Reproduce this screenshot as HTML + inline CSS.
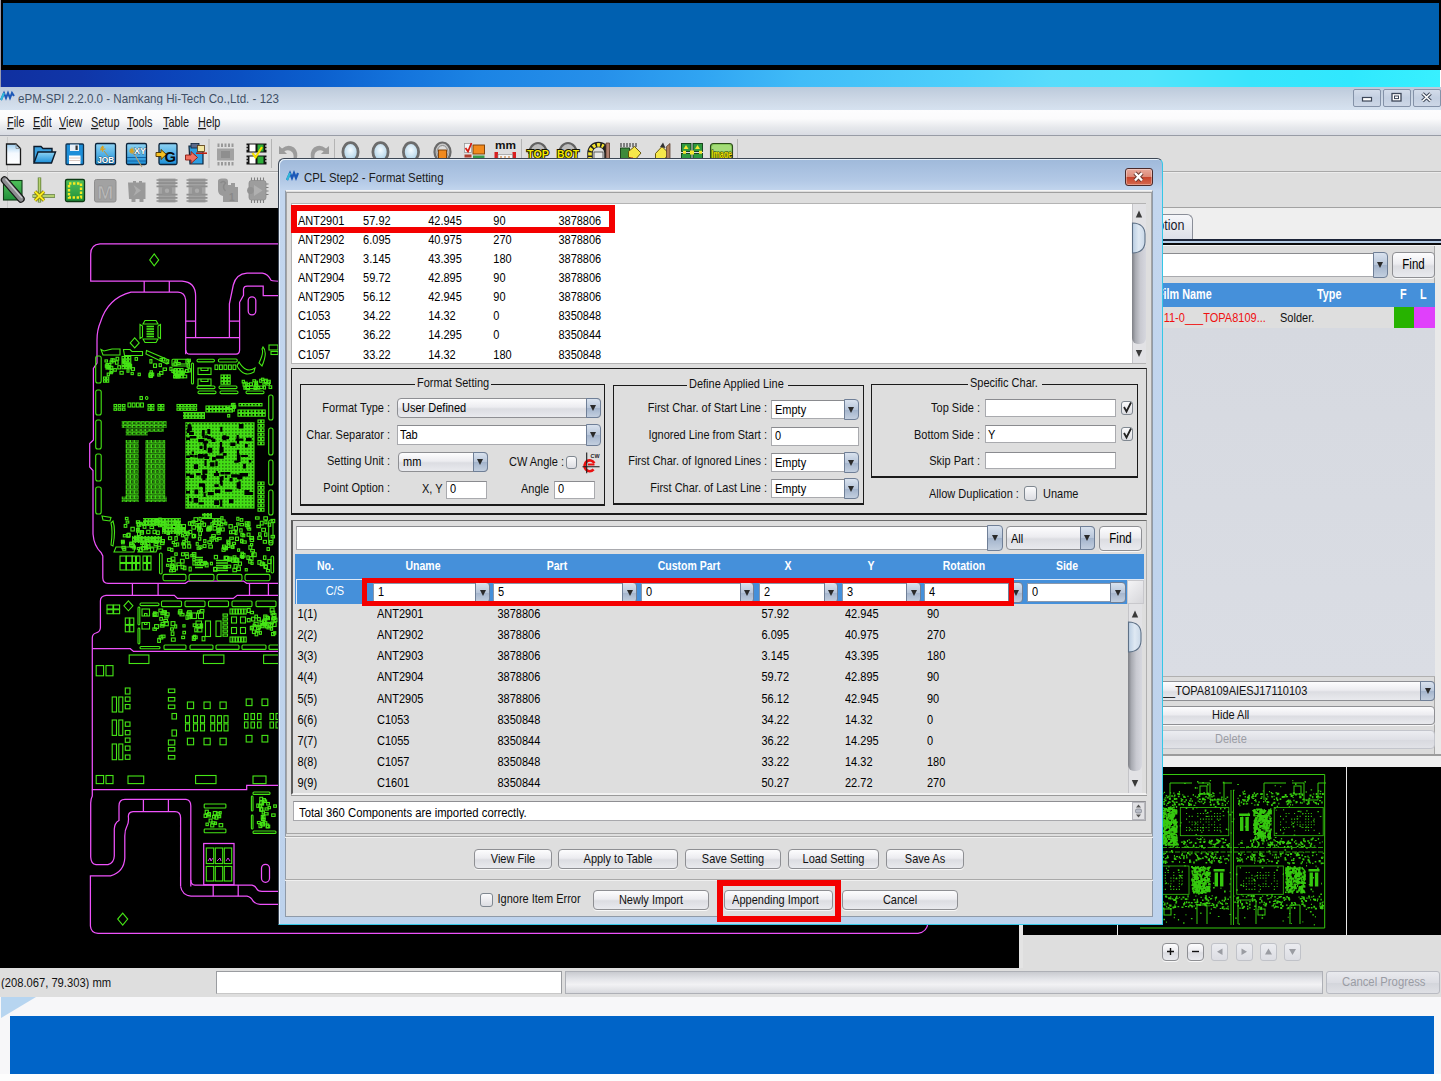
<!DOCTYPE html>
<html><head><meta charset="utf-8"><title>ePM-SPI</title>
<style>
html,body{margin:0;padding:0}
body{width:1441px;height:1081px;overflow:hidden;position:relative;background:#fff;font-family:"Liberation Sans",sans-serif;}
div{position:absolute;box-sizing:border-box}
svg{position:absolute;overflow:visible}
.t{position:absolute;white-space:nowrap;transform-origin:0 0;font-family:"Liberation Sans",sans-serif;}
.btn{border:1px solid #8e8f93;border-radius:4px;background:linear-gradient(#fdfdfe 0%,#ececf0 45%,#dcdde2 55%,#e9eaee 100%);box-shadow:0 1px 0 #f8f8f8}
.fld{background:#fff;border:1px solid #a9aaae;border-top-color:#8a8b8f}
.cbb{border:1px solid #6f7f97;border-radius:0 4px 4px 0;background:linear-gradient(#d9e2ee 0%,#b8c6da 50%,#a3b4cc 51%,#c3cfdf 100%)}
.cbn{border:1px solid #8e8f93;border-radius:4px;background:linear-gradient(#fdfdfe 0%,#ececf0 45%,#dcdde2 55%,#e9eaee 100%)}
.arr{width:0;height:0;border-left:3px solid transparent;border-right:3px solid transparent;border-top:6px solid #2a2a2a}
.chk{border:1px solid #7f8790;border-radius:3px;background:linear-gradient(#fbfbfc,#dcdde2)}

</style></head>
<body>
<div style="left:0px;top:0px;width:1px;height:1081px;background:#9a9cb0"></div>
<div style="left:1px;top:0px;width:1440px;height:70px;background:#000"></div>
<div style="left:3px;top:3px;width:1436px;height:62px;background:#0060b0"></div>
<div style="left:1px;top:70px;width:1439px;height:17px;background:linear-gradient(90deg,#1030a0 0.0%,#1036a8 5.6%,#0c42b8 11.1%,#0a50c2 16.7%,#0c60ce 22.2%,#1474dc 27.8%,#1c84e4 33.4%,#2690ea 41.7%,#30a4f2 48.6%,#40bcf8 55.6%,#48c8fa 62.5%,#4cd0fc 66.7%,#58dcfc 73.0%,#50e4fc 79.9%,#38e4fc 86.9%,#30e8fe 93.8%,#38f0ff 100.0%)"></div>
<div style="left:0px;top:87px;width:1441px;height:23px;background:linear-gradient(#bccadb 0%,#cdd8e6 55%,#d6e2f0 100%)"></div>
<svg style="left:1px;top:92px" width="14" height="10" viewBox="0 0 14 10"><path d="M0 8 L3 1 L5 6 L7 1 L9 6 L11 1 L13 4" fill="none" stroke="#1c58b8" stroke-width="2"/><path d="M0 8 L3 1" stroke="#30b8d8" stroke-width="2"/></svg>
<span class="t" style="left:18px;top:91.90px;font-size:11.6px;line-height:11.6px;transform:scale(1,1.08);color:#3f5066;">ePM-SPI 2.2.0.0 - Namkang Hi-Tech Co.,Ltd. - 123</span>
<div style="left:1353px;top:89px;width:28px;height:18px;border:1px solid #8492a8;border-radius:2px;background:linear-gradient(#d3dcea,#c3cfe1 50%,#cdd7e6)"></div>
<div style="left:1383px;top:89px;width:28px;height:18px;border:1px solid #8492a8;border-radius:2px;background:linear-gradient(#d3dcea,#c3cfe1 50%,#cdd7e6)"></div>
<div style="left:1413px;top:89px;width:28px;height:18px;border:1px solid #8492a8;border-radius:2px;background:linear-gradient(#d3dcea,#c3cfe1 50%,#cdd7e6)"></div>
<svg style="left:1353px;top:89px" width="88" height="18" viewBox="0 0 88 18"><rect x="9.5" y="8.5" width="9" height="3.5" fill="#fff" stroke="#3c4658" stroke-width="1.2"/><rect x="39" y="4.5" width="9" height="7.5" fill="#fff" stroke="#3c4658" stroke-width="1.3"/><rect x="41.5" y="7" width="4" height="2.6" fill="#fff" stroke="#3c4658" stroke-width="1"/><path d="M69.5 4.5 L77.5 12 M77.5 4.5 L69.5 12" stroke="#3c4658" stroke-width="3.6"/><path d="M69.5 4.5 L77.5 12 M77.5 4.5 L69.5 12" stroke="#fff" stroke-width="1.6"/></svg>
<div style="left:0px;top:110px;width:1441px;height:26px;background:linear-gradient(#fdfdfe 0%,#fbfbfc 35%,#e6e8ec 70%,#d9dce3 100%);border-bottom:1px solid #989ca6"></div>
<span class="t" style="left:7px;top:115.01px;font-size:10.9px;line-height:10.9px;transform:scale(1,1.3);color:#1a1a1a;"><u>F</u>ile</span>
<span class="t" style="left:33px;top:115.01px;font-size:10.9px;line-height:10.9px;transform:scale(1,1.3);color:#1a1a1a;"><u>E</u>dit</span>
<span class="t" style="left:59px;top:115.01px;font-size:10.9px;line-height:10.9px;transform:scale(1,1.3);color:#1a1a1a;"><u>V</u>iew</span>
<span class="t" style="left:91px;top:115.01px;font-size:10.9px;line-height:10.9px;transform:scale(1,1.3);color:#1a1a1a;"><u>S</u>etup</span>
<span class="t" style="left:127px;top:115.01px;font-size:10.9px;line-height:10.9px;transform:scale(1,1.3);color:#1a1a1a;"><u>T</u>ools</span>
<span class="t" style="left:163px;top:115.01px;font-size:10.9px;line-height:10.9px;transform:scale(1,1.3);color:#1a1a1a;"><u>T</u>able</span>
<span class="t" style="left:198px;top:115.01px;font-size:10.9px;line-height:10.9px;transform:scale(1,1.3);color:#1a1a1a;"><u>H</u>elp</span>
<div style="left:0px;top:136px;width:1441px;height:73px;background:#dedede"></div>
<div style="left:0px;top:171px;width:1441px;height:1px;background:#a8a8a8"></div>
<div style="left:0px;top:172px;width:1441px;height:1px;background:#ececec"></div>
<div style="left:7px;top:137px;width:1px;height:71px;background:#c9c9c9"></div>
<div style="left:0px;top:208px;width:1020px;height:760px;background:#000"></div>
<div style="left:0px;top:968px;width:1441px;height:29px;background:#dedede"></div>
<span class="t" style="left:1px;top:976.41px;font-size:11.2px;line-height:11.2px;transform:scale(1,1.17);color:#111;">(208.067, 79.303) mm</span>
<div style="left:216px;top:971px;width:346px;height:23px;background:#fff;border:1px solid #9a9ca0;border-bottom-color:#c8c8c8"></div>
<div style="left:565px;top:971px;width:758px;height:23px;border:1px solid #aeb0b6;background:linear-gradient(#c9cbd0 0%,#e4e5e9 35%,#f2f2f4 60%,#d8d9de 100%)"></div>
<div style="left:1326px;top:971px;width:114px;height:23px;border:1px solid #b9bbc2;border-radius:3px;background:linear-gradient(#e9eaee,#dcdde3 50%,#d3d5db 52%,#dfe0e5)"></div>
<span class="t" style="left:1342px;top:976.40px;font-size:11.3px;line-height:11.3px;transform:scale(1,1.16);color:#9a9ca4;">Cancel Progress</span>
<div style="left:0px;top:997px;width:1441px;height:84px;background:#f7f7f9"></div>
<svg style="left:0;top:997px" width="40" height="22"><polygon points="1,0 36,0 1,21" fill="#b7d5f0"/></svg>
<div style="left:10px;top:1016px;width:1424px;height:58px;background:#0064c8"></div>
<div style="left:0px;top:1074px;width:1441px;height:7px;background:#fdfdfd"></div>
<svg style="left:0;top:136px" width="760" height="72" viewBox="0 136 760 72" font-family="Liberation Sans, sans-serif"><defs><linearGradient id="gb" x1="0" y1="0" x2="0" y2="1"><stop offset="0" stop-color="#8fd4f4"/><stop offset="1" stop-color="#1b8fd8"/></linearGradient><linearGradient id="gd" x1="0" y1="0" x2="0" y2="1"><stop offset="0" stop-color="#9fd0f2"/><stop offset=".45" stop-color="#f4f9fe"/><stop offset="1" stop-color="#fff"/></linearGradient><linearGradient id="gg" x1="0" y1="0" x2="0" y2="1"><stop offset="0" stop-color="#4fc05a"/><stop offset="1" stop-color="#1f8f38"/></linearGradient><radialGradient id="gl" cx=".5" cy=".4" r=".6"><stop offset="0" stop-color="#f4fbff"/><stop offset="1" stop-color="#a9cfe6"/></radialGradient></defs><path d="M6.5 144 H16 L20.5 148.5 V164.5 H6.5 Z" fill="url(#gd)" stroke="#1a1a1a" stroke-width="1.3"/><path d="M16 144 V148.5 H20.5" fill="none" stroke="#888" stroke-width=".8"/><path d="M34 162.5 V146.5 H41 L43 148.5 H52 V152" fill="#3aa0de" stroke="#0c1a2a" stroke-width="1.4"/><path d="M34 163 L38 152 H55.5 L51.5 163 Z" fill="url(#gb)" stroke="#0c1a2a" stroke-width="1.4"/><rect x="66" y="144" width="17.5" height="20.5" rx="1" fill="#1d8fd9" stroke="#12324e" stroke-width="1.3"/><rect x="70" y="144.5" width="9" height="6.5" fill="#e8f0f8"/><rect x="75.5" y="145.5" width="2.2" height="4.5" fill="#333"/><rect x="69" y="155.5" width="11.5" height="8.5" fill="#fff"/><path d="M69 158 H80.5 M69 160.5 H80.5" stroke="#d9c8c0" stroke-width="1"/><rect x="95.5" y="143.5" width="20" height="21" rx="1.5" fill="url(#gb)" stroke="#0c2238" stroke-width="1.3"/><path d="M101 147 l3 3 M104 146.5 l-3.5 4 M100 149 h5.5 M102.5 145.8 v6" stroke="#d9a020" stroke-width="1.1"/><path d="M104 151 L108 156" stroke="#c09030" stroke-width=".9"/><text x="97.2" y="162.5" font-size="9.2" font-weight="bold" fill="#fff" stroke="#111" stroke-width=".55" paint-order="stroke" textLength="17" lengthAdjust="spacingAndGlyphs">JOB</text><rect x="126.5" y="143.5" width="20" height="21" rx="1.5" fill="url(#gb)" stroke="#0c2238" stroke-width="1.3"/><path d="M127 157.5 H146 M127 161 H146" stroke="#0e5c9c" stroke-width=".9"/><path d="M130 149 l3.5 3.5 M133.5 148.8 l-3.5 4 M129 151 h6 M132 147.5 v6.5" stroke="#d9a020" stroke-width="1.1"/><path d="M133 152 L142 167" stroke="#b8a070" stroke-width="1.1"/><text x="134" y="154" font-size="9.5" font-weight="bold" fill="#fff" stroke="#111" stroke-width=".55" paint-order="stroke" textLength="12" lengthAdjust="spacingAndGlyphs">XY</text><rect x="159" y="143.5" width="18" height="21" rx="1.5" fill="url(#gb)" stroke="#0c2238" stroke-width="1.3"/><path d="M156 152.5 H161 V149.5 L166.5 154.5 L161 159.5 V156.5 H156 Z" fill="#f5c020" stroke="#4a3000" stroke-width=".9"/><text x="164.5" y="161.5" font-size="14" font-weight="bold" fill="#0a0a0a" textLength="11.5" lengthAdjust="spacingAndGlyphs">G</text><path d="M189 146 H203 V164 H190 Z" fill="#2f9ee0" stroke="#0c2238" stroke-width="1.2"/><rect x="191" y="143.5" width="8" height="4.5" fill="#5a6a8a" stroke="#0c2238" stroke-width=".8"/><rect x="197.5" y="145.5" width="7" height="6" fill="#f2e6a0" stroke="#5a3a10" stroke-width=".8"/><path d="M196 153.2 H207" stroke="#c02010" stroke-width="1.6"/><path d="M185.500 155 H191 V151.5 L197.5 157.5 L191 163.5 V160 H185.5 Z" fill="#f07060" stroke="#8a1a10" stroke-width=".9"/><path d="M209 139 V168 M271.500 139 V168 M334.500 139 V168" stroke="#b4b4b4" stroke-width="1"/><rect x="217" y="148.500" width="17" height="12" fill="#a2a2a2"/><rect x="221" y="151" width="9" height="7" fill="#8e8e8e"/><path d="M218.500 143.500 v3.500 M222 143.500 v3.500 M225.500 143.500 v3.500 M229 143.500 v3.500 M232.500 143.500 v3.500 M218.500 162 v3.500 M222 162 v3.500 M225.500 162 v3.500 M229 162 v3.500 M232.500 162 v3.500" stroke="#999" stroke-width="2"/><rect x="246.500" y="143.500" width="20" height="9" fill="#111"/><rect x="246.500" y="155.500" width="20" height="9" fill="#111"/><rect x="249.500" y="144.500" width="6" height="7" fill="#fff"/><rect x="257.500" y="144.500" width="6" height="7" fill="#2fae3a"/><rect x="249.500" y="156.500" width="6" height="7" fill="#fff"/><rect x="257.500" y="156.500" width="6" height="7" fill="#2fae3a"/><path d="M246 146 h2 M246 149 h2 M246 158 h2 M246 161 h2 M265 146 h2 M265 149 h2 M265 158 h2 M265 161 h2" stroke="#fff" stroke-width="1"/><path d="M252.500 153 L255.500 157.500 L262 147" fill="none" stroke="#f4e000" stroke-width="2.2"/><path d="M279 146 V154 H287 L284.300 151.300 Q289 148.500 292.500 152.500 Q294.500 156 293 160 L296.500 160 Q299 152 294 147.500 Q288 143.500 282 148.500 Z" fill="#9c9c9c"/><path d="M329 146 V154 H321 L323.700 151.300 Q319 148.500 315.500 152.500 Q313.500 156 315 160 L311.500 160 Q309 152 314 147.500 Q320 143.500 326 148.500 Z" fill="#9c9c9c"/><ellipse cx="350.5" cy="152" rx="7.6" ry="9.3" fill="url(#gl)" stroke="#6c6c6c" stroke-width="2.800"/><rect x="347.5" y="158.500" width="6" height="3" fill="#f08020"/><ellipse cx="380.5" cy="152" rx="7.6" ry="9.3" fill="url(#gl)" stroke="#6c6c6c" stroke-width="2.800"/><rect x="377.5" y="158.500" width="6" height="3" fill="#f08020"/><ellipse cx="411" cy="152" rx="7.6" ry="9.3" fill="url(#gl)" stroke="#6c6c6c" stroke-width="2.800"/><rect x="408" y="158.500" width="6" height="3" fill="#f08020"/><ellipse cx="442.500" cy="152" rx="8" ry="9.500" fill="#c9c9c9" stroke="#6a6a6a" stroke-width="2.2"/><ellipse cx="442.500" cy="152.500" rx="5.500" ry="7" fill="#ddd" stroke="#888" stroke-width="1"/><rect x="438.500" y="150" width="8" height="9" fill="#f08a20" stroke="#7a3a00" stroke-width=".9"/><rect x="464.500" y="143.500" width="7" height="9" fill="#f4f4f4" stroke="#999" stroke-width=".8"/><path d="M465.500 148 L468 151.500 L471.500 143" fill="none" stroke="#d81a10" stroke-width="1.7"/><rect x="473" y="145" width="11.500" height="9" fill="#f28a1c" stroke="#7a3a00" stroke-width=".9"/><rect x="464.500" y="154.500" width="7" height="3" fill="#b04030"/><rect x="473" y="155.500" width="11.500" height="2.500" fill="#3a9a4a"/><text x="495" y="148.500" font-size="10.5" font-weight="bold" fill="#111" textLength="21" lengthAdjust="spacingAndGlyphs">mm</text><rect x="494.500" y="152" width="3.500" height="8" fill="#d82020"/><rect x="512.500" y="152" width="3.500" height="8" fill="#d82020"/><rect x="498" y="154.500" width="14.500" height="5.500" fill="#f4f4f4" stroke="#888" stroke-width=".6"/><path d="M501 156 v4 M505 156 v4 M509 156 v4" stroke="#c07020" stroke-width="1"/><path d="M521.500 139 V168 M737.500 139 V168" stroke="#b4b4b4" stroke-width="1"/><path d="M529 154 A9 11 0 0 1 547 154" fill="#bcbcbc" stroke="#626262" stroke-width="2.2"/><text x="527" y="157.800" font-size="11.5" font-weight="bold" fill="#f4e800" stroke="#111100" stroke-width="2" paint-order="stroke" textLength="22" lengthAdjust="spacingAndGlyphs">TOP</text><path d="M559 154 A9 11 0 0 1 577 154" fill="#bcbcbc" stroke="#626262" stroke-width="2.2"/><text x="557" y="157.800" font-size="11.5" font-weight="bold" fill="#f4e800" stroke="#111100" stroke-width="2" paint-order="stroke" textLength="22" lengthAdjust="spacingAndGlyphs">BOT</text><path d="M590 160 V153 A8.500 8.500 0 0 1 607 153 V160" fill="none" stroke="#222" stroke-width="5.500"/><path d="M590 160 V153 A8.500 8.500 0 0 1 603.500 146.500" fill="none" stroke="#f4e430" stroke-width="3.600" stroke-dasharray="3 1.600"/><path d="M606 143 h3.500 v17 h-3.500z" fill="#b08070" stroke="#503020" stroke-width=".7"/><rect x="594" y="152" width="9" height="8" fill="#e8e8e8" stroke="#444" stroke-width=".8"/><rect x="620.500" y="148" width="9" height="12" fill="#3d8a3a" stroke="#143a14" stroke-width=".9"/><path d="M621 143 v4 M624 143 v4 M627 143 v4 M630 143 v4 M633 143 v4 M636 143 v4" stroke="#222" stroke-width="1"/><path d="M628.500 151.500 L634.500 146.500 L641 153 L635 160 L628.500 157 Z" fill="#f6e84a" stroke="#5a4a00" stroke-width=".9"/><rect x="630" y="157.500" width="3" height="3" fill="#c82020"/><path d="M655.500 153.500 L662 146.500 L669 153.500 L663 161 L655.500 158.500 Z" fill="#f6e84a" stroke="#5a4a00" stroke-width=".9"/><path d="M660 147 L663 142.500 L665.500 148" fill="#333"/><path d="M666.500 160 V146.500 L670 143.500 V160 Z" fill="#b08060" stroke="#503020" stroke-width=".7"/><rect x="681.500" y="143.500" width="9.500" height="8" fill="#2f9a40" stroke="#0e3a14" stroke-width=".9"/><rect x="693" y="143.500" width="9.500" height="8" fill="#2f9a40" stroke="#0e3a14" stroke-width=".9"/><rect x="681.500" y="153.500" width="9.500" height="7" fill="#2f9a40" stroke="#0e3a14" stroke-width=".9"/><rect x="693" y="153.500" width="9.500" height="7" fill="#2f9a40" stroke="#0e3a14" stroke-width=".9"/><path d="M686 145 l2.500 4 h-5z M697.500 145 l2.500 4 h-5z" fill="#f4e830"/><rect x="690" y="150.500" width="4" height="4" fill="#f4e830"/><rect x="683" y="150.800" width="3" height="3" fill="#f4e830"/><rect x="699" y="150.800" width="3" height="3" fill="#f4e830"/><rect x="710.500" y="143.500" width="22" height="17" rx="3" fill="#86c85a" stroke="#2a4a18" stroke-width="1.1"/><rect x="712" y="145" width="19" height="6" rx="2" fill="#a4dc78"/><text x="711.500" y="158.200" font-size="10.5" font-weight="bold" fill="#f4e800" stroke="#1a1a00" stroke-width="1.1" paint-order="stroke" textLength="20.500" lengthAdjust="spacingAndGlyphs">Image</text><rect x="3.500" y="180.500" width="18.500" height="19.500" fill="url(#gg)" stroke="#0e3a14" stroke-width="1.1"/><path d="M4.500 180 L21 199" stroke="#1a1a1a" stroke-width="7.500" stroke-linecap="round"/><path d="M4.500 180 L21 199" stroke="#8c8c90" stroke-width="5" stroke-linecap="round"/><path d="M5.500 179 L22 198" stroke="#c8c8cc" stroke-width="1.300"/><path d="M39.500 177.500 V202.500 M32.500 196 H55" stroke="#5a7a30" stroke-width="3.400"/><path d="M39.500 178 V202 M33 196 H54.500" stroke="#b4d070" stroke-width="1.800"/><path d="M35 191.500 L44 200.500 M44 191.500 L35 200.500" stroke="#7a6a00" stroke-width="3.400"/><path d="M35 191.500 L44 200.500 M44 191.500 L35 200.500" stroke="#f8ec20" stroke-width="2"/><rect x="65.500" y="179.500" width="19" height="22" rx="1.500" fill="url(#gg)" stroke="#0e3a14" stroke-width="1.300"/><rect x="69" y="183.500" width="12" height="14" fill="none" stroke="#f6ea20" stroke-width="2.400" stroke-dasharray="2.400 1.600"/><rect x="94.500" y="179.500" width="21.500" height="22.500" rx="2" fill="#a2a2a2" stroke="#8e8e8e" stroke-width="1"/><text x="97.300" y="198.500" font-size="18" font-weight="bold" fill="#b9b9b9" stroke="#909090" stroke-width=".5" textLength="16" lengthAdjust="spacingAndGlyphs">M</text><path d="M128 182.500 h5 v-1.500 h3 v1.500 h3 v-1.500 h3 v1.500 h3.500 v16.500 h-2 v3 h-4 v-3 h-4 v3 h-4 v-3 h-2.500 z" fill="#999"/><path d="M133.500 185 L141 190.500 L133.500 196 L136 190.500 Z" fill="#adadad"/><rect x="158.5" y="178.500" width="17" height="24" fill="#a3a3a3"/><path d="M156.5 180 h21 M156.5 183.200 h21 M156.5 186.400 h21 M156.5 194.600 h21 M156.5 197.800 h21 M156.5 201 h21" stroke="#8f8f8f" stroke-width="1.700"/><rect x="162.0" y="186" width="10" height="9.500" rx="3" fill="#949494"/><circle cx="167.0" cy="190.700" r="2.200" fill="#ababab"/><rect x="188.5" y="178.500" width="17" height="24" fill="#a3a3a3"/><path d="M186.5 180 h21 M186.5 183.200 h21 M186.5 186.400 h21 M186.5 194.600 h21 M186.5 197.800 h21 M186.5 201 h21" stroke="#8f8f8f" stroke-width="1.700"/><rect x="192.0" y="186" width="10" height="9.500" rx="3" fill="#949494"/><circle cx="197.0" cy="190.700" r="2.200" fill="#ababab"/><path d="M218 181 q0 -2.500 4 -2.500 h3 q3 0 3 3 v3.500 h3 v-2 h4 v4 h3 v15 h-15 v-6 q-5 -1 -5 -6 z" fill="#9a9a9a"/><path d="M220.500 183 q3 -3 5 0 q-4 4 0 8" fill="none" stroke="#8a8a8a" stroke-width="1.500"/><text x="229" y="200.500" font-size="10" fill="#888" font-weight="bold">1</text><rect x="249" y="180.500" width="17" height="19.500" rx="2.500" fill="#9d9d9d" stroke="#8c8c8c" stroke-width=".8"/><path d="M251.500 177.500 v3 M254.500 177.500 v3 M257.500 177.500 v3 M260.500 177.500 v3 M263.500 177.500 v3 M251.500 200 v3 M254.500 200 v3 M257.500 200 v3 M260.500 200 v3 M263.500 200 v3 M266 184 h2.500 M266 187.500 h2.500 M266 191 h2.500 M266 194.500 h2.500" stroke="#7e7e7e" stroke-width="1.100"/><path d="M254 185 L262.500 190.500 L254 196 Z" fill="#b0b0b0"/><circle cx="250.500" cy="190.500" r="3.400" fill="#929292"/></svg>
<svg style="left:0;top:208px" width="1020" height="760" viewBox="0 208 1020 760"><defs><pattern id="pb" width="3.3" height="3.3" patternUnits="userSpaceOnUse"><rect x=".5" y=".5" width="2.3" height="2.3" fill="none" stroke="#46e616" stroke-width=".95"/></pattern><pattern id="pm" width="4.2" height="5.1" patternUnits="userSpaceOnUse"><rect x=".5" y=".6" width="3" height="3.6" fill="none" stroke="#46e616" stroke-width=".95"/><rect x="1.4" y="1.6" width="1.2" height="1.6" fill="#46e616" fill-opacity=".6"/></pattern><pattern id="ps" width="4.4" height="3.4" patternUnits="userSpaceOnUse"><rect x=".5" y=".5" width="3.2" height="2.2" fill="none" stroke="#46e616" stroke-width=".9"/></pattern></defs><g fill="none" stroke="#ee52fb" stroke-width="1.25"><path d="M940 243.8 H100 Q90.7 244.5 90.7 254 V281.1 H182 Q195.6 282 195.600 296 V337.700"/><path d="M144.2 281.1 V292.1 M169.3 281.1 V292.1"/><path d="M185.700 354.200 V300 Q185 292.500 178 292.100 H131 Q108 298 100.500 322 Q97 330 97 340 V363 L93.400 368.500 V440 L89.700 443.500 V467 L93 470.500 V534 Q94 546 101 552.500 L102.800 556 V578 Q103 583.300 108 583.300 H185.300 L188.500 581.100 H243.500 L246.700 583.300 H940"/><path d="M185.700 321.200 H195.600 M229.400 321.200 H239.600 M185.700 337.700 H239.600"/><path d="M185.700 350 Q186 354.200 190 354.200 H236 Q239.600 354 239.600 350 V302.300 L243.500 295.300 V289 Q244 286.100 247 286.100 H263.200 V295.700 H300"/><path d="M229.400 337.700 V303.900 L233.300 285 Q236 274 247 273.200 H262.400 Q268 274 271 280.300 Q274 282 300 281"/><rect x="248.200" y="296.800" width="7.600" height="18.100" rx="3.800"/><path d="M132.400 583.300 V595.300 M158.100 583.300 V595.300 M249.500 583.300 V595.300 M268.400 583.300 V595.300"/><path d="M940 595.300 H237.200 L233.300 598.400 H177.500 L174.300 595.300 H106 Q100.400 596 100.400 601 V628 Q100 632 96 633 Q92.300 634 92.300 638 V789.600 H246.700 V785.400 H940"/><path d="M92.300 648.700 H130.300 L133.500 651.400 H940"/><path d="M92.300 789.600 V796 Q90.700 799 90.700 803 V857 Q91 864 96 864.700 H108 Q114 863 114.300 856 V829 Q114.500 823 119 820.500 V806 Q119 799.400 125 799.400 H186 Q190.800 800 190.800 806 V886.500"/><path d="M143.400 799.400 V811.600 M168.400 799.400 V811.600"/><path d="M180.600 886.500 V818 Q180.600 811.600 175 811.600 H133 Q128 812 128.400 817 Q129 822 127 826 Q124.800 830 124.800 836 V858 Q124 872 110.500 875.800 H90.400 V926 Q91 933 98 933.300 H918 Q927 932 928 923"/><path d="M180.600 886.500 Q182 895 191 896.200 H247 Q251 897 253 901 Q256 904.300 260 904.300 H300"/><path d="M190.800 880 Q190.800 885 195 885.100 H252 Q255 885.500 256.500 888.500 Q258 891.400 262 891.400 H300"/><path d="M213.200 885.100 V896.200 M238.200 885.100 V896.200"/><rect x="203.700" y="843.500" width="30.300" height="41.300"/><rect x="261.500" y="864.300" width="8" height="18" rx="4"/></g><g fill="none" stroke="#46e616" stroke-width="1.1"><path d="M154.2 253.89999999999998 L158.7 259.9 L154.2 265.9 L149.7 259.9 Z"/><path d="M134.7 337.9 L139.2 342.9 L134.7 347.9 L130.2 342.9 Z"/><path d="M128.4 600.8 L132.9 605.8 L128.4 610.8 L123.9 605.8 Z"/><path d="M122.7 913.1 L127.7 919.1 L122.7 925.1 L117.7 919.1 Z"/><path d="M146.500 326.5 H154" stroke-width="1.6"/><path d="M146.500 329 H154" stroke-width="1.6"/><path d="M146.500 331.5 H154" stroke-width="1.6"/><path d="M146.500 334 H154" stroke-width="1.6"/><path d="M146.500 336.5 H154" stroke-width="1.6"/><path d="M145 320.500 H156 L158 324 H143 Z M143 339 H158 L156 342.500 H145 Z M140 324.500 L142.500 326 V337 L140 338.500 Z M160.500 324.500 L158 326 V337 L160.500 338.500 Z"/><path d="M101 349.500 L104 351 L112 349 H120 V355 H103 Z M123.500 349.500 H130 L132 351.500 H142.500 V355.500 H124.500 Z M146.500 350.500 L168.800 360 L167 364 L146 354 Z"/><rect x="172.0" y="359.2" width="17.3" height="6.8" rx="1"/><path d="M172 364 H188"/><rect x="197.0" y="359.3" width="17.4" height="2.6" rx="1.2"/><rect x="218.4" y="359.0" width="18.8" height="3.0" rx="1.2"/><path d="M239 362 Q246 374 255 368 L254 372 Q244 378 237 366 Z M263 347 Q268 352 262 366 L259 363 Q264 353 262 349 Z"/><rect x="269.0" y="345.0" width="9.0" height="5.0"/><rect x="271.0" y="351.5" width="7.0" height="3.0"/><rect x="95.7" y="356.0" width="5.5" height="27.0" rx="2"/><rect x="95.7" y="390.0" width="5.5" height="25.0" rx="2"/><rect x="95.7" y="420.0" width="5.5" height="29.0" rx="2"/><rect x="95.7" y="454.0" width="5.5" height="27.0" rx="2"/><rect x="95.7" y="487.0" width="5.5" height="27.0" rx="2"/><path d="M102 516 L111 517.500 L110 521 L103 520 Z M113 521 Q116 530 113 546 L111 545 Q113 530 111 523 Z"/><rect x="268.7" y="395.0" width="4.3" height="25.0" rx="2"/><rect x="268.7" y="428.0" width="4.3" height="27.0" rx="2"/><rect x="268.7" y="460.0" width="4.3" height="25.0" rx="2"/><rect x="268.7" y="490.0" width="4.3" height="25.0" rx="2"/><rect x="268.7" y="520.0" width="4.3" height="25.0" rx="2"/><rect x="160.0" y="358.4" width="2.5" height="2.2"/><rect x="109.9" y="366.3" width="2.9" height="2.6"/><rect x="110.9" y="358.7" width="2.1" height="2.7"/><rect x="115.4" y="360.9" width="2.7" height="3.3"/><rect x="153.5" y="363.9" width="3.0" height="3.5"/><rect x="176.6" y="362.5" width="3.6" height="2.1"/><rect x="131.1" y="372.4" width="2.2" height="2.2"/><rect x="159.1" y="363.7" width="2.3" height="2.9"/><rect x="110.0" y="360.9" width="2.9" height="2.1"/><rect x="131.4" y="367.7" width="3.1" height="2.7"/><rect x="171.9" y="369.9" width="2.7" height="2.5"/><rect x="149.4" y="372.8" width="2.4" height="2.9"/><rect x="187.2" y="359.2" width="3.2" height="2.5"/><rect x="117.8" y="365.7" width="2.7" height="3.2"/><rect x="169.9" y="367.3" width="2.1" height="3.1"/><rect x="163.1" y="368.0" width="3.4" height="2.5"/><rect x="175.6" y="374.3" width="2.9" height="2.7"/><rect x="110.1" y="369.6" width="2.8" height="3.1"/><rect x="174.0" y="362.0" width="3.0" height="3.6"/><rect x="106.9" y="365.3" width="2.6" height="3.1"/><rect x="110.0" y="371.5" width="2.3" height="2.2"/><rect x="138.1" y="373.2" width="2.2" height="2.4"/><rect x="151.6" y="373.1" width="2.1" height="2.7"/><rect x="128.3" y="364.3" width="3.3" height="3.4"/><rect x="185.9" y="359.7" width="2.6" height="3.4"/><rect x="124.8" y="366.0" width="2.3" height="2.4"/><rect x="105.3" y="364.8" width="2.9" height="2.4"/><rect x="185.5" y="369.5" width="2.6" height="2.9"/><rect x="161.9" y="358.0" width="2.8" height="3.0"/><rect x="178.1" y="371.2" width="3.4" height="3.2"/><rect x="113.7" y="368.6" width="2.6" height="2.6"/><rect x="122.7" y="360.1" width="2.1" height="2.1"/><rect x="105.0" y="359.9" width="2.5" height="2.1"/><rect x="107.2" y="373.1" width="2.2" height="2.6"/><rect x="126.2" y="363.5" width="3.0" height="2.2"/><rect x="176.7" y="375.7" width="2.6" height="2.2"/><rect x="112.2" y="358.9" width="2.7" height="2.8"/><rect x="175.0" y="360.0" width="2.5" height="2.4"/><rect x="149.9" y="359.6" width="2.0" height="3.5"/><rect x="149.4" y="375.5" width="2.9" height="2.0"/><rect x="126.8" y="363.6" width="3.4" height="3.1"/><rect x="150.1" y="370.8" width="2.3" height="3.2"/><rect x="173.6" y="375.4" width="2.5" height="2.4"/><rect x="173.4" y="370.1" width="3.4" height="3.3"/><rect x="135.1" y="357.5" width="2.4" height="2.8"/><rect x="127.0" y="369.8" width="2.0" height="2.4"/><rect x="183.2" y="375.1" width="3.5" height="2.7"/><rect x="123.4" y="361.2" width="3.5" height="2.6"/><rect x="157.8" y="373.8" width="2.3" height="2.3"/><rect x="159.6" y="371.6" width="3.3" height="2.8"/><rect x="182.2" y="371.0" width="2.1" height="3.1"/><rect x="120.0" y="371.4" width="3.2" height="2.8"/><rect x="187.1" y="364.0" width="2.5" height="3.3"/><rect x="166.1" y="360.0" width="2.6" height="3.5"/><rect x="181.7" y="372.1" width="2.2" height="2.2"/><rect x="188.1" y="368.6" width="2.2" height="3.3"/><rect x="116.1" y="357.3" width="2.6" height="2.9"/><rect x="148.9" y="373.8" width="3.6" height="3.0"/><rect x="106.0" y="363.5" width="2.2" height="2.2"/><rect x="106.0" y="366.9" width="2.2" height="2.2"/><rect x="108.6" y="363.5" width="2.2" height="2.2"/><rect x="108.6" y="366.9" width="2.2" height="2.2"/><rect x="122.0" y="356.5" width="2.4" height="2.4"/><rect x="122.0" y="359.8" width="2.4" height="2.4"/><rect x="122.0" y="363.1" width="2.4" height="2.4"/><rect x="122.0" y="366.4" width="2.4" height="2.4"/><rect x="125.2" y="356.5" width="2.4" height="2.4"/><rect x="125.2" y="359.8" width="2.4" height="2.4"/><rect x="125.2" y="363.1" width="2.4" height="2.4"/><rect x="125.2" y="366.4" width="2.4" height="2.4"/><rect x="128.4" y="356.5" width="2.4" height="2.4"/><rect x="128.4" y="359.8" width="2.4" height="2.4"/><rect x="128.4" y="363.1" width="2.4" height="2.4"/><rect x="128.4" y="366.4" width="2.4" height="2.4"/><rect x="174.0" y="368.5" width="2.4" height="2.6"/><rect x="174.0" y="371.9" width="2.4" height="2.6"/><rect x="174.0" y="375.3" width="2.4" height="2.6"/><rect x="177.3" y="368.5" width="2.4" height="2.6"/><rect x="177.3" y="371.9" width="2.4" height="2.6"/><rect x="177.3" y="375.3" width="2.4" height="2.6"/><rect x="180.6" y="368.5" width="2.4" height="2.6"/><rect x="180.6" y="371.9" width="2.4" height="2.6"/><rect x="180.6" y="375.3" width="2.4" height="2.6"/><rect x="103.5" y="377.0" width="2.2" height="2.2"/><rect x="106.5" y="377.0" width="2.2" height="2.2"/><rect x="103.5" y="380.0" width="2.2" height="2.2"/><rect x="106.5" y="380.0" width="2.2" height="2.2"/><rect x="198.0" y="368.0" width="13.0" height="6.5"/><rect x="198.0" y="379.0" width="13.0" height="6.5"/><path d="M201 368 v2.500 h7 v-2.500 M201 379 v2.500 h7 v-2.500"/><rect x="191.5" y="363.0" width="2.0" height="21.0" rx="1"/><rect x="215.0" y="365.0" width="2.8" height="4.5"/><rect x="219.5" y="365.0" width="2.8" height="4.5"/><rect x="224.0" y="365.0" width="2.8" height="4.5"/><rect x="228.5" y="365.0" width="2.8" height="4.5"/><rect x="233.0" y="365.0" width="2.8" height="4.5"/><rect x="221.0" y="375.0" width="2.6" height="2.6"/><rect x="221.0" y="378.3" width="2.6" height="2.6"/><rect x="221.0" y="381.6" width="2.6" height="2.6"/><rect x="224.3" y="375.0" width="2.6" height="2.6"/><rect x="224.3" y="378.3" width="2.6" height="2.6"/><rect x="224.3" y="381.6" width="2.6" height="2.6"/><rect x="227.6" y="375.0" width="2.6" height="2.6"/><rect x="227.6" y="378.3" width="2.6" height="2.6"/><rect x="227.6" y="381.6" width="2.6" height="2.6"/><rect x="264.3" y="379.9" width="2.6" height="3.2"/><rect x="247.1" y="383.6" width="2.4" height="2.4"/><rect x="243.9" y="386.6" width="2.4" height="2.6"/><rect x="257.2" y="386.5" width="2.5" height="2.6"/><rect x="254.8" y="382.6" width="2.6" height="3.3"/><rect x="252.9" y="379.8" width="2.7" height="2.0"/><rect x="245.2" y="382.2" width="2.0" height="3.1"/><rect x="249.4" y="382.8" width="3.0" height="2.8"/><rect x="243.1" y="383.0" width="2.8" height="3.1"/><rect x="262.9" y="382.9" width="2.3" height="2.4"/><rect x="266.7" y="382.0" width="2.8" height="3.1"/><rect x="254.9" y="384.4" width="2.9" height="2.7"/><rect x="254.0" y="386.7" width="2.6" height="2.7"/><rect x="267.3" y="380.3" width="3.0" height="3.2"/><rect x="264.5" y="379.2" width="2.8" height="3.3"/><rect x="242.2" y="380.3" width="2.2" height="2.6"/><rect x="263.4" y="386.1" width="2.1" height="2.9"/><rect x="259.7" y="379.3" width="2.2" height="3.0"/><rect x="246.3" y="386.2" width="3.2" height="3.4"/><rect x="269.1" y="385.8" width="2.6" height="2.7"/><rect x="255.4" y="381.2" width="2.2" height="2.6"/><rect x="261.5" y="378.2" width="2.3" height="2.4"/><rect x="197.0" y="386.0" width="18.0" height="2.6" rx="1.2"/><rect x="198.0" y="391.0" width="18.0" height="2.6" rx="1.2"/><rect x="219.0" y="386.0" width="18.0" height="2.6" rx="1.2"/><rect x="220.0" y="391.0" width="18.0" height="2.6" rx="1.2"/><rect x="245.0" y="386.0" width="18.0" height="2.6" rx="1.2"/><rect x="246.0" y="391.0" width="18.0" height="2.6" rx="1.2"/><rect x="114.0" y="404.5" width="2.6" height="2.2"/><rect x="114.0" y="408.1" width="2.6" height="2.2"/><rect x="118.2" y="404.5" width="2.6" height="2.2"/><rect x="118.2" y="408.1" width="2.6" height="2.2"/><rect x="122.4" y="404.5" width="2.6" height="2.2"/><rect x="122.4" y="408.1" width="2.6" height="2.2"/><rect x="128.0" y="403.0" width="2.8" height="4.0"/><rect x="132.2" y="403.0" width="2.8" height="4.0"/><rect x="136.4" y="403.0" width="2.8" height="4.0"/><rect x="140.6" y="403.0" width="2.8" height="4.0"/><rect x="148.0" y="404.5" width="2.6" height="2.2"/><rect x="148.0" y="408.1" width="2.6" height="2.2"/><rect x="151.3" y="404.5" width="2.6" height="2.2"/><rect x="151.3" y="408.1" width="2.6" height="2.2"/><rect x="158.0" y="404.5" width="2.6" height="2.2"/><rect x="158.0" y="408.1" width="2.6" height="2.2"/><rect x="161.3" y="404.5" width="2.6" height="2.2"/><rect x="161.3" y="408.1" width="2.6" height="2.2"/><rect x="140.0" y="396.5" width="2.4" height="3.0"/><rect x="145.5" y="396.5" width="2.4" height="3.0" rx="1.2"/><rect x="177.0" y="404.5" width="2.6" height="2.2"/><rect x="177.0" y="408.1" width="2.6" height="2.2"/><rect x="180.4" y="404.5" width="2.6" height="2.2"/><rect x="180.4" y="408.1" width="2.6" height="2.2"/><rect x="183.8" y="404.5" width="2.6" height="2.2"/><rect x="183.8" y="408.1" width="2.6" height="2.2"/><rect x="187.2" y="404.5" width="2.6" height="2.2"/><rect x="187.2" y="408.1" width="2.6" height="2.2"/><rect x="190.6" y="404.5" width="2.6" height="2.2"/><rect x="190.6" y="408.1" width="2.6" height="2.2"/><rect x="194.0" y="404.5" width="2.6" height="2.2"/><rect x="194.0" y="408.1" width="2.6" height="2.2"/><rect x="183" y="412" width="22" height="7" fill="url(#pb)" stroke="none"/><rect x="121.700" y="421" width="45" height="7" fill="url(#ps)" stroke="none"/><rect x="125.700" y="428.500" width="38" height="3.400" fill="url(#ps)" stroke="none"/><rect x="125.700" y="432" width="22" height="3.400" fill="url(#ps)" stroke="none"/><rect x="125.600" y="440" width="13" height="57" fill="url(#pm)" stroke="none"/><rect x="145.300" y="440" width="20" height="57" fill="url(#pm)" stroke="none"/><rect x="121.700" y="496.500" width="17" height="5.500" fill="url(#pm)" stroke="none"/><rect x="145.300" y="496.500" width="21.500" height="5.500" fill="url(#pm)" stroke="none"/><rect x="185.300" y="422.200" width="69.300" height="86.500" fill="url(#pb)" stroke="none"/><rect x="190" y="424" width="62" height="83" fill="#46e616" fill-opacity=".4" stroke="none"/><path d="M186 437.5h4v2.4h-4zM190.0 436.1h6.3v2.5h-6.3zM198.2 439.0h6.1v3.3h-6.1zM207.2 436.1h3.6v3.2h-3.6zM211.6 438.7h3.8v3.3h-3.8zM221.8 436.2h7.2v3.1h-7.2zM235.6 438.6h7.8v2.1h-7.8zM246.0 437.7h5.7v3.5h-5.7zM186 455.5h4v2.4h-4zM190.0 454.7h3.8v2.2h-3.8zM194.3 454.9h3.3v2.5h-3.3zM199.8 454.5h4.7v2.6h-4.7zM204.6 456.2h4.5v2.9h-4.5zM215.9 455.5h7.9v3.3h-7.9zM241.1 455.0h6.8v2.1h-6.8zM186 473.5h4v2.4h-4zM190.0 474.5h4.0v3.4h-4.0zM196.0 472.9h4.7v2.7h-4.7zM201.2 474.9h5.7v3.6h-5.7zM213.9 473.1h5.1v2.8h-5.1zM220.5 472.0h4.2v2.4h-4.2zM225.0 472.1h5.4v2.5h-5.4zM231.1 474.3h6.5v3.1h-6.5zM239.7 473.0h8.3v3.6h-8.3zM186 491h4v2.4h-4zM207.7 492.0h6.1v3.3h-6.1zM224.9 489.6h7.2v2.2h-7.2zM247.2 491.9h5.9v3.2h-5.9zM219.7 476.7h2.2v4.2h-2.2zM201.9 430.0h2.9v4.2h-2.9zM198.9 483.2h5.4v3.5h-5.4zM210.1 462.3h4.4v4.3h-4.4zM224.9 475.4h2.3v2.4h-2.3zM202.0 483.5h3.1v3.7h-3.1zM186.8 428.9h2.9v4.0h-2.9zM229.6 478.1h3.0v3.5h-3.0zM215.3 461.3h2.4v4.7h-2.4zM198.6 502.3h5.3v2.1h-5.3zM214.9 489.6h5.4v3.3h-5.4zM202.9 440.8h5.3v2.6h-5.3zM222.6 435.3h3.8v4.9h-3.8zM194.4 489.6h3.8v4.7h-3.8zM230.3 442.5h5.1v3.5h-5.1zM187.6 424.3h3.7v3.4h-3.7zM205.0 435.3h3.2v2.9h-3.2zM238.9 424.1h4.6v4.5h-4.6zM193.6 498.1h4.5v4.7h-4.5zM204.3 453.8h3.4v5.0h-3.4zM223.1 452.9h3.5v2.8h-3.5zM189.0 432.1h4.9v2.9h-4.9zM244.9 443.9h2.9v3.5h-2.9zM198.0 453.9h5.3v4.7h-5.3zM237.2 474.5h5.2v4.8h-5.2zM220.6 481.6h2.2v4.2h-2.2zM214.4 484.2h4.3v2.9h-4.3zM189.1 498.1h2.4v3.4h-2.4zM207.7 447.8h4.6v4.9h-4.6zM202.4 476.5h3.1v3.7h-3.1zM210.8 437.4h2.6v2.6h-2.6zM243.1 463.8h2.8v4.7h-2.8zM248.8 460.0h2.5v2.6h-2.5zM191.7 451.4h2.3v2.7h-2.3zM202.3 469.6h5.1v4.2h-5.1zM212.0 457.1h3.8v3.1h-3.8zM207.3 429.0h3.0v4.9h-3.0zM193.9 464.3h4.2v4.6h-4.2zM199.6 445.7h2.9v3.2h-2.9zM214.1 500.3h5.0v4.6h-5.0zM187.4 426.6h4.5v4.7h-4.5zM215.8 471.0h2.0v3.2h-2.0zM244.4 490.0h5.0v4.9h-5.0zM201.7 432.7h2.5v3.6h-2.5zM229.0 499.3h4.5v3.9h-4.5zM234.2 460.6h3.9v2.1h-3.9zM203.0 485.0h2.2v7.6h-2.2zM203.1 474.3h2.2v3.6h-2.2zM203.8 443.6h2.2v6.5h-2.2zM202.6 432.7h2.2v5.6h-2.2zM203.3 469.5h2.2v4.1h-2.2zM202.5 470.9h2.2v4.5h-2.2zM204.4 459.9h2.2v6.2h-2.2zM203.5 492.9h2.2v4.2h-2.2zM204.4 443.3h2.2v6.5h-2.2zM219.5 448.0h2.2v5.5h-2.2zM220.3 476.6h2.2v4.3h-2.2zM221.4 476.1h2.2v4.1h-2.2zM220.2 426.7h2.2v5.1h-2.2zM219.9 477.2h2.2v7.0h-2.2zM220.5 481.7h2.2v4.0h-2.2zM220.1 499.6h2.2v7.1h-2.2zM219.9 442.0h2.2v6.8h-2.2zM221.4 447.0h2.2v5.5h-2.2zM236.9 438.6h2.2v5.1h-2.2zM238.4 475.9h2.2v3.7h-2.2zM236.9 454.7h2.2v7.9h-2.2zM236.6 435.1h2.2v3.3h-2.2zM238.3 454.7h2.2v7.4h-2.2zM238.5 481.2h2.2v7.7h-2.2zM236.9 449.7h2.2v7.7h-2.2zM236.6 482.2h2.2v6.3h-2.2zM237.2 453.5h2.2v4.7h-2.2z" fill="#000" stroke="none"/><rect x="258.0" y="420.0" width="2.6" height="2.8"/><rect x="258.0" y="424.4" width="2.6" height="2.8"/><rect x="258.0" y="428.8" width="2.6" height="2.8"/><rect x="258.0" y="433.2" width="2.6" height="2.8"/><rect x="258.0" y="437.6" width="2.6" height="2.8"/><rect x="258.0" y="442.0" width="2.6" height="2.8"/><rect x="261.4" y="420.0" width="2.6" height="2.8"/><rect x="261.4" y="424.4" width="2.6" height="2.8"/><rect x="261.4" y="428.8" width="2.6" height="2.8"/><rect x="261.4" y="433.2" width="2.6" height="2.8"/><rect x="261.4" y="437.6" width="2.6" height="2.8"/><rect x="261.4" y="442.0" width="2.6" height="2.8"/><rect x="258.0" y="482.0" width="2.6" height="2.8"/><rect x="258.0" y="486.4" width="2.6" height="2.8"/><rect x="258.0" y="490.8" width="2.6" height="2.8"/><rect x="258.0" y="495.2" width="2.6" height="2.8"/><rect x="258.0" y="499.6" width="2.6" height="2.8"/><rect x="258.0" y="504.0" width="2.6" height="2.8"/><rect x="258.0" y="508.4" width="2.6" height="2.8"/><rect x="261.4" y="482.0" width="2.6" height="2.8"/><rect x="261.4" y="486.4" width="2.6" height="2.8"/><rect x="261.4" y="490.8" width="2.6" height="2.8"/><rect x="261.4" y="495.2" width="2.6" height="2.8"/><rect x="261.4" y="499.6" width="2.6" height="2.8"/><rect x="261.4" y="504.0" width="2.6" height="2.8"/><rect x="261.4" y="508.4" width="2.6" height="2.8"/><rect x="206.0" y="406.0" width="2.7" height="2.6"/><rect x="206.0" y="409.4" width="2.7" height="2.6"/><rect x="209.4" y="406.0" width="2.7" height="2.6"/><rect x="209.4" y="409.4" width="2.7" height="2.6"/><rect x="212.8" y="406.0" width="2.7" height="2.6"/><rect x="212.8" y="409.4" width="2.7" height="2.6"/><rect x="216.2" y="406.0" width="2.7" height="2.6"/><rect x="216.2" y="409.4" width="2.7" height="2.6"/><rect x="219.6" y="406.0" width="2.7" height="2.6"/><rect x="219.6" y="409.4" width="2.7" height="2.6"/><rect x="223.0" y="406.0" width="2.7" height="2.6"/><rect x="223.0" y="409.4" width="2.7" height="2.6"/><rect x="226.4" y="406.0" width="2.7" height="2.6"/><rect x="226.4" y="409.4" width="2.7" height="2.6"/><rect x="229.8" y="406.0" width="2.7" height="2.6"/><rect x="229.8" y="409.4" width="2.7" height="2.6"/><rect x="239.0" y="403.5" width="2.6" height="2.4"/><rect x="242.4" y="403.5" width="2.6" height="2.4"/><rect x="245.8" y="403.5" width="2.6" height="2.4"/><rect x="249.2" y="403.5" width="2.6" height="2.4"/><rect x="252.6" y="403.5" width="2.6" height="2.4"/><rect x="256.0" y="403.5" width="2.6" height="2.4"/><rect x="259.4" y="403.5" width="2.6" height="2.4"/><rect x="238.0" y="410.0" width="2.7" height="2.8"/><rect x="238.0" y="413.4" width="2.7" height="2.8"/><rect x="241.5" y="410.0" width="2.7" height="2.8"/><rect x="241.5" y="413.4" width="2.7" height="2.8"/><rect x="245.0" y="410.0" width="2.7" height="2.8"/><rect x="245.0" y="413.4" width="2.7" height="2.8"/><rect x="248.5" y="410.0" width="2.7" height="2.8"/><rect x="248.5" y="413.4" width="2.7" height="2.8"/><rect x="252.0" y="410.0" width="2.7" height="2.8"/><rect x="252.0" y="413.4" width="2.7" height="2.8"/><rect x="255.5" y="410.0" width="2.7" height="2.8"/><rect x="255.5" y="413.4" width="2.7" height="2.8"/><rect x="259.0" y="410.0" width="2.7" height="2.8"/><rect x="259.0" y="413.4" width="2.7" height="2.8"/><rect x="262.5" y="410.0" width="2.7" height="2.8"/><rect x="262.5" y="413.4" width="2.7" height="2.8"/><rect x="226.8" y="407.6" width="2.2" height="2.0"/><rect x="232.7" y="405.7" width="3.0" height="2.1"/><rect x="231.9" y="408.3" width="2.4" height="2.8"/><rect x="227.7" y="414.5" width="2.0" height="2.5"/><rect x="232.8" y="403.4" width="2.2" height="2.4"/><rect x="231.4" y="403.5" width="2.4" height="2.8"/><rect x="233.2" y="406.3" width="2.0" height="2.1"/><rect x="172.4" y="524.8" width="3.3" height="3.6"/><rect x="160.7" y="539.6" width="3.7" height="3.1"/><rect x="121.6" y="541.3" width="2.6" height="2.5"/><rect x="263.8" y="516.8" width="3.6" height="3.1"/><rect x="267.0" y="547.6" width="2.4" height="2.9"/><rect x="186.5" y="532.6" width="2.7" height="2.5"/><rect x="242.5" y="540.9" width="3.7" height="2.3"/><rect x="213.0" y="526.7" width="3.5" height="3.4"/><rect x="240.2" y="518.6" width="2.6" height="2.7"/><rect x="158.8" y="518.1" width="2.4" height="3.4"/><rect x="170.8" y="548.4" width="2.1" height="3.0"/><rect x="161.1" y="518.7" width="3.6" height="3.8"/><rect x="229.5" y="530.8" width="2.2" height="2.9"/><rect x="215.6" y="538.4" width="2.4" height="2.8"/><rect x="221.8" y="519.9" width="3.3" height="3.5"/><rect x="206.9" y="528.5" width="3.5" height="2.5"/><rect x="158.5" y="524.3" width="3.3" height="2.4"/><rect x="209.3" y="526.6" width="2.3" height="3.6"/><rect x="198.3" y="523.5" width="2.7" height="3.8"/><rect x="271.2" y="519.4" width="3.5" height="3.2"/><rect x="248.9" y="545.7" width="2.9" height="3.5"/><rect x="139.2" y="522.3" width="2.1" height="2.5"/><rect x="261.7" y="528.3" width="3.8" height="3.0"/><rect x="160.4" y="541.8" width="3.6" height="2.8"/><rect x="211.2" y="537.0" width="3.7" height="2.2"/><rect x="142.6" y="522.8" width="2.4" height="2.7"/><rect x="220.4" y="522.7" width="2.5" height="3.1"/><rect x="224.8" y="522.2" width="2.0" height="2.6"/><rect x="242.2" y="534.4" width="2.6" height="2.4"/><rect x="181.4" y="534.6" width="2.1" height="2.2"/><rect x="145.9" y="539.5" width="3.2" height="2.2"/><rect x="167.8" y="547.9" width="2.7" height="2.5"/><rect x="175.4" y="529.7" width="2.6" height="3.0"/><rect x="176.1" y="522.4" width="3.6" height="3.8"/><rect x="121.9" y="546.3" width="3.3" height="2.4"/><rect x="182.8" y="544.7" width="2.8" height="3.5"/><rect x="123.3" y="534.6" width="2.8" height="2.3"/><rect x="134.5" y="536.1" width="3.2" height="3.6"/><rect x="143.2" y="525.4" width="2.7" height="2.9"/><rect x="137.5" y="531.9" width="2.9" height="3.7"/><rect x="150.9" y="520.1" width="3.4" height="3.7"/><rect x="194.0" y="517.7" width="3.7" height="3.8"/><rect x="257.8" y="536.7" width="3.7" height="2.7"/><rect x="240.1" y="523.5" width="3.5" height="2.3"/><rect x="247.3" y="521.9" width="2.7" height="3.5"/><rect x="200.0" y="528.8" width="2.4" height="2.7"/><rect x="231.7" y="546.1" width="2.2" height="2.4"/><rect x="236.8" y="517.3" width="2.1" height="3.0"/><rect x="211.8" y="534.6" width="3.5" height="2.2"/><rect x="184.8" y="535.5" width="3.1" height="2.6"/><rect x="189.0" y="530.4" width="2.8" height="3.2"/><rect x="195.9" y="523.7" width="2.0" height="3.1"/><rect x="190.5" y="521.9" width="3.4" height="3.4"/><rect x="140.5" y="530.6" width="2.9" height="2.2"/><rect x="199.0" y="517.4" width="2.2" height="2.8"/><rect x="232.4" y="542.3" width="3.1" height="2.1"/><rect x="197.6" y="528.8" width="2.9" height="2.1"/><rect x="250.7" y="549.6" width="3.7" height="2.2"/><rect x="150.4" y="547.9" width="3.3" height="3.5"/><rect x="260.3" y="521.3" width="2.9" height="3.7"/><rect x="130.9" y="527.3" width="3.4" height="3.7"/><rect x="256.9" y="525.3" width="3.4" height="2.3"/><rect x="197.1" y="547.0" width="3.5" height="2.3"/><rect x="198.2" y="526.7" width="2.4" height="2.5"/><rect x="145.7" y="547.5" width="2.1" height="2.3"/><rect x="146.6" y="541.4" width="3.2" height="3.6"/><rect x="218.2" y="527.9" width="2.2" height="3.0"/><rect x="208.8" y="545.1" width="3.6" height="3.0"/><rect x="217.2" y="528.7" width="2.2" height="3.8"/><rect x="271.1" y="535.4" width="3.4" height="2.5"/><rect x="188.4" y="521.8" width="2.6" height="3.4"/><rect x="245.3" y="524.6" width="3.3" height="2.1"/><rect x="210.0" y="537.4" width="3.2" height="3.8"/><rect x="126.2" y="521.1" width="2.6" height="2.0"/><rect x="198.9" y="545.8" width="3.1" height="2.8"/><rect x="220.8" y="516.7" width="2.2" height="2.4"/><rect x="137.3" y="527.9" width="2.0" height="2.6"/><rect x="210.9" y="522.7" width="2.4" height="3.1"/><rect x="141.5" y="547.0" width="3.1" height="2.9"/><rect x="135.6" y="537.5" width="2.4" height="2.3"/><rect x="181.9" y="524.6" width="3.6" height="3.4"/><rect x="207.0" y="527.5" width="2.0" height="3.2"/><rect x="263.3" y="540.4" width="3.2" height="2.8"/><rect x="127.7" y="533.2" width="2.4" height="3.6"/><rect x="129.9" y="542.1" width="2.7" height="2.4"/><rect x="264.9" y="520.7" width="2.0" height="3.0"/><rect x="198.4" y="537.1" width="2.4" height="3.1"/><rect x="167.9" y="526.1" width="3.5" height="2.3"/><rect x="240.7" y="539.2" width="2.1" height="3.6"/><rect x="235.0" y="531.1" width="2.0" height="3.5"/><rect x="155.3" y="519.5" width="3.3" height="2.8"/><rect x="172.2" y="541.4" width="2.4" height="2.1"/><rect x="229.0" y="524.6" width="3.3" height="3.5"/><rect x="240.8" y="533.4" width="3.0" height="2.8"/><rect x="268.2" y="523.1" width="2.5" height="3.2"/><rect x="160.4" y="524.0" width="3.6" height="2.0"/><rect x="234.2" y="526.6" width="3.3" height="3.7"/><rect x="157.2" y="546.3" width="3.6" height="2.6"/><rect x="222.0" y="548.1" width="3.1" height="3.2"/><rect x="227.1" y="543.9" width="2.8" height="3.5"/><rect x="207.8" y="526.1" width="2.8" height="3.3"/><rect x="132.9" y="545.9" width="2.4" height="3.1"/><rect x="137.3" y="547.5" width="2.3" height="2.0"/><rect x="125.4" y="517.4" width="2.6" height="2.3"/><rect x="226.8" y="540.2" width="3.2" height="3.1"/><rect x="176.6" y="542.9" width="2.1" height="3.1"/><rect x="131.0" y="544.1" width="3.5" height="3.6"/><rect x="137.2" y="522.6" width="3.6" height="3.7"/><rect x="250.5" y="543.6" width="2.2" height="2.1"/><rect x="216.9" y="525.3" width="3.1" height="3.5"/><rect x="236.7" y="522.9" width="2.2" height="2.2"/><rect x="124.2" y="524.5" width="2.6" height="2.8"/><rect x="177.1" y="526.5" width="2.5" height="3.3"/><rect x="249.8" y="536.5" width="3.7" height="2.9"/><rect x="187.8" y="541.7" width="2.1" height="2.7"/><rect x="203.0" y="523.1" width="2.6" height="3.3"/><rect x="245.2" y="521.8" width="3.6" height="2.2"/><rect x="237.6" y="548.9" width="2.0" height="2.4"/><rect x="196.2" y="542.4" width="2.0" height="2.9"/><rect x="174.0" y="543.5" width="2.3" height="2.9"/><rect x="164.3" y="522.9" width="2.5" height="3.7"/><rect x="137.7" y="537.1" width="3.3" height="2.9"/><rect x="227.6" y="541.6" width="2.1" height="3.4"/><rect x="181.9" y="529.2" width="3.1" height="2.6"/><rect x="255.5" y="516.9" width="3.6" height="2.2"/><rect x="258.6" y="532.8" width="2.4" height="2.5"/><rect x="156.6" y="530.9" width="2.7" height="3.6"/><rect x="235.5" y="537.1" width="3.0" height="3.4"/><rect x="144.7" y="544.2" width="2.6" height="2.6"/><rect x="146.7" y="530.3" width="3.2" height="3.3"/><rect x="140.1" y="531.2" width="3.4" height="3.0"/><rect x="150.0" y="526.1" width="3.6" height="2.4"/><rect x="144.5" y="521.1" width="3.3" height="3.5"/><rect x="200.7" y="521.4" width="2.4" height="2.6"/><rect x="269.6" y="540.5" width="2.6" height="2.3"/><rect x="136.5" y="528.4" width="2.2" height="3.7"/><rect x="231.9" y="530.2" width="3.8" height="3.4"/><rect x="137.3" y="522.8" width="2.4" height="3.1"/><rect x="181.8" y="542.8" width="2.7" height="2.1"/><rect x="217.0" y="531.3" width="3.2" height="2.9"/><rect x="182.8" y="540.4" width="2.3" height="3.1"/><rect x="207.9" y="540.9" width="3.6" height="2.8"/><rect x="231.0" y="545.6" width="2.8" height="2.4"/><rect x="250.2" y="538.2" width="3.4" height="3.3"/><rect x="168.5" y="536.8" width="3.2" height="2.8"/><rect x="240.6" y="539.7" width="2.2" height="2.8"/><rect x="185.3" y="531.3" width="3.1" height="2.5"/><rect x="223.6" y="546.9" width="3.1" height="2.7"/><rect x="239.8" y="528.8" width="2.3" height="3.2"/><rect x="126.8" y="533.5" width="2.9" height="3.8"/><rect x="264.6" y="532.9" width="2.3" height="3.4"/><rect x="203.7" y="539.6" width="2.2" height="3.0"/><rect x="247.1" y="533.1" width="2.9" height="3.2"/><rect x="153.0" y="538.1" width="2.7" height="3.7"/><rect x="139.6" y="548.1" width="2.7" height="3.4"/><rect x="162.8" y="529.5" width="2.6" height="2.1"/><rect x="185.3" y="539.2" width="2.0" height="2.8"/><rect x="155.2" y="540.9" width="2.6" height="2.5"/><rect x="154.1" y="542.5" width="3.7" height="2.9"/><rect x="140.7" y="542.1" width="2.7" height="2.4"/><rect x="192.1" y="534.5" width="3.5" height="3.1"/><rect x="174.9" y="536.6" width="2.4" height="3.7"/><rect x="191.9" y="525.6" width="3.5" height="3.5"/><rect x="247.7" y="528.0" width="3.0" height="2.2"/><rect x="178.0" y="524.5" width="3.5" height="2.5"/><rect x="121.4" y="540.3" width="2.8" height="2.3"/><rect x="167.0" y="532.1" width="2.5" height="2.4"/><rect x="221.4" y="527.9" width="2.8" height="3.1"/><rect x="129.6" y="542.9" width="3.7" height="3.5"/><rect x="142.3" y="543.1" width="3.6" height="3.4"/><rect x="122.7" y="548.3" width="3.1" height="2.0"/><rect x="136.4" y="520.8" width="3.2" height="2.5"/><rect x="173.9" y="521.0" width="2.4" height="3.4"/><rect x="146.4" y="545.0" width="3.6" height="3.4"/><rect x="222.5" y="545.1" width="3.1" height="3.4"/><rect x="150.9" y="538.5" width="3.4" height="3.5"/><rect x="187.7" y="544.8" width="3.0" height="3.3"/><rect x="156.6" y="520.7" width="3.0" height="2.5"/><rect x="192.1" y="520.9" width="2.9" height="2.1"/><rect x="203.1" y="544.6" width="2.9" height="2.9"/><rect x="192.6" y="534.3" width="2.0" height="3.5"/><rect x="177.9" y="529.6" width="3.2" height="3.5"/><rect x="217.4" y="537.5" width="3.7" height="2.1"/><rect x="225.4" y="546.6" width="2.1" height="3.1"/><rect x="198.8" y="531.6" width="2.6" height="3.8"/><rect x="229.7" y="537.2" width="3.6" height="2.1"/><rect x="176.8" y="531.4" width="2.6" height="3.6"/><rect x="153.0" y="530.2" width="2.9" height="3.4"/><rect x="246.9" y="525.7" width="2.8" height="3.0"/><rect x="197.3" y="525.0" width="3.5" height="2.7"/><rect x="143" y="518" width="38" height="8" fill="url(#pb)" stroke="none"/><rect x="132" y="536" width="30" height="7" fill="url(#pb)" stroke="none"/><rect x="162" y="527" width="24" height="7" fill="url(#pb)" stroke="none"/><rect x="202" y="513" width="10" height="6" fill="url(#pb)" stroke="none"/><rect x="212" y="518" width="9" height="7" fill="url(#pb)" stroke="none"/><path d="M116 547 H135 L134 552 H114 Z M140 547 H158 L156 552 H138 Z"/><rect x="120.0" y="556.0" width="6.0" height="6.5"/><rect x="120.0" y="563.5" width="6.0" height="6.5"/><rect x="126.3" y="556.0" width="6.0" height="6.5"/><rect x="126.3" y="563.5" width="6.0" height="6.5"/><rect x="132.0" y="556.0" width="3.5" height="6.5"/><rect x="132.0" y="563.5" width="3.5" height="6.5"/><rect x="136.5" y="556.0" width="3.5" height="6.5"/><rect x="136.5" y="563.5" width="3.5" height="6.5"/><rect x="143.0" y="556.0" width="3.5" height="6.5"/><rect x="143.0" y="563.5" width="3.5" height="6.5"/><rect x="147.5" y="556.0" width="3.5" height="6.5"/><rect x="147.5" y="563.5" width="3.5" height="6.5"/><rect x="234.1" y="564.7" width="3.0" height="3.9"/><rect x="197.2" y="562.2" width="2.7" height="2.6"/><rect x="170.2" y="563.9" width="3.3" height="3.6"/><rect x="171.1" y="557.1" width="3.8" height="3.1"/><rect x="262.7" y="562.7" width="2.0" height="2.4"/><rect x="260.3" y="562.0" width="3.3" height="3.6"/><rect x="238.3" y="562.0" width="3.2" height="3.3"/><rect x="235.1" y="560.0" width="3.4" height="2.4"/><rect x="184.8" y="552.7" width="3.5" height="2.2"/><rect x="233.8" y="558.0" width="3.5" height="3.8"/><rect x="224.1" y="556.2" width="3.6" height="3.6"/><rect x="199.2" y="559.4" width="2.6" height="2.8"/><rect x="171.7" y="561.2" width="3.3" height="3.9"/><rect x="251.0" y="562.2" width="2.1" height="2.2"/><rect x="167.5" y="558.6" width="3.8" height="2.9"/><rect x="267.8" y="559.7" width="3.2" height="3.9"/><rect x="233.1" y="555.8" width="2.8" height="2.2"/><rect x="166.5" y="564.3" width="2.3" height="2.0"/><rect x="175.2" y="566.0" width="2.2" height="3.9"/><rect x="241.3" y="556.4" width="2.3" height="2.0"/><rect x="171.2" y="565.6" width="3.5" height="2.4"/><rect x="241.6" y="553.4" width="3.4" height="3.7"/><rect x="213.8" y="567.5" width="3.3" height="3.4"/><rect x="240.9" y="552.2" width="2.5" height="3.9"/><rect x="251.8" y="553.3" width="2.0" height="3.3"/><rect x="183.3" y="566.2" width="2.6" height="3.5"/><rect x="204.2" y="562.3" width="3.0" height="2.1"/><rect x="181.1" y="565.3" width="2.9" height="3.4"/><rect x="231.7" y="559.0" width="2.7" height="3.3"/><rect x="264.5" y="564.9" width="2.8" height="3.6"/><rect x="172.3" y="569.0" width="3.1" height="2.6"/><rect x="200.4" y="561.9" width="3.4" height="3.7"/><rect x="227.9" y="557.0" width="4.0" height="3.7"/><rect x="205.2" y="563.1" width="2.9" height="3.8"/><rect x="249.8" y="556.6" width="3.2" height="3.8"/><rect x="210.4" y="562.3" width="2.0" height="2.5"/><rect x="170.4" y="565.5" width="3.6" height="3.8"/><rect x="225.1" y="556.5" width="3.6" height="3.7"/><rect x="236.7" y="567.0" width="3.7" height="3.6"/><rect x="223.8" y="566.2" width="2.7" height="2.2"/><rect x="263.5" y="555.9" width="2.4" height="3.5"/><rect x="214.3" y="555.4" width="3.2" height="3.4"/><rect x="248.7" y="559.6" width="2.5" height="3.5"/><rect x="246.9" y="555.8" width="2.2" height="3.6"/><rect x="257.9" y="560.5" width="3.2" height="3.8"/><rect x="185.7" y="555.2" width="3.0" height="3.2"/><rect x="204.0" y="561.4" width="2.4" height="3.4"/><rect x="181.5" y="552.8" width="2.8" height="3.0"/><rect x="176.9" y="562.9" width="4.0" height="2.7"/><rect x="227.8" y="558.1" width="3.6" height="2.3"/><rect x="169.5" y="569.8" width="3.0" height="2.0"/><rect x="224.6" y="556.5" width="3.7" height="3.0"/><rect x="263.9" y="565.2" width="3.6" height="2.9"/><rect x="192.3" y="552.6" width="3.6" height="3.9"/><rect x="174.8" y="552.9" width="2.4" height="2.4"/><rect x="213.6" y="567.4" width="3.1" height="3.7"/><rect x="227.7" y="559.1" width="3.8" height="2.1"/><rect x="192.9" y="561.1" width="2.2" height="3.9"/><rect x="235.5" y="558.3" width="3.3" height="3.9"/><rect x="266.5" y="569.5" width="2.9" height="2.3"/><rect x="192.8" y="558.3" width="2.4" height="2.1"/><rect x="252.4" y="552.8" width="3.8" height="3.8"/><rect x="232.9" y="568.3" width="3.6" height="3.4"/><rect x="245.2" y="568.6" width="2.1" height="2.3"/><rect x="227.3" y="565.2" width="3.4" height="2.6"/><rect x="192.9" y="554.2" width="2.2" height="2.6"/><rect x="190.8" y="554.5" width="3.0" height="2.3"/><rect x="240.3" y="555.5" width="3.4" height="2.0"/><rect x="189.1" y="567.1" width="2.1" height="3.9"/><rect x="180.4" y="559.3" width="3.7" height="3.8"/><path d="M195 557.5 H203 M216 560.5 H228" stroke-width="1.300"/><path d="M195 560 H203 M216 563 H228" stroke-width="1.300"/><path d="M195 562.5 H203 M216 565.5 H228" stroke-width="1.300"/><path d="M195 565 H203 M216 568 H228" stroke-width="1.300"/><path d="M195 567.5 H203 M216 570.5 H228" stroke-width="1.300"/><rect x="163.0" y="574.4" width="23.0" height="6.3" rx="1.6"/><rect x="189.0" y="574.4" width="25.0" height="6.3" rx="1.6"/><rect x="217.0" y="574.4" width="25.0" height="6.3" rx="1.6"/><rect x="245.0" y="574.4" width="25.0" height="6.3" rx="1.6"/><rect x="159.5" y="553.0" width="2.6" height="21.0" rx="1.2"/><rect x="271.0" y="556.0" width="2.6" height="17.0" rx="1.2"/><rect x="107.0" y="605.0" width="6.0" height="4.0"/><rect x="107.0" y="609.7" width="6.0" height="4.0"/><rect x="113.6" y="605.0" width="6.0" height="4.0"/><rect x="113.6" y="609.7" width="6.0" height="4.0"/><rect x="125.3" y="618.0" width="4.0" height="6.5"/><rect x="125.3" y="625.3" width="4.0" height="6.5"/><rect x="129.8" y="618.0" width="4.0" height="6.5"/><rect x="129.8" y="625.3" width="4.0" height="6.5"/><rect x="161.5" y="601.0" width="20.0" height="5.6" rx="1"/><rect x="185.0" y="601.0" width="20.0" height="5.6" rx="1"/><rect x="208.5" y="601.0" width="20.0" height="5.6" rx="1"/><rect x="232.0" y="601.0" width="20.0" height="5.6" rx="1"/><rect x="256.0" y="601.0" width="20.0" height="5.6" rx="1"/><rect x="140.0" y="603.0" width="19.0" height="2.6" rx="1.2"/><rect x="164.0" y="645.0" width="22.0" height="4.4" rx="1"/><rect x="190.0" y="645.0" width="23.0" height="4.4" rx="1"/><rect x="216.0" y="645.0" width="23.0" height="4.4" rx="1"/><rect x="242.0" y="645.0" width="24.0" height="4.4" rx="1"/><rect x="269.0" y="645.0" width="21.0" height="4.4" rx="1"/><rect x="140.0" y="646.5" width="20.0" height="2.2" rx="1"/><rect x="138.0" y="607.0" width="1.8" height="18.0" rx="0.9"/><rect x="138.0" y="628.0" width="1.8" height="16.0" rx="0.9"/><rect x="142.0" y="609.0" width="7.5" height="7.0"/><rect x="142.0" y="622.5" width="7.5" height="6.5"/><path d="M144.500 616 v-2.500 h2.500 v2.500 M144.500 622.500 v2 h2.500 v-2"/><rect x="194.8" y="627.8" width="2.2" height="4.0"/><rect x="193.2" y="623.9" width="3.0" height="2.7"/><rect x="163.0" y="610.8" width="3.4" height="2.3"/><rect x="159.2" y="635.8" width="3.6" height="3.2"/><rect x="159.8" y="617.4" width="2.6" height="2.9"/><rect x="160.2" y="624.4" width="3.8" height="2.7"/><rect x="157.7" y="638.4" width="2.7" height="4.0"/><rect x="186.0" y="615.3" width="2.1" height="4.0"/><rect x="164.9" y="615.3" width="3.1" height="2.6"/><rect x="202.1" y="636.6" width="2.8" height="4.2"/><rect x="197.5" y="610.8" width="2.2" height="2.6"/><rect x="200.3" y="609.5" width="3.6" height="2.6"/><rect x="158.9" y="609.1" width="3.8" height="2.7"/><rect x="161.1" y="622.4" width="3.8" height="3.2"/><rect x="180.0" y="613.4" width="4.0" height="2.5"/><rect x="188.0" y="615.0" width="2.4" height="3.7"/><rect x="182.9" y="624.8" width="2.2" height="2.2"/><rect x="182.9" y="631.3" width="2.6" height="2.5"/><rect x="162.0" y="611.0" width="3.8" height="3.3"/><rect x="187.6" y="610.7" width="3.6" height="2.9"/><rect x="193.4" y="636.0" width="3.8" height="2.7"/><rect x="197.4" y="624.2" width="3.1" height="2.0"/><rect x="161.1" y="635.1" width="3.9" height="2.6"/><rect x="170.6" y="627.8" width="2.8" height="2.4"/><rect x="174.7" y="624.9" width="2.0" height="3.1"/><rect x="193.4" y="635.3" width="2.3" height="3.6"/><rect x="171.2" y="631.9" width="2.7" height="3.6"/><rect x="200.5" y="623.9" width="2.1" height="3.9"/><rect x="178.8" y="609.6" width="3.1" height="3.2"/><rect x="160.9" y="612.2" width="4.1" height="2.5"/><rect x="153.5" y="611.9" width="2.6" height="3.8"/><rect x="152.9" y="627.9" width="3.5" height="2.4"/><rect x="186.9" y="612.2" width="3.3" height="3.2"/><rect x="154.2" y="612.7" width="3.9" height="3.6"/><rect x="166.0" y="612.8" width="3.1" height="3.1"/><rect x="181.7" y="636.3" width="2.9" height="2.3"/><rect x="189.8" y="614.1" width="2.3" height="3.3"/><rect x="171.1" y="621.6" width="3.8" height="4.1"/><rect x="171.4" y="638.0" width="3.8" height="3.2"/><rect x="163.8" y="619.5" width="3.7" height="2.7"/><rect x="192.3" y="636.2" width="3.0" height="4.2"/><rect x="154.6" y="624.6" width="3.8" height="3.9"/><rect x="164.2" y="621.6" width="4.1" height="4.1"/><rect x="178.3" y="611.2" width="3.4" height="2.8"/><rect x="153.0" y="613.3" width="3.0" height="3.1"/><rect x="197.8" y="628.2" width="4.1" height="3.7"/><rect x="205.5" y="621.0" width="5.0" height="15.5"/><rect x="216.0" y="621.0" width="5.0" height="15.5"/><rect x="196.0" y="621.0" width="5.5" height="6.5"/><rect x="191.5" y="613.0" width="5.0" height="5.5"/><rect x="198.5" y="613.0" width="5.0" height="5.5"/><rect x="230.0" y="609.0" width="2.2" height="5.0"/><rect x="232.8" y="609.0" width="2.2" height="5.0"/><rect x="235.6" y="609.0" width="2.2" height="5.0"/><rect x="238.4" y="609.0" width="2.2" height="5.0"/><rect x="241.2" y="609.0" width="2.2" height="5.0"/><rect x="244.0" y="609.0" width="2.2" height="5.0"/><rect x="230.0" y="637.0" width="2.2" height="5.0"/><rect x="232.8" y="637.0" width="2.2" height="5.0"/><rect x="235.6" y="637.0" width="2.2" height="5.0"/><rect x="238.4" y="637.0" width="2.2" height="5.0"/><rect x="241.2" y="637.0" width="2.2" height="5.0"/><rect x="244.0" y="637.0" width="2.2" height="5.0"/><rect x="231.5" y="617.0" width="5.0" height="6.0"/><rect x="231.5" y="627.5" width="5.0" height="6.0"/><rect x="240.5" y="617.0" width="5.0" height="6.0"/><rect x="240.5" y="627.5" width="5.0" height="6.0"/><rect x="270.2" y="608.1" width="3.8" height="3.9"/><rect x="265.0" y="616.1" width="3.4" height="2.6"/><rect x="263.7" y="615.0" width="3.2" height="4.0"/><rect x="272.5" y="616.5" width="3.1" height="3.0"/><rect x="250.3" y="626.4" width="2.7" height="3.4"/><rect x="254.0" y="622.3" width="4.1" height="3.1"/><rect x="250.3" y="611.4" width="3.2" height="2.3"/><rect x="254.9" y="615.1" width="2.6" height="2.9"/><rect x="270.4" y="627.0" width="2.2" height="3.2"/><rect x="252.4" y="630.1" width="3.3" height="3.4"/><rect x="263.5" y="622.4" width="3.0" height="3.2"/><rect x="253.1" y="624.2" width="2.7" height="2.5"/><rect x="247.3" y="618.5" width="2.8" height="3.3"/><rect x="261.5" y="623.4" width="3.9" height="2.5"/><rect x="255.1" y="631.6" width="2.6" height="4.2"/><rect x="271.1" y="621.9" width="2.3" height="2.1"/><rect x="259.3" y="631.4" width="2.1" height="2.9"/><rect x="273.6" y="631.7" width="2.2" height="2.5"/><rect x="256.7" y="629.5" width="2.3" height="2.7"/><rect x="268.9" y="623.6" width="3.4" height="3.9"/><rect x="267.0" y="622.4" width="3.6" height="3.6"/><rect x="271.0" y="611.1" width="3.7" height="3.6"/><rect x="267.0" y="626.9" width="3.9" height="2.0"/><rect x="262.4" y="620.3" width="3.1" height="4.1"/><rect x="263.0" y="619.2" width="3.7" height="3.9"/><rect x="266.5" y="616.7" width="3.0" height="3.0"/><rect x="257.4" y="617.6" width="2.9" height="3.2"/><rect x="260.1" y="621.3" width="3.7" height="3.9"/><rect x="251.0" y="626.2" width="2.4" height="2.7"/><rect x="271.6" y="617.9" width="3.3" height="2.2"/><rect x="272.1" y="613.6" width="3.9" height="3.8"/><rect x="247.3" y="608.5" width="2.9" height="4.0"/><rect x="271.6" y="632.5" width="3.2" height="3.1"/><rect x="260.9" y="623.5" width="3.2" height="4.2"/><rect x="256.5" y="626.7" width="3.5" height="2.9"/><rect x="265.4" y="623.8" width="2.8" height="4.1"/><rect x="258.1" y="625.6" width="2.2" height="2.8"/><rect x="272.8" y="622.6" width="3.3" height="3.9"/><rect x="273.9" y="618.2" width="3.0" height="3.4"/><rect x="251.6" y="617.2" width="3.2" height="3.8"/><rect x="223.0" y="614.0" width="4.5" height="2.2"/><rect x="223.0" y="618.0" width="4.5" height="2.2"/><rect x="223.0" y="622.0" width="4.5" height="2.2"/><rect x="223.0" y="626.0" width="4.5" height="2.2"/><rect x="223.0" y="630.0" width="4.5" height="2.2"/><rect x="223.0" y="634.0" width="4.5" height="2.2"/><rect x="129.2" y="655.0" width="19.7" height="8.5"/><rect x="203.4" y="655.0" width="20.5" height="8.5"/><rect x="263.6" y="655.0" width="20.0" height="8.5"/><rect x="96.2" y="665.6" width="7.4" height="10.2"/><rect x="106.0" y="665.6" width="7.0" height="10.2"/><rect x="96.2" y="775.5" width="7.4" height="8.1"/><rect x="106.0" y="775.5" width="7.0" height="8.1"/><rect x="128.0" y="776.0" width="15.7" height="7.6"/><rect x="195.6" y="775.5" width="20.4" height="8.1"/><rect x="253.0" y="776.0" width="13.0" height="7.6"/><rect x="112.2" y="697.0" width="4.3" height="15.0"/><rect x="118.8" y="697.0" width="4.0" height="15.0"/><rect x="112.2" y="720.0" width="4.3" height="15.4"/><rect x="118.8" y="720.0" width="4.0" height="15.4"/><rect x="112.2" y="744.0" width="4.3" height="15.7"/><rect x="118.8" y="744.0" width="4.0" height="15.7"/><rect x="125.3" y="688.0" width="4.7" height="6.0"/><rect x="125.3" y="697.0" width="4.7" height="4.3"/><rect x="125.3" y="704.5" width="4.7" height="4.3"/><rect x="125.3" y="722.0" width="4.7" height="4.3"/><rect x="125.3" y="730.5" width="4.7" height="4.3"/><rect x="125.3" y="738.0" width="4.7" height="4.3"/><rect x="125.3" y="746.0" width="4.7" height="4.3"/><rect x="125.3" y="755.0" width="4.7" height="4.3"/><rect x="168.4" y="689.0" width="6.4" height="3.6"/><rect x="168.4" y="697.5" width="6.4" height="3.6"/><rect x="168.4" y="705.0" width="6.4" height="3.6"/><rect x="168.4" y="740.0" width="6.4" height="5.0"/><rect x="168.4" y="747.5" width="6.4" height="3.6"/><rect x="168.4" y="755.5" width="6.4" height="3.6"/><rect x="172.0" y="713.5" width="4.5" height="5.5"/><rect x="172.0" y="730.0" width="4.5" height="6.0"/><rect x="187.4" y="702.0" width="6.2" height="6.6"/><rect x="204.0" y="702.0" width="6.2" height="6.6"/><rect x="220.0" y="702.0" width="6.2" height="6.6"/><rect x="187.4" y="738.2" width="6.2" height="6.6"/><rect x="204.0" y="738.2" width="6.2" height="6.6"/><rect x="220.0" y="738.2" width="6.2" height="6.6"/><rect x="185.5" y="715.7" width="4.0" height="7.0"/><rect x="193.5" y="715.7" width="4.0" height="7.0"/><rect x="200.5" y="715.7" width="4.0" height="7.0"/><rect x="210.7" y="715.7" width="4.0" height="7.0"/><rect x="217.5" y="715.7" width="4.0" height="7.0"/><rect x="224.0" y="715.7" width="4.0" height="7.0"/><rect x="185.5" y="723.9" width="4.0" height="7.0"/><rect x="193.5" y="723.9" width="4.0" height="7.0"/><rect x="200.5" y="723.9" width="4.0" height="7.0"/><rect x="210.7" y="723.9" width="4.0" height="7.0"/><rect x="217.5" y="723.9" width="4.0" height="7.0"/><rect x="224.0" y="723.9" width="4.0" height="7.0"/><rect x="246.2" y="699.0" width="5.8" height="6.6"/><rect x="262.0" y="699.0" width="5.8" height="6.6"/><rect x="246.2" y="735.4" width="5.8" height="6.6"/><rect x="262.0" y="735.4" width="5.8" height="6.6"/><rect x="244.5" y="713.5" width="3.5" height="6.0"/><rect x="251.0" y="713.5" width="3.5" height="6.0"/><rect x="257.5" y="713.5" width="3.5" height="6.0"/><rect x="270.0" y="713.5" width="3.5" height="6.0"/><rect x="276.0" y="713.5" width="3.5" height="6.0"/><rect x="244.5" y="722.0" width="3.5" height="6.0"/><rect x="251.0" y="722.0" width="3.5" height="6.0"/><rect x="257.5" y="722.0" width="3.5" height="6.0"/><rect x="270.0" y="722.0" width="3.5" height="6.0"/><rect x="276.0" y="722.0" width="3.5" height="6.0"/><rect x="204.2" y="804.0" width="21.7" height="4.0" rx="0.8"/><rect x="204.2" y="829.0" width="21.7" height="3.8" rx="0.8"/><rect x="213.3" y="811.5" width="3.8" height="3.5"/><rect x="219.1" y="823.6" width="3.6" height="3.2"/><rect x="206.9" y="814.1" width="3.6" height="2.8"/><rect x="207.6" y="812.6" width="2.9" height="2.9"/><rect x="210.7" y="823.8" width="3.1" height="3.1"/><rect x="211.8" y="821.8" width="3.1" height="2.1"/><rect x="204.1" y="814.2" width="2.6" height="3.2"/><rect x="216.3" y="812.7" width="3.5" height="3.1"/><rect x="209.1" y="819.1" width="2.9" height="3.0"/><rect x="214.9" y="815.4" width="3.0" height="3.8"/><rect x="219.0" y="811.6" width="2.2" height="2.3"/><rect x="214.4" y="822.1" width="2.2" height="2.3"/><rect x="205.2" y="810.2" width="3.1" height="3.5"/><rect x="217.3" y="815.1" width="3.4" height="2.6"/><rect x="206.0" y="823.1" width="2.3" height="2.5"/><rect x="212.5" y="815.5" width="3.0" height="2.6"/><rect x="253.0" y="792.0" width="17.0" height="2.4" rx="1"/><rect x="253.0" y="831.0" width="23.0" height="2.4" rx="1"/><rect x="251.4" y="796.0" width="1.6" height="15.0" rx="0.8"/><rect x="251.4" y="815.0" width="1.6" height="14.0" rx="0.8"/><rect x="266.6" y="824.0" width="2.1" height="3.8"/><rect x="259.8" y="797.3" width="2.9" height="3.2"/><rect x="260.7" y="822.3" width="3.9" height="3.7"/><rect x="266.1" y="825.2" width="3.6" height="2.6"/><rect x="259.6" y="807.3" width="3.0" height="3.9"/><rect x="260.7" y="822.7" width="3.4" height="2.4"/><rect x="259.6" y="801.1" width="3.0" height="3.6"/><rect x="273.7" y="804.9" width="2.7" height="2.4"/><rect x="265.1" y="807.9" width="3.1" height="2.2"/><rect x="257.4" y="821.5" width="2.8" height="2.1"/><rect x="258.7" y="804.7" width="2.7" height="2.5"/><rect x="268.0" y="806.6" width="2.5" height="2.1"/><rect x="256.8" y="804.0" width="2.3" height="3.4"/><rect x="263.1" y="821.7" width="3.7" height="2.3"/><rect x="261.5" y="818.2" width="3.6" height="2.3"/><rect x="259.0" y="823.7" width="2.8" height="3.9"/><rect x="263.6" y="800.0" width="3.0" height="2.5"/><rect x="271.7" y="813.9" width="3.4" height="2.5"/><rect x="266.7" y="802.5" width="2.7" height="2.5"/><rect x="264.4" y="812.7" width="3.7" height="2.2"/><rect x="262.5" y="815.4" width="2.5" height="3.5"/><rect x="262.4" y="798.6" width="3.1" height="2.6"/><rect x="261.3" y="815.4" width="2.4" height="3.7"/><rect x="262.2" y="810.9" width="2.2" height="3.1"/><rect x="261.0" y="803.0" width="2.6" height="2.1"/><rect x="260.6" y="807.9" width="2.3" height="3.4"/><rect x="206.3" y="848.0" width="7.4" height="15.6"/><rect x="206.3" y="866.4" width="7.4" height="14.6"/><rect x="215.3" y="848.0" width="7.4" height="15.6"/><rect x="215.3" y="866.4" width="7.4" height="14.6"/><rect x="224.3" y="848.0" width="7.4" height="15.6"/><rect x="224.3" y="866.4" width="7.4" height="14.6"/></g><path d="M208 861 l2 -3 l1 3 l2 -3 M217 861 l3 -3 l1 3 M226 861 l2 -3 l2 3" fill="none" stroke="#e64cf4" stroke-width=".9"/></svg>
<div style="left:1020px;top:208px;width:421px;height:760px;background:#dedede"></div>
<div style="left:1020px;top:207px;width:421px;height:1px;background:#a2a2a2"></div>
<div style="left:1020px;top:208px;width:421px;height:31px;background:#efefef"></div>
<div style="left:1100px;top:214px;width:93px;height:26px;border:1px solid #8a8e98;border-bottom:0;border-radius:6px 6px 0 0;background:linear-gradient(#f6f7fa,#e6e8ee 60%,#dcdfe8)"></div>
<span class="t" style="left:1147.5px;top:218.30px;font-size:12.5px;line-height:12.5px;transform:scale(1,1.2);color:#1a1a2a;">Option</span>
<div style="left:1020px;top:239px;width:421px;height:2px;background:#1c2438"></div>
<div style="left:1020px;top:241px;width:421px;height:2px;background:#b7cde6"></div>
<div style="left:1020px;top:243px;width:421px;height:2px;background:#0a0a0a"></div>
<div style="left:1020px;top:245px;width:421px;height:1px;background:#f4f4f4"></div>
<div style="left:1020px;top:246px;width:415px;height:509px;background:#dcdcdc;border-right:1px solid #a8a8a8"></div>
<div style="left:1435px;top:246px;width:6px;height:509px;background:#e9e9e9"></div>
<div class="fld" style="left:1100px;top:253px;width:274px;height:24px;"></div>
<div class="cbb" style="left:1373px;top:252px;width:15px;height:26px;"></div>
<div class="arr" style="left:1377px;top:262px"></div>
<div class="btn" style="left:1392px;top:252px;width:43px;height:26px;"></div>
<span class="t" style="left:1392px;top:258.32px;font-size:11.5px;line-height:11.5px;transform:scale(1,1.2);color:#000;width:43px;text-align:center;">Find</span>
<div style="left:1100px;top:283px;width:335px;height:24px;background:#4590da"></div>
<span class="t" style="left:1157px;top:288.32px;font-size:11.5px;line-height:11.5px;transform:scale(0.94,1.2);color:#fff;font-weight:bold;">Film Name</span>
<span class="t" style="left:1316.5px;top:288.32px;font-size:11.5px;line-height:11.5px;transform:scale(0.94,1.2);color:#fff;font-weight:bold;">Type</span>
<span class="t" style="left:1400px;top:288.32px;font-size:11.5px;line-height:11.5px;transform:scale(0.94,1.2);color:#fff;font-weight:bold;">F</span>
<span class="t" style="left:1419.5px;top:288.32px;font-size:11.5px;line-height:11.5px;transform:scale(0.94,1.2);color:#fff;font-weight:bold;">L</span>
<div style="left:1100px;top:307px;width:335px;height:21px;background:#dedede"></div>
<span class="t" style="left:1163.7px;top:310.83px;font-size:11px;line-height:11px;transform:scale(1,1.2);color:#f01010;">11-0___TOPA8109...</span>
<span class="t" style="left:1280px;top:310.83px;font-size:11px;line-height:11px;transform:scale(1,1.2);color:#111;">Solder.</span>
<div style="left:1394px;top:307px;width:20px;height:21px;background:#27b300"></div>
<div style="left:1414px;top:307px;width:21px;height:21px;background:#e040fb"></div>
<div style="left:1100px;top:328px;width:335px;height:348px;background:linear-gradient(#d6d9e0,#dadde4)"></div>
<div style="left:1100px;top:676px;width:335px;height:1px;background:#b0b0b0"></div>
<div style="left:1100px;top:681px;width:335px;height:20px;border:1px solid #8e8f93;border-radius:4px;background:linear-gradient(#fdfdfe 0%,#ececf0 45%,#dcdde2 55%,#e9eaee 100%)"></div>
<div style="left:1420px;top:681px;width:15px;height:20px;border:1px solid #6f7f97;border-radius:0 4px 4px 0;background:linear-gradient(#d9e2ee 0%,#b8c6da 50%,#a3b4cc 51%,#c3cfdf 100%)"></div>
<div class="arr" style="left:1424.5px;top:688px"></div>
<span class="t" style="left:1163px;top:683.83px;font-size:11px;line-height:11px;transform:scale(1,1.2);color:#111;">__TOPA8109AIESJ17110103</span>
<div class="btn" style="left:1027px;top:706px;width:408px;height:19px;"></div>
<span class="t" style="left:1212px;top:707.83px;font-size:11px;line-height:11px;transform:scale(1,1.2);color:#111;">Hide All</span>
<div style="left:1027px;top:730px;width:408px;height:19px;border:1px solid #c3c5cc;border-radius:4px;background:linear-gradient(#ecedf1,#dfe0e6 50%,#d8d9df 52%,#e1e2e7)"></div>
<span class="t" style="left:1215px;top:731.83px;font-size:11px;line-height:11px;transform:scale(1,1.2);color:#9b9da5;">Delete</span>
<div style="left:1020px;top:754px;width:421px;height:2px;background:#9c9c9c"></div>
<div style="left:1020px;top:756px;width:421px;height:11px;background:#f0f0f0"></div>
<div style="left:1023px;top:767px;width:418px;height:168px;background:#000"></div>
<div style="left:1346px;top:767px;width:1px;height:168px;background:#e8e8e8"></div>
<div style="left:1117px;top:767px;width:1px;height:168px;background:#e8e8e8"></div>
<div style="left:1019px;top:208px;width:4px;height:760px;background:#e4e4e4"></div>
<div style="left:1023px;top:935px;width:418px;height:33px;background:#dedede"></div>
<div class="btn" style="left:1162px;top:943px;width:17px;height:18px;"></div>
<div class="btn" style="left:1187px;top:943px;width:17px;height:18px;"></div>
<div style="left:1211px;top:943px;width:17px;height:18px;border:1px solid #c0c2c8;border-radius:3px;background:linear-gradient(#ebecf0,#dcdde3)"></div>
<div style="left:1236px;top:943px;width:17px;height:18px;border:1px solid #c0c2c8;border-radius:3px;background:linear-gradient(#ebecf0,#dcdde3)"></div>
<div style="left:1260px;top:943px;width:17px;height:18px;border:1px solid #c0c2c8;border-radius:3px;background:linear-gradient(#ebecf0,#dcdde3)"></div>
<div style="left:1284px;top:943px;width:17px;height:18px;border:1px solid #c0c2c8;border-radius:3px;background:linear-gradient(#ebecf0,#dcdde3)"></div>
<svg style="left:1162px;top:943px" width="140" height="18" viewBox="0 0 140 18"><path d="M5 8.5 H12 M8.5 5 V12" stroke="#111" stroke-width="1.4"/><path d="M30 8.5 H37" stroke="#111" stroke-width="1.4"/><path d="M60.5 5.5 V12 L55 8.7 Z" fill="#9a9ca2"/><path d="M79.5 5.5 V12 L85 8.7 Z" fill="#9a9ca2"/><path d="M103 11.5 H110 L106.5 5.5 Z" fill="#9a9ca2"/><path d="M127 6 H134 L130.5 12 Z" fill="#9a9ca2"/></svg>
<svg style="left:1023px;top:767px" width="418" height="168" viewBox="1023 767 418 168"><g fill="none" stroke="#35c80e" stroke-width="1"><path d="M1140 774.500 H1324.700 V928 H1140"/><path d="M1231 790 V925 M1233.500 790 V925" stroke-width=".9"/><path d="M1162 847.500 H1324 M1162 852 H1324" stroke-width=".8" stroke-dasharray="5 1.500"/><path d="M1170 800 V783 H1192 M1198 783 H1210 V800 H1224 V783 H1232" /><rect x="1200" y="786" width="7" height="8"/><path d="M1264 800 V783 H1286 M1292 783 H1304 V800 H1318 V783 H1326" /><rect x="1294" y="786" width="7" height="8"/><path d="M1197 924 V905 H1207 V924"/><path d="M1290 924 V905 H1300 V924"/><path d="M1238 924 V900 H1256 V924"/><rect x="1180.3" y="807.5" width="48.5" height="28.2" stroke-width=".8"/><rect x="1274.2" y="807.5" width="49" height="28.2" stroke-width=".8"/><rect x="1236.8" y="866" width="46.5" height="28.3" stroke-width=".8"/><rect x="1150" y="866" width="39" height="28.3" stroke-width=".8"/></g><g fill="#35c80e"><path d="M1174.9 823.7h1.8v2.0h-1.8zM1163.0 825.4h1.9v2.0h-1.9zM1161.5 817.4h2.1v2.3h-2.1zM1171.6 807.6h1.3v2.3h-1.3zM1170.1 829.1h2.6v2.6h-2.6zM1168.8 808.3h1.4v1.2h-1.4zM1160.5 823.8h1.5v1.5h-1.5zM1168.4 830.1h1.8v2.4h-1.8zM1167.4 816.5h1.9v2.1h-1.9zM1172.9 832.5h2.6v2.6h-2.6zM1164.7 808.7h1.6v1.5h-1.6zM1173.3 820.8h2.3v1.8h-2.3zM1160.0 813.9h2.5v2.4h-2.5zM1175.2 821.2h2.5v1.9h-2.5zM1173.0 816.2h1.3v2.1h-1.3zM1176.1 835.1h1.3v1.7h-1.3zM1161.7 808.3h1.4v1.5h-1.4zM1168.8 823.2h2.3v1.4h-2.3zM1162.2 830.3h1.5v2.2h-1.5zM1163.5 816.3h1.4v1.8h-1.4zM1164.7 839.3h2.6v2.3h-2.6zM1174.1 830.5h1.5v1.8h-1.5zM1163.6 815.7h1.3v2.6h-1.3zM1164.7 808.8h2.3v1.7h-2.3zM1164.1 828.8h1.3v2.0h-1.3zM1175.6 824.5h1.7v1.8h-1.7zM1162.9 811.8h2.0v2.4h-2.0zM1163.9 813.1h2.5v2.3h-2.5zM1163.1 841.6h2.2v2.5h-2.2zM1166.6 809.9h2.4v2.0h-2.4zM1164.0 832.4h1.3v2.5h-1.3zM1169.8 817.0h1.6v2.4h-1.6zM1161.1 814.6h1.4v2.2h-1.4zM1169.8 816.5h2.0v2.4h-2.0zM1160.3 816.4h2.5v1.5h-2.5zM1162.9 820.3h1.8v1.3h-1.8zM1165.8 840.4h2.0v1.4h-2.0zM1170.7 828.1h2.6v2.1h-2.6zM1160.3 841.3h1.4v1.2h-1.4zM1160.3 829.8h2.2v2.5h-2.2zM1165.1 843.8h1.9v2.2h-1.9zM1172.3 840.2h1.3v2.0h-1.3zM1172.5 840.6h2.2v2.2h-2.2zM1174.7 839.0h1.7v2.2h-1.7zM1174.0 827.6h1.8v2.3h-1.8zM1169.3 829.3h2.1v1.7h-2.1zM1176.6 839.3h1.3v2.1h-1.3zM1171.6 828.2h2.2v1.7h-2.2zM1161.4 834.2h1.8v2.4h-1.8zM1168.1 814.7h1.2v2.0h-1.2zM1169.7 841.1h2.2v1.9h-2.2zM1164.9 832.3h1.6v1.2h-1.6zM1175.0 831.5h1.5v1.4h-1.5zM1165.3 831.0h1.8v2.4h-1.8zM1173.3 840.9h1.5v1.8h-1.5zM1169.1 818.1h2.4v1.7h-2.4zM1173.9 838.3h1.4v1.9h-1.4zM1164.4 812.3h2.2v2.5h-2.2zM1163.5 821.9h1.8v1.6h-1.8zM1165.0 838.0h2.1v1.9h-2.1zM1161.2 807.2h2.6v1.8h-2.6zM1171.0 828.1h2.4v1.3h-2.4zM1160.3 811.1h1.6v2.3h-1.6zM1173.4 815.2h1.8v1.2h-1.8zM1170.4 823.3h1.4v1.3h-1.4zM1172.9 842.3h2.1v2.1h-2.1zM1167.5 812.9h2.2v1.5h-2.2zM1172.0 812.8h1.2v1.9h-1.2zM1171.4 825.9h1.6v1.7h-1.6zM1166.3 835.9h2.1v2.3h-2.1zM1174.5 833.9h2.5v1.3h-2.5zM1170.4 840.7h1.4v1.8h-1.4zM1174.3 836.3h1.7v2.0h-1.7zM1170.1 813.8h2.5v1.8h-2.5zM1170.1 833.0h2.2v2.3h-2.2zM1176.2 842.7h1.5v2.5h-1.5zM1165.1 840.3h2.0v2.3h-2.0zM1161.3 822.9h2.4v1.7h-2.4zM1167.8 807.1h2.0v2.3h-2.0zM1172.5 812.7h2.3v1.3h-2.3zM1162.3 811.6h1.7v2.3h-1.7zM1173.5 832.0h1.9v2.2h-1.9zM1174.7 809.3h2.5v1.9h-2.5zM1164.8 833.7h1.5v1.9h-1.5zM1173.4 827.3h2.1v1.9h-2.1zM1173.8 840.5h1.6v1.7h-1.6zM1176.0 825.7h1.5v2.4h-1.5zM1168.6 825.4h2.0v1.5h-2.0zM1175.5 826.0h2.0v1.2h-2.0zM1169.1 824.5h1.8v2.3h-1.8zM1168.5 822.0h2.2v1.3h-2.2zM1164.2 823.7h2.5v2.5h-2.5zM1173.6 840.4h1.4v1.8h-1.4zM1163.1 829.7h1.9v1.6h-1.9zM1172.1 806.9h2.5v1.4h-2.5zM1171.4 818.4h1.5v1.5h-1.5zM1161.7 833.7h1.7v2.1h-1.7zM1164.2 813.5h1.4v1.9h-1.4zM1166.0 821.8h1.9v1.8h-1.9zM1163.3 830.4h1.9v1.4h-1.9zM1173.5 829.3h2.1v1.9h-2.1zM1171.6 837.2h2.4v1.5h-2.4zM1164.9 841.4h2.5v1.6h-2.5zM1174.6 811.0h1.5v2.6h-1.5zM1164.3 809.7h1.5v2.2h-1.5zM1172.4 810.8h2.4v1.8h-2.4zM1160.3 813.6h1.8v2.2h-1.8zM1175.3 810.3h2.2v2.5h-2.2zM1168.1 831.9h1.9v2.3h-1.9zM1161.8 807.4h1.5v1.3h-1.5zM1169.1 811.6h2.0v1.9h-2.0zM1173.9 844.1h1.5v1.5h-1.5zM1161.0 842.8h2.5v1.3h-2.5zM1165.3 823.6h1.8v2.3h-1.8zM1169.7 806.5h1.9v1.8h-1.9zM1162.9 823.1h2.2v2.4h-2.2zM1163.1 812.3h2.2v1.8h-2.2zM1174.4 837.1h1.9v1.2h-1.9zM1170.0 821.2h2.2v2.4h-2.2zM1175.7 836.7h2.0v1.9h-2.0zM1172.2 835.2h1.6v2.5h-1.6zM1174.0 839.6h2.3v1.8h-2.3zM1172.1 821.3h2.2v2.3h-2.2zM1165.4 824.1h2.2v1.3h-2.2zM1170.7 829.9h1.2v1.7h-1.2zM1171.0 818.7h1.5v2.5h-1.5zM1168.5 820.8h2.1v2.0h-2.1zM1170.8 834.9h2.6v2.1h-2.6zM1169.5 834.6h2.6v1.2h-2.6zM1160.8 813.5h1.6v1.8h-1.6zM1164.1 841.0h1.7v1.3h-1.7zM1175.5 827.6h2.0v1.9h-2.0zM1172.5 808.9h2.6v2.1h-2.6zM1160.7 841.1h2.0v2.3h-2.0zM1162.8 824.9h1.4v1.9h-1.4zM1175.1 822.3h2.1v1.3h-2.1zM1165.9 816.8h1.9v2.0h-1.9zM1164.5 833.2h2.1v2.0h-2.1zM1164.0 807.7h1.6v1.2h-1.6zM1166.5 839.9h1.4v2.3h-1.4zM1175.6 842.6h2.2v1.3h-2.2zM1167.2 823.9h1.3v2.5h-1.3zM1168.1 842.0h2.6v1.5h-2.6zM1175.5 837.2h2.2v1.9h-2.2zM1170.0 823.6h2.0v1.4h-2.0zM1168.7 810.8h1.5v1.3h-1.5zM1167.4 815.9h1.8v2.1h-1.8zM1172.4 826.3h2.0v1.8h-2.0zM1171.3 814.9h2.6v2.5h-2.6zM1173.1 829.5h1.4v2.4h-1.4zM1171.2 827.7h1.7v1.6h-1.7zM1172.0 813.2h2.0v2.1h-2.0zM1175.1 838.9h1.5v2.6h-1.5zM1164.5 822.5h1.3v1.3h-1.3zM1168.6 808.8h2.1v1.3h-2.1zM1169.2 829.9h1.3v2.1h-1.3zM1163.4 819.1h1.7v1.9h-1.7zM1161.2 810.5h2.2v2.4h-2.2zM1172.0 814.1h2.3v2.1h-2.3zM1173.1 820.2h1.8v1.6h-1.8zM1165.2 826.5h2.1v2.6h-2.1zM1166.7 819.9h2.2v2.5h-2.2zM1161.3 809.1h1.3v2.4h-1.3zM1171.0 817.4h2.0v1.9h-2.0zM1163.4 831.6h2.3v1.3h-2.3zM1172.1 832.6h1.3v1.6h-1.3zM1165.9 834.0h1.6v1.4h-1.6zM1171.6 828.0h1.7v1.4h-1.7zM1174.2 822.4h2.5v2.5h-2.5zM1165.0 821.3h2.3v1.6h-2.3zM1163.8 819.6h2.5v2.5h-2.5zM1166.4 820.8h1.7v1.7h-1.7zM1173.2 826.5h1.5v2.0h-1.5zM1162.8 834.8h2.4v2.0h-2.4zM1160.3 825.8h2.4v1.6h-2.4zM1175.5 830.7h2.0v2.0h-2.0zM1168.6 836.5h2.3v1.3h-2.3zM1172.3 840.8h1.3v1.3h-1.3zM1162.4 834.3h1.3v2.1h-1.3zM1163.5 835.4h2.1v1.5h-2.1zM1166.3 818.7h1.9v2.3h-1.9zM1167.6 826.3h2.6v2.1h-2.6zM1174.4 821.5h2.2v2.2h-2.2zM1173.4 836.5h2.4v2.1h-2.4zM1175.0 830.0h2.4v2.4h-2.4zM1172.9 821.9h1.9v2.2h-1.9zM1172.0 844.2h1.8v1.4h-1.8zM1163.3 822.4h1.7v1.4h-1.7zM1161.0 817.5h1.6v2.6h-1.6zM1172.9 812.8h1.4v2.1h-1.4zM1169.8 840.7h1.3v1.8h-1.3zM1163.1 814.4h1.3v1.4h-1.3zM1169.8 814.5h1.5v2.2h-1.5zM1162.9 835.1h1.5v1.6h-1.5zM1173.4 824.2h1.6v2.0h-1.6zM1175.0 818.8h1.6v2.4h-1.6zM1167.7 814.3h2.0v2.5h-2.0zM1173.4 820.4h1.3v2.5h-1.3zM1164.4 843.7h1.9v1.9h-1.9zM1160.2 824.2h2.1v1.5h-2.1zM1171.6 828.8h1.7v2.3h-1.7zM1165.3 816.0h1.4v1.4h-1.4zM1169.9 843.8h2.4v1.9h-2.4zM1162.5 835.3h1.6v1.9h-1.6zM1174.2 837.0h1.2v2.3h-1.2zM1172.0 809.7h1.3v1.6h-1.3zM1175.4 828.4h1.9v1.9h-1.9zM1172.3 822.0h2.4v1.6h-2.4zM1172.8 814.1h2.5v1.3h-2.5zM1162.5 837.7h2.0v1.9h-2.0zM1161.2 817.7h1.6v1.6h-1.6zM1165.8 832.0h1.9v2.2h-1.9zM1167.7 843.0h1.3v1.8h-1.3zM1160.2 820.3h2.4v2.1h-2.4zM1168.9 823.6h2.2v1.5h-2.2zM1173.4 813.7h1.2v2.6h-1.2zM1166.0 826.7h2.1v1.6h-2.1zM1166.4 831.6h1.6v1.7h-1.6zM1172.0 818.7h1.6v1.5h-1.6zM1171.2 818.6h2.5v2.0h-2.5zM1162.2 809.7h2.4v1.3h-2.4zM1162.9 821.2h2.1v2.2h-2.1zM1161.4 814.6h2.4v2.0h-2.4zM1166.7 808.8h1.4v1.4h-1.4zM1167.9 830.7h2.5v1.8h-2.5zM1166.1 818.5h2.3v2.3h-2.3zM1166.5 833.1h1.8v1.2h-1.8zM1170.2 828.9h2.6v2.3h-2.6zM1165.7 830.9h1.2v1.7h-1.2zM1168.5 836.2h1.3v1.7h-1.3zM1162.5 835.1h2.4v2.1h-2.4zM1165.5 825.0h2.5v2.0h-2.5zM1176.4 825.5h1.4v2.2h-1.4zM1163.1 841.6h2.2v2.4h-2.2zM1161.3 815.4h2.1v1.5h-2.1zM1165.3 841.1h2.0v2.2h-2.0zM1162.0 843.1h1.7v1.8h-1.7zM1169.0 827.0h1.4v2.5h-1.4zM1174.6 844.1h2.0v1.6h-2.0zM1161.9 837.3h2.3v2.0h-2.3zM1163.9 827.5h1.6v2.5h-1.6zM1168.6 808.9h2.4v1.5h-2.4zM1176.5 842.2h1.2v1.5h-1.2zM1170.7 834.3h2.1v1.6h-2.1zM1173.1 806.6h1.7v2.0h-1.7zM1162.4 820.7h1.5v1.9h-1.5zM1168.3 816.2h2.0v1.4h-2.0zM1170.3 807.5h2.0v1.7h-2.0zM1175.2 829.2h2.1v1.4h-2.1zM1170.1 832.3h1.9v1.8h-1.9zM1167.6 843.5h2.3v2.3h-2.3zM1166.4 822.3h2.4v2.4h-2.4zM1168.4 825.7h2.0v2.5h-2.0zM1165.2 808.1h1.8v2.5h-1.8zM1171.6 828.4h2.2v2.5h-2.2zM1169.3 808.7h2.3v1.6h-2.3zM1168.4 821.1h1.4v1.8h-1.4zM1168.8 815.0h1.3v2.2h-1.3zM1163.9 808.6h1.6v1.8h-1.6zM1170.3 838.4h2.5v2.6h-2.5zM1163.6 834.1h1.8v2.3h-1.8zM1161.6 835.7h2.0v2.5h-2.0zM1175.8 806.0h1.4v2.0h-1.4zM1165.3 808.4h1.5v1.6h-1.5zM1166.2 819.4h2.5v2.3h-2.5zM1160.5 840.8h2.0v1.3h-2.0zM1175.3 843.2h1.6v1.9h-1.6zM1164.8 841.5h1.9v1.5h-1.9zM1173.0 819.6h2.5v1.5h-2.5zM1174.2 844.4h1.9v1.4h-1.9zM1163.2 839.4h1.5v2.1h-1.5zM1172.1 818.1h1.3v1.3h-1.3zM1171.1 811.1h2.5v2.4h-2.5zM1167.0 809.0h2.2v2.5h-2.2zM1171.7 813.5h1.5v1.6h-1.5zM1171.0 836.4h1.5v1.5h-1.5zM1174.4 828.3h1.7v2.1h-1.7zM1175.3 831.6h1.5v1.6h-1.5zM1161.5 843.3h1.6v2.1h-1.6zM1168.6 807.7h1.8v1.9h-1.8zM1164.0 836.8h2.0v1.6h-2.0zM1172.6 815.4h1.3v1.6h-1.3zM1163.1 840.1h1.6v2.0h-1.6zM1167.1 835.1h2.6v1.2h-2.6zM1168.1 812.7h1.7v2.5h-1.7zM1165.8 830.9h2.0v2.1h-2.0zM1167.9 838.2h2.3v1.9h-2.3zM1175.1 812.6h2.2v1.9h-2.2zM1169.6 815.1h2.3v1.4h-2.3zM1172.7 835.8h1.8v2.3h-1.8zM1163.6 828.1h1.5v1.9h-1.5zM1169.6 833.7h1.9v1.2h-1.9zM1162.9 811.7h2.0v2.4h-2.0zM1167.3 822.8h1.2v1.9h-1.2zM1161.2 840.2h1.6v2.3h-1.6zM1172.7 815.1h2.0v2.0h-2.0zM1160.7 818.1h1.4v1.6h-1.4zM1164.2 828.4h2.1v1.9h-2.1zM1162.9 815.6h1.3v2.3h-1.3zM1173.8 835.8h1.4v2.2h-1.4zM1166.1 814.3h1.3v1.8h-1.3zM1167.6 835.5h2.6v1.3h-2.6zM1260.5 830.8h2.6v1.4h-2.6zM1268.8 812.3h1.3v1.5h-1.3zM1260.3 810.3h1.8v1.6h-1.8zM1266.5 829.6h1.2v2.6h-1.2zM1262.6 815.4h1.5v1.6h-1.5zM1259.2 817.9h1.8v2.5h-1.8zM1253.7 820.1h2.6v2.1h-2.6zM1258.8 829.3h2.1v1.3h-2.1zM1267.7 821.9h2.4v2.0h-2.4zM1259.6 831.1h1.8v2.4h-1.8zM1256.2 824.7h1.5v1.7h-1.5zM1256.8 822.3h1.4v1.5h-1.4zM1270.3 828.5h1.6v1.8h-1.6zM1259.4 810.2h2.4v1.5h-2.4zM1257.6 808.6h2.2v1.7h-2.2zM1259.9 836.1h1.5v1.6h-1.5zM1259.1 812.7h2.2v1.6h-2.2zM1265.6 829.9h2.5v1.7h-2.5zM1258.3 819.8h2.5v1.2h-2.5zM1258.8 830.8h1.3v2.4h-1.3zM1259.7 815.3h1.9v1.3h-1.9zM1263.6 809.0h1.3v1.4h-1.3zM1262.4 812.1h1.6v1.8h-1.6zM1265.2 828.3h2.2v1.6h-2.2zM1257.9 829.7h1.4v1.5h-1.4zM1267.9 814.8h1.8v1.7h-1.8zM1256.8 809.2h1.6v1.7h-1.6zM1263.1 832.2h1.2v2.1h-1.2zM1264.0 835.9h2.6v1.6h-2.6zM1264.7 836.5h1.5v2.2h-1.5zM1263.5 810.7h2.4v1.5h-2.4zM1254.0 819.6h1.8v1.7h-1.8zM1257.9 812.8h1.7v1.9h-1.7zM1255.9 828.0h1.8v1.9h-1.8zM1259.0 821.0h1.5v1.3h-1.5zM1265.3 824.6h1.4v2.0h-1.4zM1259.6 819.2h2.2v1.2h-2.2zM1254.0 823.0h1.3v1.8h-1.3zM1258.5 815.6h2.0v1.9h-2.0zM1268.8 825.1h1.2v1.7h-1.2zM1256.2 822.0h1.6v2.1h-1.6zM1259.1 825.0h2.1v2.5h-2.1zM1263.3 826.5h2.5v2.3h-2.5zM1257.8 833.1h1.8v1.8h-1.8zM1268.1 809.2h2.4v1.7h-2.4zM1258.4 818.8h1.4v1.9h-1.4zM1256.2 815.0h2.6v1.4h-2.6zM1253.0 824.6h2.2v1.5h-2.2zM1261.5 827.8h1.8v1.5h-1.8zM1262.6 832.9h2.0v2.1h-2.0zM1258.7 834.9h2.6v1.7h-2.6zM1265.1 828.5h1.6v2.2h-1.6zM1255.6 826.4h2.5v2.4h-2.5zM1259.3 816.6h1.9v2.0h-1.9zM1257.0 815.5h2.2v1.9h-2.2zM1261.9 811.8h1.7v1.4h-1.7zM1254.8 829.6h1.3v1.3h-1.3zM1266.6 822.5h1.4v1.8h-1.4zM1268.3 809.6h1.4v2.4h-1.4zM1266.9 819.8h1.6v1.9h-1.6zM1265.0 818.0h2.2v1.6h-2.2zM1267.6 832.6h1.7v2.3h-1.7zM1265.0 826.8h2.0v1.8h-2.0zM1255.1 819.2h2.4v2.3h-2.4zM1256.1 808.4h2.1v1.5h-2.1zM1269.5 811.9h2.0v2.5h-2.0zM1263.6 820.0h2.2v1.8h-2.2zM1253.8 829.0h2.5v2.6h-2.5zM1258.0 830.5h1.4v1.3h-1.4zM1258.4 808.8h2.6v1.4h-2.6zM1259.4 817.3h2.0v1.9h-2.0zM1257.7 819.6h2.3v2.4h-2.3zM1269.6 819.6h2.1v2.3h-2.1zM1266.5 812.4h2.2v2.0h-2.2zM1269.4 815.7h1.4v1.3h-1.4zM1258.5 808.6h1.9v1.4h-1.9zM1263.6 816.4h2.0v1.4h-2.0zM1259.4 815.8h1.5v1.9h-1.5zM1268.8 817.5h1.3v1.3h-1.3zM1261.6 838.5h1.3v1.5h-1.3zM1261.5 820.3h1.5v2.4h-1.5zM1254.0 824.7h2.3v1.8h-2.3zM1257.7 836.1h2.1v2.1h-2.1zM1260.4 832.5h2.4v2.6h-2.4zM1253.4 813.2h2.2v1.4h-2.2zM1259.3 831.1h1.4v1.3h-1.4zM1253.2 814.3h1.6v1.9h-1.6zM1261.7 832.9h2.5v1.2h-2.5zM1259.7 831.9h2.3v2.2h-2.3zM1269.4 811.0h2.4v2.3h-2.4zM1264.6 815.6h2.5v1.8h-2.5zM1262.5 815.0h2.5v1.2h-2.5zM1264.3 832.6h1.7v1.7h-1.7zM1259.1 816.4h1.7v2.1h-1.7zM1254.6 818.2h2.5v1.7h-2.5zM1265.5 824.7h2.2v1.5h-2.2zM1254.8 812.4h2.2v1.4h-2.2zM1253.2 823.2h1.7v1.8h-1.7zM1262.3 836.9h1.8v1.7h-1.8zM1258.6 830.3h1.5v2.4h-1.5zM1260.6 836.3h1.4v2.6h-1.4zM1265.4 813.4h1.5v1.8h-1.5zM1269.5 817.6h1.6v2.1h-1.6zM1270.4 812.5h1.5v1.7h-1.5zM1263.9 814.4h2.1v1.7h-2.1zM1267.5 826.6h2.1v2.4h-2.1zM1255.0 833.1h1.9v2.0h-1.9zM1264.2 820.7h2.2v1.8h-2.2zM1263.4 825.5h1.7v1.5h-1.7zM1263.7 821.7h1.9v1.2h-1.9zM1268.8 812.6h2.0v2.0h-2.0zM1265.7 817.2h1.9v2.6h-1.9zM1259.7 833.5h2.2v2.6h-2.2zM1261.7 814.9h1.4v2.6h-1.4zM1268.6 832.8h2.4v2.1h-2.4zM1269.6 810.0h2.3v1.9h-2.3zM1257.2 832.1h2.4v2.2h-2.4zM1267.9 813.9h1.8v2.0h-1.8zM1254.3 824.6h1.6v2.1h-1.6zM1257.0 832.1h2.3v1.9h-2.3zM1262.1 834.9h2.4v2.3h-2.4zM1259.1 811.1h2.3v1.4h-2.3zM1268.3 833.3h1.3v1.7h-1.3zM1259.9 833.9h1.4v1.5h-1.4zM1254.2 837.2h2.1v2.5h-2.1zM1268.3 829.8h1.5v2.1h-1.5zM1260.5 808.5h1.5v2.1h-1.5zM1263.9 816.5h1.7v1.6h-1.7zM1256.1 811.8h2.0v2.2h-2.0zM1255.2 811.5h2.2v1.9h-2.2zM1258.9 813.9h2.5v2.1h-2.5zM1265.1 818.7h2.6v2.2h-2.6zM1255.5 827.1h1.6v1.8h-1.6zM1260.0 821.5h1.8v2.3h-1.8zM1258.9 828.7h1.9v2.5h-1.9zM1258.0 834.2h1.5v2.0h-1.5zM1264.8 821.5h1.6v2.4h-1.6zM1265.3 826.2h2.5v1.7h-2.5zM1260.2 816.6h1.8v1.3h-1.8zM1258.0 828.5h1.8v2.5h-1.8zM1259.9 812.0h2.1v1.5h-2.1zM1260.0 818.4h2.5v1.6h-2.5zM1262.8 824.2h2.3v2.4h-2.3zM1254.6 818.7h1.3v2.5h-1.3zM1264.6 818.2h1.7v2.2h-1.7zM1253.4 826.7h2.5v2.5h-2.5zM1261.0 817.6h1.9v1.7h-1.9zM1269.4 837.2h2.1v2.0h-2.1zM1266.6 827.7h2.6v1.8h-2.6zM1254.1 821.6h2.2v2.6h-2.2zM1256.8 837.6h1.8v2.1h-1.8zM1255.5 820.0h1.5v1.7h-1.5zM1255.8 827.9h2.2v1.3h-2.2zM1257.3 832.1h2.1v2.2h-2.1zM1255.0 821.9h2.2v2.3h-2.2zM1269.8 834.5h1.2v2.4h-1.2zM1262.5 824.2h1.2v1.7h-1.2zM1258.3 823.1h1.4v2.3h-1.4zM1255.3 810.7h1.4v2.0h-1.4zM1266.3 815.5h1.9v1.6h-1.9zM1256.7 821.9h1.8v1.3h-1.8zM1267.5 811.1h2.0v1.8h-2.0zM1269.1 824.1h2.4v1.4h-2.4zM1267.9 836.9h1.8v2.1h-1.8zM1255.6 833.2h1.8v1.2h-1.8zM1255.6 823.8h2.2v2.2h-2.2zM1258.3 837.6h1.2v1.4h-1.2zM1253.8 820.3h2.1v2.4h-2.1zM1255.0 836.0h1.3v1.6h-1.3zM1264.3 834.7h1.7v1.9h-1.7zM1261.3 835.1h2.5v2.0h-2.5zM1265.8 815.8h1.8v1.6h-1.8zM1261.2 818.8h1.7v1.8h-1.7zM1253.9 833.2h1.8v1.8h-1.8zM1262.7 820.0h1.3v1.9h-1.3zM1259.5 817.6h1.5v1.3h-1.5zM1265.8 822.9h1.9v1.5h-1.9zM1270.2 808.2h1.2v1.8h-1.2zM1259.2 825.6h2.0v2.5h-2.0zM1263.5 825.9h1.7v1.6h-1.7zM1262.0 830.7h1.6v1.9h-1.6zM1257.5 816.3h1.3v1.3h-1.3zM1267.4 820.2h2.3v1.8h-2.3zM1254.5 837.4h1.6v2.2h-1.6zM1258.3 832.9h2.4v1.7h-2.4zM1253.9 830.8h2.3v2.1h-2.3zM1262.8 835.8h1.3v2.1h-1.3zM1268.8 831.2h2.1v1.2h-2.1zM1265.5 820.9h2.0v1.2h-2.0zM1268.4 810.2h2.2v2.6h-2.2zM1265.6 819.4h2.3v1.8h-2.3zM1255.0 817.7h1.8v1.8h-1.8zM1254.9 833.6h2.2v1.3h-2.2zM1254.9 811.6h2.1v2.0h-2.1zM1262.7 835.2h1.6v2.5h-1.6zM1262.4 833.4h1.5v1.8h-1.5zM1261.3 808.9h1.4v2.4h-1.4zM1264.6 836.1h1.8v1.7h-1.8zM1259.6 831.2h1.9v2.2h-1.9zM1255.9 825.4h1.3v2.2h-1.3zM1255.9 818.6h1.5v1.7h-1.5zM1259.6 825.3h2.0v1.9h-2.0zM1262.7 822.6h2.4v1.7h-2.4zM1264.5 815.1h2.6v1.7h-2.6zM1263.0 815.7h1.6v2.2h-1.6zM1259.7 829.2h1.3v2.4h-1.3zM1262.6 837.2h1.8v2.1h-1.8zM1261.0 815.0h2.5v1.8h-2.5zM1258.1 834.0h2.3v1.3h-2.3zM1263.1 824.4h1.2v2.2h-1.2zM1269.5 831.4h1.7v1.4h-1.7zM1266.1 814.7h2.3v1.3h-2.3zM1263.7 811.6h1.5v1.9h-1.5zM1268.0 835.7h2.3v2.0h-2.3zM1269.0 829.8h2.2v1.7h-2.2zM1265.6 815.8h1.6v2.4h-1.6zM1262.4 815.8h1.5v1.2h-1.5zM1255.3 822.8h1.6v1.6h-1.6zM1257.8 823.5h1.6v1.6h-1.6zM1267.2 834.1h2.4v1.4h-2.4zM1265.4 824.1h2.1v2.0h-2.1zM1266.1 815.7h2.1v2.5h-2.1zM1259.4 831.2h1.3v2.5h-1.3zM1259.5 830.0h1.5v1.8h-1.5zM1262.3 818.5h2.5v1.9h-2.5zM1254.9 835.7h1.5v2.5h-1.5zM1268.2 811.1h2.1v1.3h-2.1zM1269.8 817.5h2.0v1.4h-2.0zM1264.0 810.1h2.4v1.3h-2.4zM1270.5 828.6h1.2v2.0h-1.2zM1261.7 810.3h2.4v2.3h-2.4zM1262.0 818.8h1.9v1.5h-1.9zM1265.1 820.7h1.9v1.5h-1.9zM1261.3 825.1h1.9v1.3h-1.9zM1255.2 817.0h2.6v2.0h-2.6zM1269.3 837.1h1.7v2.2h-1.7zM1267.1 835.6h2.5v2.5h-2.5zM1263.5 828.7h1.2v1.9h-1.2zM1268.8 810.6h2.1v2.1h-2.1zM1253.5 811.3h1.9v2.5h-1.9zM1253.4 808.9h2.4v2.5h-2.4zM1261.6 825.3h2.4v2.2h-2.4zM1253.0 810.0h2.3v2.3h-2.3zM1266.9 820.0h2.3v2.6h-2.3zM1253.3 831.3h1.7v1.7h-1.7zM1262.2 818.1h1.6v2.0h-1.6zM1257.0 834.6h2.1v1.8h-2.1zM1257.4 822.7h1.4v1.4h-1.4zM1257.0 827.8h2.3v1.7h-2.3zM1257.4 834.4h1.6v1.9h-1.6zM1258.3 818.0h1.5v1.5h-1.5zM1266.3 824.1h2.2v2.1h-2.2zM1257.3 814.5h1.3v2.3h-1.3zM1259.4 818.5h1.8v2.6h-1.8zM1259.4 812.0h2.5v2.6h-2.5zM1197.0 886.3h2.3v2.3h-2.3zM1201.8 885.6h1.7v1.6h-1.7zM1191.3 878.8h1.9v2.3h-1.9zM1207.7 869.8h1.7v1.3h-1.7zM1208.8 889.8h1.5v2.4h-1.5zM1193.6 884.2h1.7v2.5h-1.7zM1193.4 884.0h2.5v1.5h-2.5zM1207.7 877.7h2.4v2.2h-2.4zM1196.0 891.0h1.7v1.4h-1.7zM1197.5 867.3h1.3v1.5h-1.3zM1193.3 880.0h1.6v1.5h-1.6zM1204.8 879.7h2.0v2.0h-2.0zM1194.9 868.0h2.5v1.3h-2.5zM1208.0 879.0h1.6v2.3h-1.6zM1201.6 873.8h1.4v1.7h-1.4zM1199.1 881.3h2.3v2.6h-2.3zM1194.4 890.7h2.4v1.9h-2.4zM1204.3 876.7h2.6v1.2h-2.6zM1194.2 885.6h1.3v1.4h-1.3zM1195.1 887.4h1.5v1.2h-1.5zM1199.4 870.7h1.9v2.1h-1.9zM1191.8 872.9h1.2v1.6h-1.2zM1199.5 882.4h2.1v1.7h-2.1zM1207.2 881.3h1.6v1.7h-1.6zM1199.4 874.7h1.8v2.0h-1.8zM1207.4 888.6h2.5v1.5h-2.5zM1199.9 892.2h2.4v1.4h-2.4zM1204.3 872.2h1.6v1.4h-1.6zM1208.0 873.5h2.0v1.4h-2.0zM1197.5 880.5h1.3v2.2h-1.3zM1200.3 875.7h1.9v2.5h-1.9zM1196.1 881.0h1.2v1.9h-1.2zM1192.6 879.0h2.1v1.8h-2.1zM1208.6 873.3h1.9v2.1h-1.9zM1205.5 872.3h1.8v1.3h-1.8zM1195.5 889.2h2.4v2.3h-2.4zM1201.0 890.8h1.9v1.8h-1.9zM1196.3 888.0h1.9v1.9h-1.9zM1194.6 871.7h1.9v1.7h-1.9zM1208.3 889.5h2.4v2.3h-2.4zM1203.7 886.8h2.2v2.3h-2.2zM1205.4 874.1h2.3v1.4h-2.3zM1191.4 879.1h1.5v2.5h-1.5zM1202.2 889.4h1.7v2.3h-1.7zM1192.1 883.3h2.5v2.1h-2.5zM1207.2 873.9h1.4v2.6h-1.4zM1205.1 891.4h1.5v2.2h-1.5zM1204.0 867.6h2.1v1.4h-2.1zM1204.8 888.5h2.4v2.3h-2.4zM1202.5 878.5h2.0v2.5h-2.0zM1191.4 870.2h1.7v1.7h-1.7zM1202.6 886.5h2.3v1.5h-2.3zM1196.6 873.1h2.2v1.9h-2.2zM1203.7 890.4h1.5v2.1h-1.5zM1207.7 873.4h1.7v2.5h-1.7zM1207.8 886.1h2.5v2.1h-2.5zM1200.6 878.9h1.7v1.6h-1.7zM1201.0 878.1h1.2v2.4h-1.2zM1194.5 881.4h2.2v1.5h-2.2zM1192.3 867.4h1.5v1.7h-1.5zM1208.4 882.7h1.7v1.9h-1.7zM1195.3 878.4h1.8v1.8h-1.8zM1198.6 884.3h2.5v1.4h-2.5zM1202.4 890.4h2.3v2.0h-2.3zM1200.5 892.4h2.5v1.6h-2.5zM1204.8 867.5h1.9v1.5h-1.9zM1196.1 884.7h1.4v2.0h-1.4zM1204.6 883.1h2.2v1.6h-2.2zM1198.7 868.8h2.2v1.8h-2.2zM1207.1 867.4h1.9v2.5h-1.9zM1204.0 877.6h1.3v1.6h-1.3zM1201.7 885.5h1.4v1.8h-1.4zM1203.4 881.9h1.8v2.1h-1.8zM1193.4 867.4h1.3v2.2h-1.3zM1192.3 876.5h1.9v1.2h-1.9zM1208.3 888.7h1.9v1.3h-1.9zM1196.7 891.6h1.9v2.0h-1.9zM1195.1 888.8h1.4v1.6h-1.4zM1198.2 889.3h1.9v1.8h-1.9zM1204.1 877.5h1.6v2.3h-1.6zM1199.3 874.3h1.7v1.8h-1.7zM1196.4 886.3h2.1v1.8h-2.1zM1207.0 877.9h1.8v1.9h-1.8zM1208.8 886.1h1.7v2.5h-1.7zM1204.5 873.7h1.8v2.1h-1.8zM1202.7 883.0h2.2v2.5h-2.2zM1195.1 885.9h1.8v2.1h-1.8zM1197.2 884.1h2.0v2.6h-2.0zM1205.4 872.8h1.2v1.8h-1.2zM1198.1 892.3h2.1v1.5h-2.1zM1192.1 880.9h1.5v2.5h-1.5zM1197.9 881.1h2.3v2.4h-2.3zM1204.3 880.9h2.2v2.3h-2.2zM1201.4 880.1h1.6v2.2h-1.6zM1204.6 874.6h2.6v1.4h-2.6zM1195.9 880.4h2.2v2.5h-2.2zM1194.0 882.3h1.9v1.9h-1.9zM1196.1 886.9h2.5v2.1h-2.5zM1202.0 878.2h1.8v1.4h-1.8zM1201.3 890.2h1.9v2.6h-1.9zM1192.4 873.7h1.7v2.3h-1.7zM1205.8 875.8h2.2v2.2h-2.2zM1200.9 866.6h1.6v1.7h-1.6zM1193.7 874.1h1.7v2.1h-1.7zM1195.4 870.5h2.4v2.5h-2.4zM1205.8 885.7h1.4v1.3h-1.4zM1203.8 866.7h1.6v1.9h-1.6zM1194.7 884.0h2.3v2.4h-2.3zM1206.7 871.7h2.2v1.7h-2.2zM1199.0 887.4h1.9v1.6h-1.9zM1208.8 871.8h2.0v2.1h-2.0zM1193.8 891.0h1.5v2.1h-1.5zM1198.9 887.7h1.7v1.8h-1.7zM1194.0 875.2h2.5v2.1h-2.5zM1206.7 889.1h2.2v1.5h-2.2zM1195.2 884.9h1.5v1.7h-1.5zM1192.2 887.7h1.3v2.2h-1.3zM1192.7 867.1h2.0v2.0h-2.0zM1202.0 887.9h1.7v2.6h-1.7zM1191.4 884.6h1.3v1.3h-1.3zM1203.4 884.4h1.4v1.6h-1.4zM1196.3 880.7h1.7v1.9h-1.7zM1195.6 873.7h1.7v1.7h-1.7zM1196.7 881.9h1.6v1.2h-1.6zM1206.6 878.5h1.6v1.4h-1.6zM1207.0 885.9h1.9v1.6h-1.9zM1203.4 879.0h2.1v2.1h-2.1zM1200.2 878.3h1.8v1.7h-1.8zM1205.2 889.3h1.9v1.9h-1.9zM1196.6 866.9h1.5v1.2h-1.5zM1196.0 871.0h2.3v2.1h-2.3zM1203.0 883.7h2.4v2.4h-2.4zM1198.1 880.5h2.2v1.8h-2.2zM1207.1 887.2h2.4v2.6h-2.4zM1209.2 880.4h1.3v1.5h-1.3zM1206.6 879.6h1.9v1.6h-1.9zM1208.3 866.4h2.6v1.3h-2.6zM1202.9 868.9h1.4v1.7h-1.4zM1198.8 885.4h2.0v2.5h-2.0zM1194.1 878.1h2.0v2.0h-2.0zM1194.8 877.6h2.5v2.1h-2.5zM1201.4 882.6h2.0v1.7h-2.0zM1203.3 871.7h1.2v1.5h-1.2zM1197.2 890.6h1.3v2.3h-1.3zM1202.5 873.0h2.0v1.3h-2.0zM1204.4 867.5h2.3v2.2h-2.3zM1193.6 871.2h1.2v2.3h-1.2zM1199.9 891.5h1.2v1.4h-1.2zM1206.2 870.9h1.6v1.6h-1.6zM1207.8 867.1h2.1v2.1h-2.1zM1205.8 872.6h2.0v1.7h-2.0zM1199.8 891.7h2.2v1.5h-2.2zM1207.9 883.8h1.5v1.6h-1.5zM1195.4 873.7h1.3v1.5h-1.3zM1208.3 883.3h2.4v2.2h-2.4zM1203.9 879.0h2.1v1.7h-2.1zM1198.2 879.9h1.3v1.9h-1.3zM1209.4 875.9h1.3v1.2h-1.3zM1201.9 890.3h1.7v1.4h-1.7zM1200.3 886.0h1.5v1.9h-1.5zM1194.4 885.2h2.0v1.5h-2.0zM1191.6 870.8h1.3v2.4h-1.3zM1202.2 885.1h1.9v2.4h-1.9zM1191.9 887.3h2.3v2.2h-2.3zM1191.7 866.8h1.4v1.4h-1.4zM1192.5 867.2h2.4v1.7h-2.4zM1207.1 867.0h2.4v2.0h-2.4zM1194.6 869.0h1.4v1.6h-1.4zM1194.1 870.4h1.5v2.1h-1.5zM1193.7 880.9h1.9v1.7h-1.9zM1199.6 867.0h1.9v1.7h-1.9zM1197.0 866.2h2.1v1.5h-2.1zM1197.9 880.1h2.4v2.0h-2.4zM1197.7 884.8h2.5v1.4h-2.5zM1207.6 867.1h1.7v2.2h-1.7zM1204.8 886.7h1.6v1.6h-1.6zM1194.3 876.0h2.2v2.5h-2.2zM1193.0 891.2h2.4v2.3h-2.4zM1197.4 881.5h2.2v2.4h-2.2zM1201.1 888.7h2.5v2.5h-2.5zM1202.4 890.6h2.6v2.4h-2.6zM1201.5 869.5h1.4v1.8h-1.4zM1202.1 873.5h2.3v1.3h-2.3zM1194.5 877.6h1.7v2.0h-1.7zM1195.6 875.3h2.4v2.6h-2.4zM1206.1 871.3h2.2v1.5h-2.2zM1191.0 866.0h2.0v1.7h-2.0zM1196.2 892.1h1.2v1.7h-1.2zM1203.8 872.2h2.1v1.3h-2.1zM1206.5 890.1h1.9v2.2h-1.9zM1198.2 874.2h1.8v1.6h-1.8zM1203.2 870.0h2.2v1.8h-2.2zM1194.6 881.7h2.3v2.6h-2.3zM1198.7 870.9h1.4v1.2h-1.4zM1203.0 891.2h2.2v2.0h-2.2zM1191.7 878.2h1.3v1.3h-1.3zM1200.7 888.1h2.4v2.2h-2.4zM1202.7 866.7h1.7v1.4h-1.7zM1194.0 867.7h1.5v1.2h-1.5zM1201.9 887.9h1.9v1.4h-1.9zM1203.3 885.4h1.7v1.4h-1.7zM1201.2 888.5h2.4v2.0h-2.4zM1196.1 885.7h2.1v2.6h-2.1zM1191.2 878.5h2.1v1.9h-2.1zM1200.4 879.2h1.6v2.0h-1.6zM1202.4 884.2h1.3v1.4h-1.3zM1196.1 877.7h2.6v2.3h-2.6zM1198.1 889.6h1.9v2.3h-1.9zM1199.7 875.4h1.9v1.8h-1.9zM1198.0 868.1h2.6v1.3h-2.6zM1193.7 877.3h2.1v1.4h-2.1zM1199.0 873.6h2.0v2.3h-2.0zM1194.9 866.3h1.7v2.4h-1.7zM1193.3 869.6h2.4v1.9h-2.4zM1192.1 883.4h2.4v2.2h-2.4zM1202.2 867.3h1.5v1.8h-1.5zM1193.5 886.5h2.5v1.7h-2.5zM1203.2 878.6h1.4v1.3h-1.4zM1194.6 867.2h2.5v2.3h-2.5zM1196.4 890.0h2.0v1.9h-2.0zM1192.4 889.9h1.5v2.1h-1.5zM1196.6 884.8h2.5v2.1h-2.5zM1191.7 878.9h2.5v2.3h-2.5zM1208.7 888.5h1.4v2.0h-1.4zM1196.9 870.4h1.5v2.0h-1.5zM1197.0 876.8h2.2v2.3h-2.2zM1199.3 869.0h2.2v2.2h-2.2zM1206.4 879.2h1.3v1.4h-1.3zM1197.6 870.6h2.1v1.7h-2.1zM1193.2 884.2h2.6v2.0h-2.6zM1204.8 881.8h2.0v2.1h-2.0zM1198.1 882.5h2.4v2.6h-2.4zM1197.7 883.0h1.7v1.8h-1.7zM1206.5 887.0h1.7v1.7h-1.7zM1197.9 882.5h2.1v2.4h-2.1zM1287.0 887.0h1.6v1.6h-1.6zM1292.0 869.1h2.5v1.6h-2.5zM1302.5 868.2h1.4v2.1h-1.4zM1289.4 888.6h1.6v2.3h-1.6zM1288.9 873.6h1.7v1.9h-1.7zM1299.0 866.8h1.8v1.6h-1.8zM1291.2 870.9h2.1v2.3h-2.1zM1300.6 882.1h1.4v1.3h-1.4zM1296.8 874.4h1.2v1.8h-1.2zM1292.0 891.5h1.2v1.8h-1.2zM1301.8 880.7h1.7v2.5h-1.7zM1286.8 880.3h1.4v2.3h-1.4zM1293.1 870.2h1.3v1.3h-1.3zM1301.5 890.9h2.6v2.0h-2.6zM1293.9 886.1h2.3v2.1h-2.3zM1295.0 877.0h2.1v1.4h-2.1zM1298.1 880.7h1.9v2.2h-1.9zM1286.7 869.7h2.3v2.4h-2.3zM1303.9 874.2h1.3v1.4h-1.3zM1295.8 873.3h1.8v1.9h-1.8zM1300.8 887.2h2.3v1.7h-2.3zM1286.8 889.0h1.2v2.0h-1.2zM1300.1 881.6h1.3v1.6h-1.3zM1294.8 871.3h2.1v1.8h-2.1zM1297.9 868.8h1.8v1.6h-1.8zM1295.4 881.4h1.4v1.5h-1.4zM1301.5 875.7h1.2v2.6h-1.2zM1304.1 870.6h1.4v2.4h-1.4zM1302.6 871.4h2.3v2.3h-2.3zM1289.5 889.9h1.4v1.4h-1.4zM1287.4 875.2h2.5v1.9h-2.5zM1299.0 886.1h1.5v2.1h-1.5zM1294.0 875.7h1.8v1.8h-1.8zM1298.6 874.4h1.8v2.2h-1.8zM1285.9 876.3h2.0v1.4h-2.0zM1286.5 877.4h1.7v1.2h-1.7zM1285.6 874.1h2.5v2.4h-2.5zM1287.6 881.6h1.7v1.6h-1.7zM1288.3 868.8h2.4v1.7h-2.4zM1289.6 884.6h1.2v2.3h-1.2zM1288.5 874.4h2.3v1.3h-2.3zM1290.7 877.6h2.3v2.2h-2.3zM1300.3 872.8h1.7v1.9h-1.7zM1296.2 890.5h2.3v2.5h-2.3zM1303.3 871.3h2.5v1.4h-2.5zM1290.7 877.8h2.3v1.4h-2.3zM1288.8 889.2h2.4v2.2h-2.4zM1285.9 873.5h2.4v1.9h-2.4zM1303.3 881.6h1.6v1.8h-1.6zM1289.6 885.5h2.3v1.3h-2.3zM1286.2 867.3h1.7v1.5h-1.7zM1292.7 880.7h1.8v2.0h-1.8zM1298.1 875.0h1.6v1.2h-1.6zM1290.2 867.4h1.9v1.7h-1.9zM1287.2 866.8h1.6v1.6h-1.6zM1301.8 875.6h1.9v1.2h-1.9zM1285.5 868.6h1.8v1.9h-1.8zM1294.2 874.9h2.3v2.0h-2.3zM1299.9 887.8h2.3v1.9h-2.3zM1297.5 877.9h2.5v2.2h-2.5zM1295.0 887.3h1.9v2.0h-1.9zM1299.0 882.5h2.4v1.3h-2.4zM1285.9 878.1h2.0v2.5h-2.0zM1288.2 880.3h1.7v2.5h-1.7zM1294.6 884.9h1.4v2.3h-1.4zM1285.1 871.7h1.6v2.4h-1.6zM1299.6 873.0h2.2v2.4h-2.2zM1299.4 867.6h1.3v2.2h-1.3zM1285.6 878.5h2.5v1.9h-2.5zM1302.1 890.9h1.7v1.3h-1.7zM1290.4 883.6h1.4v1.8h-1.4zM1293.1 878.4h1.4v1.7h-1.4zM1303.0 890.2h1.8v2.0h-1.8zM1289.2 872.3h2.5v2.4h-2.5zM1296.6 875.1h1.8v2.1h-1.8zM1285.4 868.4h2.6v1.6h-2.6zM1301.4 867.1h1.5v2.2h-1.5zM1300.3 889.8h1.5v1.5h-1.5zM1303.8 891.9h1.6v1.3h-1.6zM1299.0 886.1h2.2v1.9h-2.2zM1295.0 883.5h1.9v1.6h-1.9zM1287.8 891.1h1.7v2.1h-1.7zM1303.7 891.2h1.5v1.5h-1.5zM1300.7 887.0h2.5v2.4h-2.5zM1298.9 888.3h2.0v1.3h-2.0zM1286.1 885.5h2.4v1.3h-2.4zM1303.9 877.4h1.9v2.5h-1.9zM1298.1 875.5h2.1v2.1h-2.1zM1302.0 885.3h2.1v1.3h-2.1zM1288.8 877.8h2.3v1.8h-2.3zM1287.0 866.1h2.2v2.0h-2.2zM1289.4 871.9h1.8v1.5h-1.8zM1302.5 883.5h1.8v2.2h-1.8zM1297.0 884.7h1.2v2.4h-1.2zM1291.4 867.9h2.1v1.7h-2.1zM1297.9 890.3h2.1v1.3h-2.1zM1300.2 890.9h2.1v2.0h-2.1zM1293.6 866.4h2.3v2.6h-2.3zM1301.3 881.9h2.1v2.1h-2.1zM1301.0 882.7h1.7v1.2h-1.7zM1300.7 886.1h2.6v2.0h-2.6zM1301.5 876.4h2.6v1.8h-2.6zM1291.9 892.1h1.2v1.7h-1.2zM1298.3 868.6h1.8v1.6h-1.8zM1287.4 881.7h1.6v1.8h-1.6zM1291.5 891.1h1.8v2.3h-1.8zM1289.4 866.4h1.5v1.9h-1.5zM1290.6 878.5h1.6v2.5h-1.6zM1295.2 867.7h1.9v1.6h-1.9zM1300.7 886.3h1.7v1.6h-1.7zM1301.3 885.2h2.2v2.0h-2.2zM1299.8 888.4h1.3v1.4h-1.3zM1287.9 880.6h2.6v2.3h-2.6zM1287.5 891.1h2.1v2.0h-2.1zM1303.7 876.2h1.9v1.6h-1.9zM1290.1 871.6h1.3v2.1h-1.3zM1291.2 883.2h1.6v2.0h-1.6zM1301.5 889.4h2.5v2.6h-2.5zM1286.7 880.9h1.6v2.4h-1.6zM1303.7 869.4h1.3v1.3h-1.3zM1285.0 886.7h2.2v1.9h-2.2zM1301.1 878.7h1.3v2.4h-1.3zM1298.4 867.0h1.8v1.2h-1.8zM1297.9 869.0h1.9v2.5h-1.9zM1291.2 885.9h2.2v2.2h-2.2zM1295.0 873.2h2.0v1.8h-2.0zM1291.8 885.7h1.6v2.4h-1.6zM1285.0 891.6h1.7v1.5h-1.7zM1296.0 867.6h2.3v2.6h-2.3zM1297.0 882.6h1.4v1.3h-1.4zM1289.3 871.8h2.5v1.6h-2.5zM1294.7 877.2h1.4v1.2h-1.4zM1291.1 887.1h1.7v2.5h-1.7zM1285.6 882.2h1.9v1.3h-1.9zM1298.0 872.2h2.4v1.3h-2.4zM1298.7 872.3h2.2v2.4h-2.2zM1302.9 889.5h1.4v2.6h-1.4zM1292.0 890.3h2.0v1.3h-2.0zM1285.8 889.2h1.3v1.6h-1.3zM1291.9 871.4h1.7v1.3h-1.7zM1297.6 868.5h1.8v2.1h-1.8zM1293.4 887.6h1.9v1.3h-1.9zM1289.7 876.1h1.6v2.4h-1.6zM1295.4 880.4h2.3v1.2h-2.3zM1298.1 871.7h2.2v2.5h-2.2zM1290.5 880.5h1.5v1.9h-1.5zM1293.2 867.3h1.3v2.2h-1.3zM1301.7 888.5h1.4v2.5h-1.4zM1288.3 884.5h1.7v2.6h-1.7zM1285.1 869.4h2.5v1.5h-2.5zM1296.9 878.2h1.3v2.3h-1.3zM1287.7 869.5h1.4v2.1h-1.4zM1300.2 887.4h2.0v2.1h-2.0zM1287.8 879.0h1.4v1.6h-1.4zM1298.5 886.7h1.2v2.4h-1.2zM1301.0 887.2h1.9v2.5h-1.9zM1291.4 867.5h2.3v1.5h-2.3zM1303.5 873.6h2.3v1.9h-2.3zM1303.6 885.4h1.8v2.4h-1.8zM1290.0 881.7h2.4v2.5h-2.4zM1303.8 879.1h1.3v2.1h-1.3zM1286.3 878.0h1.4v2.0h-1.4zM1301.1 885.4h1.3v1.8h-1.3zM1293.2 867.4h2.4v1.8h-2.4zM1292.6 869.8h2.3v2.0h-2.3zM1287.3 868.1h1.8v1.3h-1.8zM1300.9 882.2h1.8v1.4h-1.8zM1288.0 873.2h2.4v2.0h-2.4zM1297.0 882.4h2.4v2.0h-2.4zM1293.5 888.4h1.3v1.5h-1.3zM1289.8 867.2h2.5v2.0h-2.5zM1302.7 871.4h2.0v1.8h-2.0zM1285.6 887.6h1.5v1.2h-1.5zM1285.3 881.3h2.4v1.4h-2.4zM1302.7 885.4h1.5v2.1h-1.5zM1290.6 885.7h1.6v2.0h-1.6zM1298.2 888.8h1.6v2.4h-1.6zM1296.2 872.6h1.7v2.5h-1.7zM1287.1 867.0h2.1v1.6h-2.1zM1286.9 886.6h2.1v1.5h-2.1zM1290.4 875.4h1.4v2.3h-1.4zM1300.4 891.1h2.5v2.4h-2.5zM1296.8 880.8h2.0v2.5h-2.0zM1296.0 872.5h1.7v1.7h-1.7zM1298.6 871.8h2.1v2.4h-2.1zM1293.6 888.3h1.2v1.7h-1.2zM1296.5 880.4h2.0v1.9h-2.0zM1295.4 872.1h2.1v2.0h-2.1zM1302.4 890.8h1.4v1.8h-1.4zM1295.1 877.8h1.6v2.0h-1.6zM1286.7 871.9h1.4v2.3h-1.4zM1288.8 868.1h1.6v1.5h-1.6zM1297.3 881.9h1.9v1.4h-1.9zM1296.6 873.7h2.1v1.9h-2.1zM1289.1 884.9h1.8v2.2h-1.8zM1296.7 880.0h2.0v2.6h-2.0zM1292.0 877.4h2.3v1.6h-2.3zM1288.5 890.6h2.2v2.2h-2.2zM1303.3 882.2h2.6v1.9h-2.6zM1285.3 881.8h1.7v1.3h-1.7zM1299.7 877.3h2.2v2.1h-2.2zM1296.9 880.2h2.2v2.0h-2.2zM1286.7 883.6h2.1v2.0h-2.1zM1303.2 878.6h2.2v1.8h-2.2zM1292.0 870.3h1.4v1.9h-1.4zM1298.2 870.5h2.4v1.4h-2.4zM1286.7 887.8h1.9v2.6h-1.9zM1303.0 877.4h1.2v2.6h-1.2zM1288.1 875.3h2.1v1.8h-2.1zM1287.2 879.8h1.8v2.4h-1.8zM1300.2 881.6h1.9v2.0h-1.9zM1296.6 872.9h1.7v2.5h-1.7zM1285.9 882.6h2.0v2.4h-2.0zM1288.0 872.1h1.9v1.6h-1.9zM1296.5 873.1h1.8v1.8h-1.8zM1300.1 887.0h2.1v1.9h-2.1zM1295.6 874.5h1.5v2.6h-1.5zM1293.5 883.6h1.6v2.2h-1.6zM1290.1 888.3h1.6v2.4h-1.6zM1296.1 879.7h1.8v1.8h-1.8zM1303.1 885.3h2.0v2.0h-2.0zM1285.3 867.3h1.3v2.6h-1.3zM1285.5 870.6h2.3v1.6h-2.3zM1285.4 870.2h1.9v2.4h-1.9zM1291.2 879.1h1.2v1.3h-1.2zM1300.8 881.3h2.6v2.1h-2.6zM1289.4 875.6h2.5v2.1h-2.5zM1302.7 878.9h1.9v1.4h-1.9zM1300.7 873.1h1.5v1.9h-1.5zM1289.6 871.0h2.0v1.3h-2.0zM1289.3 883.8h1.9v2.2h-1.9zM1303.9 874.6h2.0v2.3h-2.0zM1294.4 870.6h2.6v1.8h-2.6zM1287.0 866.9h1.3v2.1h-1.3zM1288.9 872.9h1.3v2.0h-1.3zM1287.8 883.8h2.3v1.8h-2.3zM1293.2 880.0h2.6v2.1h-2.6zM1299.8 872.4h2.2v2.4h-2.2zM1287.4 879.5h2.3v1.3h-2.3zM1290.5 890.5h1.5v2.0h-1.5zM1303.1 877.6h1.8v2.3h-1.8zM1292.5 869.2h2.3v1.9h-2.3zM1298.0 874.1h2.1v2.5h-2.1zM1292.5 886.3h1.9v1.7h-1.9zM1295.1 869.8h1.2v1.9h-1.2zM1292.6 872.6h2.2v1.6h-2.2zM1207.3 797.3h1.7v1.5h-1.7zM1168.9 798.1h1.9v1.7h-1.9zM1225.2 798.1h1.3v1.4h-1.3zM1203.6 793.5h1.9v1.2h-1.9zM1163.7 803.7h1.3v1.2h-1.3zM1162.8 801.2h2.2v1.4h-2.2zM1212.8 792.9h1.8v1.1h-1.8zM1213.2 794.8h1.3v1.9h-1.3zM1202.1 798.3h1.6v2.0h-1.6zM1174.5 798.8h1.2v1.1h-1.2zM1204.2 799.0h1.7v1.6h-1.7zM1217.8 798.6h1.8v1.5h-1.8zM1216.6 801.1h2.1v2.2h-2.1zM1178.4 793.3h1.8v1.7h-1.8zM1202.5 799.0h1.8v1.3h-1.8zM1177.9 795.8h1.7v1.5h-1.7zM1183.1 795.7h1.8v2.1h-1.8zM1204.0 801.4h1.5v1.5h-1.5zM1209.9 803.7h1.9v2.0h-1.9zM1205.3 795.9h1.5v1.5h-1.5zM1198.8 798.5h2.0v1.5h-2.0zM1180.5 798.2h1.4v1.0h-1.4zM1221.5 804.5h2.1v1.2h-2.1zM1163.3 803.2h1.9v1.3h-1.9zM1224.8 800.5h1.1v1.4h-1.1zM1173.8 798.1h2.0v2.0h-2.0zM1195.2 802.3h1.1v1.5h-1.1zM1171.4 795.1h1.3v1.8h-1.3zM1201.2 800.8h1.1v1.7h-1.1zM1210.0 798.7h1.5v2.1h-1.5zM1181.3 799.1h2.0v1.2h-2.0zM1207.0 792.6h1.7v2.1h-1.7zM1175.5 801.5h2.1v1.6h-2.1zM1198.5 795.1h1.8v2.0h-1.8zM1185.4 799.2h1.6v1.6h-1.6zM1169.9 792.3h1.2v1.3h-1.2zM1188.7 802.9h1.6v1.9h-1.6zM1181.0 803.0h1.7v1.8h-1.7zM1178.3 803.4h1.4v2.0h-1.4zM1210.4 794.0h1.8v1.2h-1.8zM1184.3 796.5h1.5v1.5h-1.5zM1168.2 802.0h1.2v1.5h-1.2zM1190.5 803.8h1.4v1.9h-1.4zM1217.5 803.1h2.1v1.8h-2.1zM1201.1 792.9h2.1v1.5h-2.1zM1203.4 792.1h1.4v1.4h-1.4zM1189.9 798.3h1.9v1.1h-1.9zM1171.7 800.2h2.0v1.8h-2.0zM1189.6 803.7h1.3v1.7h-1.3zM1182.6 804.1h1.5v1.3h-1.5zM1197.6 800.5h1.4v1.3h-1.4zM1183.7 801.3h2.1v1.1h-2.1zM1206.8 793.1h1.6v1.8h-1.6zM1182.3 794.3h1.1v1.2h-1.1zM1163.7 798.7h1.3v1.1h-1.3zM1168.2 801.3h1.9v1.2h-1.9zM1194.8 795.8h1.1v1.2h-1.1zM1196.6 796.6h1.9v1.6h-1.9zM1188.1 801.9h1.0v2.0h-1.0zM1198.1 793.9h1.1v1.5h-1.1zM1224.8 803.9h1.1v2.1h-1.1zM1201.9 797.8h1.7v1.9h-1.7zM1191.6 800.3h1.2v1.8h-1.2zM1169.6 801.6h1.1v1.4h-1.1zM1213.9 798.6h1.6v1.3h-1.6zM1162.1 792.8h1.3v1.5h-1.3zM1220.8 798.4h1.0v2.2h-1.0zM1206.9 793.3h2.1v1.6h-2.1zM1189.2 800.0h1.5v1.7h-1.5zM1175.9 798.0h1.4v1.8h-1.4zM1165.7 795.0h1.5v1.6h-1.5zM1193.5 804.7h1.9v1.2h-1.9zM1213.1 803.7h1.7v1.9h-1.7zM1212.2 792.3h1.5v1.5h-1.5zM1199.0 801.3h1.6v1.3h-1.6zM1207.6 793.0h2.0v1.6h-2.0zM1202.7 797.8h1.8v2.1h-1.8zM1173.9 794.5h1.6v1.5h-1.6zM1164.5 799.6h2.0v1.6h-2.0zM1173.9 803.6h2.0v1.8h-2.0zM1192.7 794.1h1.2v1.6h-1.2zM1173.2 792.5h1.3v1.2h-1.3zM1178.7 803.6h1.8v1.8h-1.8zM1223.7 800.1h1.5v1.5h-1.5zM1211.2 795.7h1.6v1.9h-1.6zM1212.1 799.3h1.1v1.9h-1.1zM1173.7 801.7h1.1v1.9h-1.1zM1167.0 796.5h1.7v1.8h-1.7zM1164.6 797.3h1.9v1.1h-1.9zM1177.2 793.0h2.0v1.8h-2.0zM1208.3 794.5h2.0v2.0h-2.0zM1173.4 796.2h1.9v1.0h-1.9zM1172.6 801.5h2.1v1.0h-2.1zM1167.0 802.8h1.9v1.3h-1.9zM1199.3 793.0h2.2v2.1h-2.2zM1307.6 801.3h1.9v1.8h-1.9zM1275.9 797.3h1.6v2.2h-1.6zM1286.7 803.3h1.8v1.9h-1.8zM1312.1 796.1h1.3v2.1h-1.3zM1289.9 803.8h1.0v1.7h-1.0zM1301.6 794.0h1.7v1.9h-1.7zM1254.6 795.4h1.8v1.5h-1.8zM1283.8 795.9h1.4v1.9h-1.4zM1301.5 802.1h1.1v1.9h-1.1zM1260.2 798.0h1.9v1.1h-1.9zM1253.7 792.2h1.4v2.0h-1.4zM1238.5 799.8h1.5v1.1h-1.5zM1242.1 798.9h1.7v1.7h-1.7zM1255.3 794.0h1.6v1.4h-1.6zM1286.6 800.5h1.6v1.4h-1.6zM1258.4 801.2h1.3v1.7h-1.3zM1299.9 801.8h1.2v1.7h-1.2zM1321.2 801.4h1.6v2.1h-1.6zM1290.2 793.6h1.4v1.3h-1.4zM1292.5 797.0h1.2v1.1h-1.2zM1281.7 796.1h2.1v2.0h-2.1zM1245.6 803.3h1.4v1.1h-1.4zM1320.9 796.9h1.4v1.0h-1.4zM1319.4 793.0h1.9v1.5h-1.9zM1238.1 803.2h1.6v1.8h-1.6zM1242.8 793.0h1.4v1.8h-1.4zM1317.9 803.0h1.1v1.9h-1.1zM1303.1 798.5h1.6v1.1h-1.6zM1284.7 794.1h1.9v1.8h-1.9zM1273.5 795.7h1.2v1.1h-1.2zM1301.2 793.6h2.1v1.1h-2.1zM1255.1 799.1h1.1v2.1h-1.1zM1266.2 793.8h1.7v1.5h-1.7zM1287.8 802.3h1.8v1.4h-1.8zM1266.7 803.6h1.1v1.5h-1.1zM1275.5 792.2h1.7v1.2h-1.7zM1247.9 798.6h1.6v1.1h-1.6zM1286.4 796.0h1.6v1.3h-1.6zM1308.5 797.8h1.8v1.1h-1.8zM1290.5 793.2h1.2v1.3h-1.2zM1271.3 792.9h2.1v1.3h-2.1zM1252.2 794.1h1.5v2.2h-1.5zM1248.3 794.7h1.7v1.8h-1.7zM1238.4 800.8h1.7v1.3h-1.7zM1309.5 794.6h2.0v2.0h-2.0zM1289.4 799.7h1.4v1.7h-1.4zM1256.6 793.1h1.7v1.3h-1.7zM1243.5 802.8h1.1v1.7h-1.1zM1318.9 800.0h2.2v1.2h-2.2zM1267.4 795.9h1.0v1.5h-1.0zM1237.5 797.7h1.1v1.3h-1.1zM1315.9 803.3h1.6v1.3h-1.6zM1266.5 801.1h1.6v2.0h-1.6zM1299.7 796.4h1.9v1.4h-1.9zM1245.9 801.0h1.2v1.5h-1.2zM1306.1 799.4h1.3v1.6h-1.3zM1295.5 801.0h2.1v1.9h-2.1zM1287.2 799.9h1.8v2.1h-1.8zM1317.3 795.7h1.7v1.6h-1.7zM1263.0 800.9h1.2v1.6h-1.2zM1254.0 800.0h1.8v1.0h-1.8zM1276.6 793.4h1.5v1.8h-1.5zM1243.9 799.3h1.8v2.2h-1.8zM1279.6 798.2h1.7v1.7h-1.7zM1273.3 801.7h2.2v2.0h-2.2zM1322.0 792.9h1.8v2.0h-1.8zM1307.0 803.8h1.3v1.3h-1.3zM1313.1 801.0h1.3v1.6h-1.3zM1315.7 793.1h1.7v2.1h-1.7zM1288.7 801.5h2.2v1.3h-2.2zM1314.5 802.0h1.4v1.4h-1.4zM1289.8 801.5h2.2v1.1h-2.2zM1260.1 793.2h2.1v1.9h-2.1zM1285.5 796.1h1.2v1.3h-1.2zM1295.5 802.5h1.2v1.1h-1.2zM1321.1 796.5h1.1v1.6h-1.1zM1238.0 802.5h1.6v2.0h-1.6zM1265.5 798.0h1.9v1.9h-1.9zM1243.1 800.3h2.1v1.1h-2.1zM1252.2 797.9h2.1v1.2h-2.1zM1292.8 792.6h1.9v1.7h-1.9zM1298.9 793.1h1.2v1.7h-1.2zM1272.0 796.2h1.1v1.4h-1.1zM1292.0 804.3h1.2v1.1h-1.2zM1246.9 799.3h1.8v2.1h-1.8zM1287.8 799.4h1.4v2.0h-1.4zM1247.8 797.2h2.1v2.1h-2.1zM1255.5 800.6h1.1v1.7h-1.1zM1312.9 793.6h1.4v1.0h-1.4zM1240.9 801.6h1.3v1.6h-1.3zM1289.5 793.7h1.9v1.1h-1.9zM1260.3 797.8h1.6v1.1h-1.6zM1316.0 796.1h1.7v1.8h-1.7zM1299.9 796.7h1.4v1.3h-1.4zM1272.5 802.7h1.3v1.2h-1.3zM1276.8 799.0h1.5v2.0h-1.5zM1298.8 793.1h1.3v1.5h-1.3zM1261.1 796.3h1.5v1.3h-1.5zM1239.5 794.9h1.2v1.7h-1.2zM1308.3 800.8h1.3v1.2h-1.3zM1252.1 796.0h2.1v1.2h-2.1zM1308.1 802.3h1.6v2.0h-1.6zM1265.3 797.6h1.0v1.0h-1.0zM1247.1 803.0h1.0v1.4h-1.0zM1251.2 802.7h1.3v1.4h-1.3zM1255.2 795.1h1.1v1.5h-1.1zM1299.2 796.3h2.2v1.9h-2.2zM1290.6 794.7h2.2v2.2h-2.2zM1278.3 802.7h1.1v1.7h-1.1zM1256.8 803.8h2.2v2.0h-2.2zM1253.9 804.4h1.7v1.0h-1.7zM1293.0 792.3h2.0v1.9h-2.0zM1302.3 798.8h2.1v1.4h-2.1zM1315.4 802.3h1.6v1.6h-1.6zM1251.2 796.2h1.5v2.0h-1.5zM1270.7 792.0h1.4v1.1h-1.4zM1277.1 792.7h2.2v2.0h-2.2zM1261.5 793.1h1.3v1.9h-1.3zM1246.9 796.6h1.5v1.7h-1.5zM1271.1 804.0h1.7v1.9h-1.7zM1242.9 803.1h1.3v1.9h-1.3zM1306.4 803.3h1.7v1.2h-1.7zM1319.3 796.2h1.2v2.1h-1.2zM1199.4 841.2h1.9v1.9h-1.9zM1214.1 845.6h1.4v2.0h-1.4zM1209.2 839.8h1.1v1.7h-1.1zM1214.3 843.7h1.0v2.1h-1.0zM1216.1 838.8h1.4v1.5h-1.4zM1192.6 845.8h1.9v1.8h-1.9zM1174.9 841.2h1.8v2.1h-1.8zM1212.3 846.3h1.4v1.6h-1.4zM1226.3 843.9h2.1v2.0h-2.1zM1188.9 842.3h1.9v1.1h-1.9zM1186.9 839.9h1.1v2.1h-1.1zM1184.5 845.9h1.1v1.6h-1.1zM1172.4 838.4h1.8v1.5h-1.8zM1194.8 842.2h1.8v1.7h-1.8zM1165.7 839.8h1.5v2.1h-1.5zM1183.9 841.7h2.0v1.4h-2.0zM1168.4 842.5h1.4v1.9h-1.4zM1210.2 841.0h1.9v1.4h-1.9zM1183.0 843.0h1.7v1.1h-1.7zM1164.5 842.6h1.7v1.6h-1.7zM1175.7 843.4h2.0v1.3h-2.0zM1167.0 843.5h1.3v1.1h-1.3zM1200.9 845.1h2.1v1.9h-2.1zM1187.1 846.5h2.0v1.3h-2.0zM1203.5 840.8h2.1v1.8h-2.1zM1177.4 843.4h1.1v1.4h-1.1zM1222.3 838.0h1.8v1.8h-1.8zM1186.7 846.1h1.2v1.1h-1.2zM1174.2 840.8h1.6v2.0h-1.6zM1210.2 843.2h2.0v1.4h-2.0zM1185.8 846.8h1.8v1.0h-1.8zM1228.5 843.1h1.5v1.3h-1.5zM1203.2 841.3h1.8v1.6h-1.8zM1177.2 844.0h1.3v1.3h-1.3zM1195.9 846.8h1.1v1.1h-1.1zM1211.0 839.7h1.9v1.8h-1.9zM1196.5 838.3h1.6v1.0h-1.6zM1185.1 842.2h1.1v1.1h-1.1zM1170.1 846.5h1.3v1.1h-1.3zM1171.0 839.6h2.2v2.1h-2.2zM1171.8 843.8h2.1v1.0h-2.1zM1217.6 840.5h2.2v2.1h-2.2zM1221.5 845.6h1.9v2.1h-1.9zM1208.4 841.4h1.9v1.9h-1.9zM1199.9 838.2h1.7v2.1h-1.7zM1209.1 841.8h1.5v2.0h-1.5zM1176.8 843.7h2.1v1.9h-2.1zM1223.8 841.9h2.0v1.0h-2.0zM1183.1 840.7h2.0v1.0h-2.0zM1215.1 843.3h1.3v1.8h-1.3zM1180.9 841.6h2.1v1.1h-2.1zM1227.4 845.1h2.0v1.9h-2.0zM1216.3 842.2h1.6v1.9h-1.6zM1217.1 839.3h1.8v2.0h-1.8zM1216.6 839.5h1.0v1.8h-1.0zM1172.8 839.3h2.0v1.9h-2.0zM1172.6 845.5h1.8v1.7h-1.8zM1225.1 839.0h1.3v2.0h-1.3zM1222.6 841.7h1.8v1.7h-1.8zM1218.3 840.8h1.5v1.3h-1.5zM1220.6 838.2h2.1v1.0h-2.1zM1183.3 842.6h1.9v2.1h-1.9zM1217.8 842.4h1.5v1.1h-1.5zM1172.8 840.1h2.0v1.0h-2.0zM1163.5 841.4h2.0v1.0h-2.0zM1219.1 839.9h1.5v2.0h-1.5zM1212.7 843.7h1.9v1.4h-1.9zM1190.3 841.9h1.1v1.6h-1.1zM1270.7 842.2h1.7v1.8h-1.7zM1252.6 839.1h2.0v1.8h-2.0zM1269.6 844.9h1.3v2.1h-1.3zM1267.7 844.1h2.2v1.8h-2.2zM1279.3 843.0h1.6v2.1h-1.6zM1251.3 842.7h1.8v1.8h-1.8zM1303.0 839.7h1.5v1.8h-1.5zM1319.2 842.3h1.4v1.3h-1.4zM1303.7 844.7h1.5v2.2h-1.5zM1268.2 838.7h1.6v1.2h-1.6zM1277.5 846.3h1.5v1.5h-1.5zM1251.4 844.0h1.6v1.2h-1.6zM1278.6 841.5h1.6v1.5h-1.6zM1240.2 842.1h1.8v1.7h-1.8zM1276.1 844.3h1.3v1.7h-1.3zM1289.0 842.1h2.2v1.9h-2.2zM1253.1 841.1h1.1v1.9h-1.1zM1310.5 842.7h1.7v1.3h-1.7zM1275.9 840.9h2.2v1.0h-2.2zM1287.0 845.7h1.7v1.8h-1.7zM1300.8 842.7h1.5v1.4h-1.5zM1255.6 838.6h1.3v2.1h-1.3zM1309.8 844.5h1.6v2.1h-1.6zM1261.1 839.4h1.7v1.6h-1.7zM1283.9 845.9h1.5v2.0h-1.5zM1286.9 841.5h2.0v1.7h-2.0zM1251.3 845.2h2.1v2.0h-2.1zM1300.2 841.6h1.8v1.4h-1.8zM1290.4 845.7h1.8v1.6h-1.8zM1269.3 844.0h2.1v1.6h-2.1zM1279.9 840.5h1.8v1.1h-1.8zM1261.7 840.2h1.8v1.2h-1.8zM1310.8 843.3h1.3v1.7h-1.3zM1269.7 841.5h1.8v1.9h-1.8zM1300.9 846.1h1.8v1.2h-1.8zM1314.7 840.0h2.1v1.1h-2.1zM1266.1 839.5h1.2v1.7h-1.2zM1282.3 842.3h1.7v1.6h-1.7zM1298.2 843.7h1.7v1.9h-1.7zM1291.0 839.0h2.0v1.6h-2.0zM1295.2 840.0h1.1v1.5h-1.1zM1278.2 842.1h2.2v1.3h-2.2zM1257.6 843.6h2.2v1.2h-2.2zM1247.4 845.9h1.4v1.4h-1.4zM1257.2 845.8h1.5v1.7h-1.5zM1241.7 842.3h1.1v1.8h-1.1zM1274.0 844.6h1.4v2.1h-1.4zM1321.8 841.2h1.0v1.3h-1.0zM1267.5 842.6h1.0v1.3h-1.0zM1277.1 842.1h1.5v1.4h-1.5zM1286.1 842.8h1.2v1.6h-1.2zM1254.3 846.0h1.9v1.5h-1.9zM1272.2 841.6h1.1v1.4h-1.1zM1262.2 842.4h1.3v2.0h-1.3zM1273.2 839.2h1.7v1.2h-1.7zM1309.8 845.6h1.7v1.9h-1.7zM1293.9 841.2h1.1v1.6h-1.1zM1310.7 838.6h2.1v1.6h-2.1zM1308.5 842.0h1.5v1.8h-1.5zM1271.5 843.7h2.0v1.9h-2.0zM1313.7 845.5h1.6v1.1h-1.6zM1302.8 838.3h2.1v1.3h-2.1zM1279.7 841.3h1.6v1.4h-1.6zM1301.5 843.6h1.7v1.5h-1.7zM1256.6 840.9h1.3v1.2h-1.3zM1302.2 846.2h1.5v1.6h-1.5zM1280.9 838.1h1.3v1.4h-1.3zM1287.2 843.3h1.8v1.0h-1.8zM1263.0 838.1h1.5v2.2h-1.5zM1300.1 844.4h1.1v1.3h-1.1zM1250.1 839.8h1.4v2.1h-1.4zM1304.2 840.6h1.7v1.6h-1.7zM1295.2 842.7h2.1v1.8h-2.1zM1317.8 838.1h1.3v1.7h-1.3zM1258.1 844.7h1.4v1.4h-1.4zM1296.7 845.8h1.8v1.2h-1.8zM1288.3 845.9h1.1v1.0h-1.1zM1271.1 842.8h1.7v1.6h-1.7zM1300.1 841.9h2.1v1.7h-2.1zM1279.7 840.4h2.1v1.9h-2.1zM1291.4 838.6h1.4v2.2h-1.4zM1287.7 840.4h1.6v1.5h-1.6zM1307.2 840.2h2.1v1.6h-2.1zM1282.9 841.6h2.1v1.7h-2.1zM1281.9 841.0h2.1v1.7h-2.1zM1274.5 840.3h1.5v1.3h-1.5zM1238.4 843.7h1.1v1.4h-1.1zM1263.5 840.1h1.1v2.1h-1.1zM1210.0 855.2h1.7v1.4h-1.7zM1165.7 861.7h2.1v1.1h-2.1zM1204.5 855.8h1.8v1.3h-1.8zM1197.8 858.9h1.6v1.3h-1.6zM1199.6 858.1h2.0v1.3h-2.0zM1219.0 861.6h2.0v1.6h-2.0zM1226.4 858.1h1.5v1.5h-1.5zM1202.1 857.2h1.6v1.9h-1.6zM1187.0 852.1h1.8v1.3h-1.8zM1210.7 861.7h1.9v2.0h-1.9zM1183.2 862.0h1.9v1.1h-1.9zM1215.3 853.5h1.1v2.1h-1.1zM1205.6 852.3h1.3v1.9h-1.3zM1219.0 857.8h1.6v1.2h-1.6zM1162.7 861.5h1.0v1.5h-1.0zM1162.2 861.5h2.1v1.9h-2.1zM1212.9 857.7h1.3v1.8h-1.3zM1210.9 853.3h1.1v1.3h-1.1zM1189.2 853.5h1.5v2.1h-1.5zM1214.3 855.9h1.8v1.4h-1.8zM1173.8 857.5h2.0v2.0h-2.0zM1222.7 855.7h1.5v1.1h-1.5zM1225.0 862.7h1.7v1.1h-1.7zM1205.9 857.1h1.8v1.2h-1.8zM1172.1 861.1h1.6v1.3h-1.6zM1211.0 856.1h1.7v1.9h-1.7zM1205.5 856.6h1.7v1.4h-1.7zM1187.2 852.9h1.9v1.4h-1.9zM1163.1 856.6h1.0v1.3h-1.0zM1164.8 861.8h1.5v2.1h-1.5zM1186.0 854.5h1.1v2.0h-1.1zM1163.1 853.4h1.7v1.4h-1.7zM1227.8 854.6h1.8v1.9h-1.8zM1196.1 854.9h1.9v1.4h-1.9zM1178.7 856.2h1.5v2.1h-1.5zM1215.6 857.6h2.1v1.5h-2.1zM1205.5 855.9h1.4v1.9h-1.4zM1217.9 859.9h2.2v1.1h-2.2zM1211.5 852.5h1.9v1.6h-1.9zM1189.0 859.4h1.8v2.0h-1.8zM1213.0 857.0h1.8v1.6h-1.8zM1212.4 853.7h1.1v1.6h-1.1zM1162.9 860.6h1.6v2.0h-1.6zM1208.5 858.1h1.4v1.4h-1.4zM1190.0 861.6h1.3v1.2h-1.3zM1207.8 859.0h2.2v1.9h-2.2zM1171.5 861.1h2.1v1.2h-2.1zM1189.0 861.5h1.0v1.6h-1.0zM1166.3 857.1h1.7v1.3h-1.7zM1200.6 852.6h1.7v1.6h-1.7zM1181.2 853.9h1.4v2.0h-1.4zM1220.1 856.0h1.2v2.1h-1.2zM1220.8 861.6h1.4v1.4h-1.4zM1206.8 853.2h2.1v2.0h-2.1zM1210.7 855.9h2.1v1.2h-2.1zM1179.1 861.1h1.0v1.8h-1.0zM1191.2 852.5h1.2v1.8h-1.2zM1213.7 860.2h1.3v1.4h-1.3zM1175.9 856.0h2.1v1.2h-2.1zM1212.1 852.1h1.4v1.2h-1.4zM1182.8 855.2h1.6v1.2h-1.6zM1210.9 856.2h1.6v2.1h-1.6zM1174.4 858.8h2.2v1.3h-2.2zM1195.5 859.3h1.9v1.9h-1.9zM1211.3 859.9h1.4v2.1h-1.4zM1193.2 861.4h1.6v2.1h-1.6zM1183.1 857.1h1.5v2.1h-1.5zM1217.9 860.8h1.7v1.7h-1.7zM1197.1 856.1h1.2v1.8h-1.2zM1228.1 859.2h1.1v2.1h-1.1zM1183.3 855.6h1.7v1.1h-1.7zM1186.5 856.4h1.1v1.5h-1.1zM1225.7 858.0h1.1v1.2h-1.1zM1186.2 857.1h1.3v1.5h-1.3zM1224.3 858.3h1.2v1.9h-1.2zM1197.4 857.2h2.2v2.0h-2.2zM1167.1 856.8h1.8v1.4h-1.8zM1164.6 860.4h2.0v1.8h-2.0zM1173.9 855.1h1.1v1.6h-1.1zM1209.4 861.1h1.3v1.7h-1.3zM1164.5 852.9h1.6v1.1h-1.6zM1261.7 853.6h1.2v1.2h-1.2zM1277.2 860.3h2.0v1.4h-2.0zM1239.6 857.0h1.2v1.6h-1.2zM1262.0 858.5h2.1v1.7h-2.1zM1291.0 859.4h1.6v1.6h-1.6zM1318.6 860.0h2.1v2.2h-2.1zM1252.7 854.0h1.8v2.0h-1.8zM1237.8 859.8h2.0v1.5h-2.0zM1316.0 854.0h1.2v1.3h-1.2zM1304.3 856.1h2.0v1.3h-2.0zM1298.0 854.1h1.7v1.8h-1.7zM1257.1 860.4h1.8v1.2h-1.8zM1245.9 858.1h1.2v1.5h-1.2zM1320.9 856.7h1.2v1.4h-1.2zM1258.7 853.2h1.6v1.0h-1.6zM1251.3 853.5h1.7v1.2h-1.7zM1261.2 855.2h1.9v1.8h-1.9zM1285.4 853.4h1.3v1.7h-1.3zM1260.3 858.8h1.2v1.8h-1.2zM1242.1 861.3h1.2v1.1h-1.2zM1266.8 858.9h1.6v1.0h-1.6zM1236.4 857.3h1.3v2.0h-1.3zM1321.2 857.9h1.7v1.2h-1.7zM1238.4 858.9h1.2v1.9h-1.2zM1238.0 852.7h2.0v1.8h-2.0zM1259.2 861.3h2.0v2.0h-2.0zM1312.1 852.1h2.0v1.1h-2.0zM1254.2 857.4h1.4v1.3h-1.4zM1254.3 858.7h1.1v2.2h-1.1zM1284.5 856.9h1.4v2.1h-1.4zM1274.8 853.8h1.9v1.7h-1.9zM1275.9 862.1h2.0v1.8h-2.0zM1250.1 855.6h1.6v1.9h-1.6zM1321.9 862.6h1.8v1.3h-1.8zM1259.4 859.8h1.8v1.9h-1.8zM1284.6 858.8h2.0v1.6h-2.0zM1251.8 857.7h1.3v1.1h-1.3zM1259.1 853.7h1.8v2.0h-1.8zM1258.4 857.3h1.5v1.2h-1.5zM1251.0 857.1h1.8v1.1h-1.8zM1293.0 858.1h1.6v1.2h-1.6zM1289.9 852.9h2.2v2.1h-2.2zM1260.1 852.8h1.6v1.3h-1.6zM1259.7 854.4h1.8v1.8h-1.8zM1295.8 854.5h2.2v1.7h-2.2zM1279.7 853.1h2.1v1.9h-2.1zM1254.2 860.6h1.5v1.0h-1.5zM1265.7 862.4h1.1v1.2h-1.1zM1282.2 852.5h1.2v1.5h-1.2zM1263.6 855.5h1.7v1.1h-1.7zM1261.7 855.4h2.2v1.5h-2.2zM1263.4 859.5h1.4v1.2h-1.4zM1239.3 860.4h1.4v1.3h-1.4zM1309.5 862.3h1.4v1.3h-1.4zM1308.2 860.3h1.7v1.1h-1.7zM1308.6 857.1h1.0v1.3h-1.0zM1254.4 853.8h1.2v2.2h-1.2zM1296.9 852.2h1.8v2.2h-1.8zM1293.8 862.3h1.0v1.3h-1.0zM1294.6 852.3h1.1v1.8h-1.1zM1268.2 860.4h2.1v1.4h-2.1zM1241.0 858.4h1.7v1.8h-1.7zM1303.2 858.5h1.2v2.0h-1.2zM1307.5 859.0h1.8v2.2h-1.8zM1322.6 852.7h1.4v1.0h-1.4zM1322.3 856.6h1.1v1.7h-1.1zM1250.0 856.0h1.3v1.0h-1.3zM1312.1 862.7h1.4v1.3h-1.4zM1295.8 853.8h2.2v1.2h-2.2zM1263.3 860.2h1.6v1.6h-1.6zM1302.4 858.3h1.3v2.0h-1.3zM1306.1 862.4h1.1v1.1h-1.1zM1301.7 860.9h1.3v1.8h-1.3zM1241.5 859.5h1.2v1.2h-1.2zM1250.3 858.5h1.4v1.8h-1.4zM1287.2 862.0h1.3v1.5h-1.3zM1240.4 853.8h1.2v1.9h-1.2zM1308.5 861.7h1.8v1.1h-1.8zM1292.3 861.9h1.3v1.8h-1.3zM1311.9 854.8h1.6v1.4h-1.6zM1271.0 860.8h2.1v1.4h-2.1zM1292.7 862.7h1.9v1.2h-1.9zM1292.8 859.4h1.5v1.7h-1.5zM1251.3 858.6h1.5v1.5h-1.5zM1239.8 859.6h1.4v1.9h-1.4zM1307.4 855.5h1.2v2.0h-1.2zM1254.0 862.5h1.1v1.3h-1.1zM1236.7 858.1h2.0v1.0h-2.0zM1308.7 860.7h1.5v1.7h-1.5zM1275.9 856.6h1.2v2.2h-1.2zM1252.2 855.0h1.2v1.3h-1.2zM1259.2 853.2h1.7v1.3h-1.7zM1274.1 856.5h1.1v2.1h-1.1zM1237.1 859.7h1.2v2.2h-1.2zM1278.3 856.9h1.1v1.3h-1.1zM1296.5 852.7h1.8v1.7h-1.8zM1277.7 856.5h1.4v1.3h-1.4zM1241.3 852.6h1.1v1.2h-1.1zM1287.2 853.9h1.8v2.2h-1.8zM1260.4 860.4h1.7v1.6h-1.7zM1239.9 854.6h1.3v1.4h-1.3zM1298.6 857.1h2.1v1.6h-2.1zM1280.1 855.3h1.3v1.4h-1.3zM1269.5 853.3h1.6v1.0h-1.6zM1314.7 861.0h1.6v1.6h-1.6zM1181.4 906.4h2.1v1.5h-2.1zM1166.1 906.0h1.1v1.5h-1.1zM1174.3 905.8h1.9v2.1h-1.9zM1191.3 905.8h1.8v1.7h-1.8zM1223.5 899.7h1.6v2.1h-1.6zM1221.8 906.5h1.6v1.5h-1.6zM1183.1 904.0h1.5v1.4h-1.5zM1196.5 903.9h1.8v1.7h-1.8zM1208.5 904.8h1.0v1.6h-1.0zM1223.2 908.3h2.0v1.3h-2.0zM1175.0 897.4h1.7v2.0h-1.7zM1221.6 899.7h1.3v1.6h-1.3zM1164.9 895.4h2.1v2.0h-2.1zM1213.2 906.5h2.2v1.6h-2.2zM1219.7 908.0h1.4v1.0h-1.4zM1162.8 907.4h1.5v1.8h-1.5zM1207.6 899.6h1.7v2.2h-1.7zM1219.7 902.1h1.2v1.6h-1.2zM1171.8 898.3h1.6v1.3h-1.6zM1224.8 898.6h1.4v1.6h-1.4zM1224.6 898.1h1.3v1.9h-1.3zM1166.0 896.3h1.4v1.5h-1.4zM1177.5 906.0h1.7v1.3h-1.7zM1205.6 904.9h1.6v1.7h-1.6zM1169.4 904.5h2.1v2.2h-2.1zM1179.1 896.8h1.0v1.1h-1.0zM1216.3 905.8h1.2v1.3h-1.2zM1211.7 902.9h1.6v1.7h-1.6zM1175.6 901.3h1.1v1.6h-1.1zM1183.2 903.0h2.2v1.2h-2.2zM1188.1 901.8h1.8v1.4h-1.8zM1220.7 902.8h2.1v1.1h-2.1zM1204.9 895.3h2.1v1.5h-2.1zM1184.0 901.8h1.3v1.8h-1.3zM1206.0 902.5h2.2v1.7h-2.2zM1187.4 895.3h1.3v2.2h-1.3zM1175.7 900.8h1.5v1.5h-1.5zM1196.8 898.7h1.1v2.1h-1.1zM1187.8 905.8h1.7v1.7h-1.7zM1212.9 903.9h1.5v2.1h-1.5zM1227.4 905.7h1.2v1.8h-1.2zM1162.1 904.1h1.1v1.3h-1.1zM1205.8 902.1h2.1v1.8h-2.1zM1214.8 897.1h1.9v1.7h-1.9zM1166.6 902.4h1.6v1.8h-1.6zM1210.4 905.0h2.1v1.1h-2.1zM1204.0 902.7h2.1v2.2h-2.1zM1202.0 899.6h1.6v1.5h-1.6zM1190.7 901.9h2.0v1.7h-2.0zM1215.9 904.2h1.9v2.0h-1.9zM1170.1 896.2h1.3v1.0h-1.3zM1193.4 905.5h1.6v1.1h-1.6zM1185.9 901.3h1.5v2.0h-1.5zM1200.5 896.7h1.3v1.2h-1.3zM1210.7 908.4h1.2v1.3h-1.2zM1226.7 903.0h1.3v1.3h-1.3zM1205.6 898.2h2.0v2.2h-2.0zM1162.2 907.5h2.2v2.1h-2.2zM1193.4 899.1h1.8v1.3h-1.8zM1167.7 907.0h1.9v1.5h-1.9zM1208.6 896.8h1.4v1.2h-1.4zM1170.0 907.9h1.7v1.5h-1.7zM1221.5 904.0h1.8v1.1h-1.8zM1173.2 899.1h2.0v1.9h-2.0zM1225.3 902.5h1.2v2.0h-1.2zM1196.5 900.7h1.8v2.2h-1.8zM1170.1 897.4h1.3v2.2h-1.3zM1175.1 902.4h2.0v1.0h-2.0zM1163.7 904.1h1.3v1.5h-1.3zM1168.8 904.5h1.1v1.3h-1.1zM1164.2 902.5h1.3v1.7h-1.3zM1174.9 898.8h1.4v2.1h-1.4zM1194.4 901.8h2.0v1.1h-2.0zM1195.2 895.4h1.3v1.2h-1.3zM1187.3 898.5h1.0v1.3h-1.0zM1202.3 903.0h1.9v1.5h-1.9zM1199.1 903.9h1.9v2.1h-1.9zM1217.3 902.4h1.7v1.1h-1.7zM1195.6 907.4h1.0v1.9h-1.0zM1221.6 907.5h1.5v1.6h-1.5zM1190.5 904.9h1.9v1.5h-1.9zM1208.3 902.6h2.1v1.5h-2.1zM1180.7 898.5h1.7v1.3h-1.7zM1176.4 897.8h2.2v1.0h-2.2zM1182.4 896.4h2.0v1.8h-2.0zM1204.5 904.4h1.8v1.9h-1.8zM1214.7 907.2h1.7v1.0h-1.7zM1227.7 908.2h1.2v1.5h-1.2zM1172.4 906.4h2.0v2.0h-2.0zM1222.2 906.2h2.0v1.2h-2.0zM1168.1 897.2h2.1v2.1h-2.1zM1185.0 905.9h2.0v1.2h-2.0zM1189.2 904.4h2.0v1.5h-2.0zM1184.8 898.2h2.2v1.8h-2.2zM1210.1 898.0h1.2v1.7h-1.2zM1199.9 902.0h1.9v1.7h-1.9zM1197.8 904.3h1.5v1.0h-1.5zM1204.7 897.1h2.1v2.2h-2.1zM1225.6 907.8h2.0v1.5h-2.0zM1165.3 904.4h1.1v1.1h-1.1zM1183.6 902.9h1.6v1.7h-1.6zM1211.1 898.1h1.1v1.2h-1.1zM1321.4 907.4h1.1v1.8h-1.1zM1236.7 897.0h2.1v1.9h-2.1zM1308.2 895.4h1.7v1.6h-1.7zM1301.1 896.2h1.8v1.1h-1.8zM1321.1 905.4h1.6v1.9h-1.6zM1291.0 902.4h1.9v1.4h-1.9zM1274.4 900.0h1.6v1.7h-1.6zM1319.9 907.3h1.9v1.8h-1.9zM1279.3 901.9h2.0v1.1h-2.0zM1252.9 895.1h1.9v2.1h-1.9zM1265.1 902.7h2.0v2.2h-2.0zM1291.1 904.4h1.5v1.5h-1.5zM1278.5 901.1h2.1v1.4h-2.1zM1314.8 908.0h2.2v1.6h-2.2zM1245.7 901.5h1.0v1.9h-1.0zM1285.9 904.6h1.8v1.1h-1.8zM1270.3 897.0h1.4v1.6h-1.4zM1291.2 902.0h1.3v2.1h-1.3zM1301.0 900.2h2.0v2.0h-2.0zM1241.6 907.6h1.6v1.4h-1.6zM1310.0 899.2h1.1v1.4h-1.1zM1248.9 901.3h2.1v1.0h-2.1zM1313.3 905.7h1.8v2.0h-1.8zM1240.0 901.0h1.2v2.2h-1.2zM1253.6 908.9h1.4v1.0h-1.4zM1321.8 905.0h2.2v1.4h-2.2zM1253.8 898.7h1.0v1.7h-1.0zM1266.3 895.1h1.9v1.2h-1.9zM1245.8 896.3h1.4v1.4h-1.4zM1317.0 898.6h1.5v1.1h-1.5zM1306.3 897.6h1.4v1.1h-1.4zM1315.3 907.4h1.1v1.4h-1.1zM1242.3 907.0h1.6v1.7h-1.6zM1308.3 897.2h1.9v1.3h-1.9zM1285.0 898.4h1.6v1.3h-1.6zM1237.4 896.6h1.7v1.3h-1.7zM1280.1 903.9h1.9v1.5h-1.9zM1271.4 905.4h1.3v1.2h-1.3zM1288.3 898.4h1.9v1.6h-1.9zM1305.0 899.9h2.1v1.8h-2.1zM1281.9 905.0h1.7v1.9h-1.7zM1263.6 901.7h1.3v1.9h-1.3zM1313.0 895.4h1.2v1.5h-1.2zM1293.1 904.2h1.2v1.7h-1.2zM1287.9 897.0h1.8v1.9h-1.8zM1236.5 901.9h1.7v1.3h-1.7zM1301.3 903.4h2.2v1.6h-2.2zM1321.9 903.7h1.0v1.7h-1.0zM1294.0 907.0h1.4v2.1h-1.4zM1276.2 902.1h2.0v1.7h-2.0zM1247.0 907.8h1.4v2.0h-1.4zM1288.7 899.2h1.4v1.5h-1.4zM1311.0 896.5h1.7v1.1h-1.7zM1303.6 904.7h2.0v2.0h-2.0zM1241.4 904.9h1.2v1.7h-1.2zM1274.1 896.2h1.9v1.3h-1.9zM1241.2 903.1h1.8v1.8h-1.8zM1314.0 898.8h2.1v1.2h-2.1zM1301.8 897.7h1.0v1.1h-1.0zM1243.1 906.0h2.0v1.5h-2.0zM1236.3 899.2h1.4v1.2h-1.4zM1286.3 896.1h1.6v1.6h-1.6zM1273.0 904.4h1.0v2.1h-1.0zM1299.7 897.9h2.1v1.7h-2.1zM1321.5 908.0h1.3v1.6h-1.3zM1261.1 899.8h1.3v1.8h-1.3zM1269.2 900.9h1.3v2.2h-1.3zM1243.4 905.8h1.1v2.0h-1.1zM1239.6 899.9h1.3v1.3h-1.3zM1264.5 905.1h2.1v1.4h-2.1zM1319.8 906.2h1.3v1.9h-1.3zM1304.6 905.4h1.0v1.9h-1.0zM1294.4 903.1h1.7v1.1h-1.7zM1251.8 899.9h1.6v1.9h-1.6zM1321.4 906.5h1.8v2.1h-1.8zM1281.5 901.2h1.3v1.5h-1.3zM1316.9 900.1h1.1v1.4h-1.1zM1280.2 906.9h2.1v2.1h-2.1zM1286.7 908.3h2.2v1.0h-2.2zM1249.2 907.0h1.4v1.4h-1.4zM1287.5 906.9h1.7v1.7h-1.7zM1274.6 899.5h1.6v1.7h-1.6zM1278.4 896.2h2.2v1.8h-2.2zM1276.7 897.9h1.8v1.1h-1.8zM1255.4 901.0h1.5v1.3h-1.5zM1298.5 896.4h1.1v1.3h-1.1zM1254.2 905.4h2.0v1.5h-2.0zM1236.1 897.4h1.5v1.4h-1.5zM1273.4 902.9h2.1v1.6h-2.1zM1310.9 903.7h1.1v1.2h-1.1zM1261.2 900.8h1.4v2.0h-1.4zM1260.1 907.7h1.9v2.0h-1.9zM1280.6 902.7h1.3v1.3h-1.3zM1303.3 898.4h1.6v1.6h-1.6zM1313.0 898.4h1.5v1.8h-1.5zM1259.2 901.9h1.4v1.6h-1.4zM1307.4 907.2h2.1v1.3h-2.1zM1246.2 902.5h1.6v1.4h-1.6zM1257.9 906.2h2.0v1.5h-2.0zM1302.5 901.8h1.2v1.7h-1.2zM1265.2 903.9h1.4v1.7h-1.4zM1302.6 896.6h2.0v2.0h-2.0zM1291.1 906.8h1.3v1.8h-1.3zM1242.4 895.7h1.5v1.1h-1.5zM1239.2 907.4h1.6v1.4h-1.6zM1303.3 904.3h1.1v1.4h-1.1zM1274.8 905.6h1.3v2.2h-1.3zM1318.7 895.8h1.5v1.8h-1.5zM1319.5 903.0h1.7v1.7h-1.7zM1284.0 897.3h1.3v1.2h-1.3zM1251.8 897.6h1.4v2.2h-1.4zM1314.3 899.4h1.8v1.6h-1.8zM1321.6 907.4h1.9v1.5h-1.9zM1277.1 901.4h1.2v1.4h-1.2zM1248.9 903.6h1.7v1.8h-1.7zM1259.2 898.4h2.0v1.5h-2.0zM1254.2 899.2h1.7v1.1h-1.7zM1282.8 896.9h1.8v1.9h-1.8zM1322.3 901.4h1.4v1.1h-1.4zM1259.7 897.0h2.0v1.3h-2.0zM1283.7 899.3h1.5v1.8h-1.5zM1302.8 897.4h1.2v1.3h-1.2zM1250.5 895.0h2.2v2.0h-2.2zM1293.6 902.0h2.0v1.1h-2.0zM1237.5 905.0h1.5v1.7h-1.5zM1260.2 906.7h2.0v1.0h-2.0zM1305.8 908.7h1.2v1.2h-1.2zM1247.4 895.1h2.2v1.2h-2.2zM1319.4 905.3h1.1v1.4h-1.1zM1283.6 897.1h1.2v1.5h-1.2zM1262.1 895.5h1.1v1.2h-1.1zM1276.5 900.6h2.2v2.2h-2.2zM1186.0 813.0h1.1v1.1h-1.1zM1186.0 818.6h1.1v1.1h-1.1zM1186.0 827.0h1.1v1.1h-1.1zM1186.0 829.8h1.1v1.1h-1.1zM1188.8 815.8h1.1v1.1h-1.1zM1188.8 821.4h1.1v1.1h-1.1zM1188.8 827.0h1.1v1.1h-1.1zM1188.8 829.8h1.1v1.1h-1.1zM1191.6 815.8h1.1v1.1h-1.1zM1191.6 821.4h1.1v1.1h-1.1zM1191.6 824.2h1.1v1.1h-1.1zM1191.6 829.8h1.1v1.1h-1.1zM1194.4 821.4h1.1v1.1h-1.1zM1194.4 824.2h1.1v1.1h-1.1zM1194.4 827.0h1.1v1.1h-1.1zM1194.4 829.8h1.1v1.1h-1.1zM1197.2 813.0h1.1v1.1h-1.1zM1197.2 815.8h1.1v1.1h-1.1zM1197.2 821.4h1.1v1.1h-1.1zM1197.2 824.2h1.1v1.1h-1.1zM1197.2 827.0h1.1v1.1h-1.1zM1197.2 829.8h1.1v1.1h-1.1zM1200.0 813.0h1.1v1.1h-1.1zM1200.0 818.6h1.1v1.1h-1.1zM1200.0 821.4h1.1v1.1h-1.1zM1200.0 827.0h1.1v1.1h-1.1zM1200.0 829.8h1.1v1.1h-1.1zM1202.8 813.0h1.1v1.1h-1.1zM1202.8 818.6h1.1v1.1h-1.1zM1202.8 824.2h1.1v1.1h-1.1zM1202.8 827.0h1.1v1.1h-1.1zM1202.8 829.8h1.1v1.1h-1.1zM1205.6 813.0h1.1v1.1h-1.1zM1205.6 815.8h1.1v1.1h-1.1zM1205.6 818.6h1.1v1.1h-1.1zM1205.6 821.4h1.1v1.1h-1.1zM1205.6 827.0h1.1v1.1h-1.1zM1208.4 815.8h1.1v1.1h-1.1zM1208.4 818.6h1.1v1.1h-1.1zM1208.4 821.4h1.1v1.1h-1.1zM1208.4 824.2h1.1v1.1h-1.1zM1208.4 827.0h1.1v1.1h-1.1zM1208.4 829.8h1.1v1.1h-1.1zM1211.2 815.8h1.1v1.1h-1.1zM1211.2 818.6h1.1v1.1h-1.1zM1211.2 824.2h1.1v1.1h-1.1zM1214.0 813.0h1.1v1.1h-1.1zM1214.0 815.8h1.1v1.1h-1.1zM1214.0 821.4h1.1v1.1h-1.1zM1214.0 824.2h1.1v1.1h-1.1zM1214.0 827.0h1.1v1.1h-1.1zM1214.0 829.8h1.1v1.1h-1.1zM1216.8 813.0h1.1v1.1h-1.1zM1216.8 815.8h1.1v1.1h-1.1zM1216.8 818.6h1.1v1.1h-1.1zM1216.8 827.0h1.1v1.1h-1.1zM1216.8 829.8h1.1v1.1h-1.1zM1219.6 813.0h1.1v1.1h-1.1zM1219.6 815.8h1.1v1.1h-1.1zM1219.6 818.6h1.1v1.1h-1.1zM1219.6 824.2h1.1v1.1h-1.1zM1219.6 827.0h1.1v1.1h-1.1zM1219.6 829.8h1.1v1.1h-1.1zM1280.0 815.8h1.1v1.1h-1.1zM1280.0 821.4h1.1v1.1h-1.1zM1280.0 824.2h1.1v1.1h-1.1zM1280.0 829.8h1.1v1.1h-1.1zM1282.8 818.6h1.1v1.1h-1.1zM1282.8 827.0h1.1v1.1h-1.1zM1285.6 813.0h1.1v1.1h-1.1zM1285.6 815.8h1.1v1.1h-1.1zM1285.6 821.4h1.1v1.1h-1.1zM1285.6 827.0h1.1v1.1h-1.1zM1288.4 813.0h1.1v1.1h-1.1zM1288.4 827.0h1.1v1.1h-1.1zM1291.2 818.6h1.1v1.1h-1.1zM1291.2 821.4h1.1v1.1h-1.1zM1291.2 824.2h1.1v1.1h-1.1zM1294.0 813.0h1.1v1.1h-1.1zM1294.0 818.6h1.1v1.1h-1.1zM1294.0 821.4h1.1v1.1h-1.1zM1296.8 815.8h1.1v1.1h-1.1zM1296.8 818.6h1.1v1.1h-1.1zM1296.8 821.4h1.1v1.1h-1.1zM1296.8 824.2h1.1v1.1h-1.1zM1299.6 815.8h1.1v1.1h-1.1zM1299.6 821.4h1.1v1.1h-1.1zM1299.6 824.2h1.1v1.1h-1.1zM1302.4 813.0h1.1v1.1h-1.1zM1302.4 824.2h1.1v1.1h-1.1zM1302.4 827.0h1.1v1.1h-1.1zM1305.2 813.0h1.1v1.1h-1.1zM1305.2 815.8h1.1v1.1h-1.1zM1305.2 818.6h1.1v1.1h-1.1zM1305.2 821.4h1.1v1.1h-1.1zM1305.2 824.2h1.1v1.1h-1.1zM1305.2 827.0h1.1v1.1h-1.1zM1305.2 829.8h1.1v1.1h-1.1zM1308.0 813.0h1.1v1.1h-1.1zM1308.0 815.8h1.1v1.1h-1.1zM1308.0 818.6h1.1v1.1h-1.1zM1308.0 821.4h1.1v1.1h-1.1zM1308.0 824.2h1.1v1.1h-1.1zM1308.0 827.0h1.1v1.1h-1.1zM1308.0 829.8h1.1v1.1h-1.1zM1310.8 813.0h1.1v1.1h-1.1zM1310.8 815.8h1.1v1.1h-1.1zM1310.8 821.4h1.1v1.1h-1.1zM1310.8 824.2h1.1v1.1h-1.1zM1310.8 827.0h1.1v1.1h-1.1zM1313.6 818.6h1.1v1.1h-1.1zM1313.6 821.4h1.1v1.1h-1.1zM1313.6 824.2h1.1v1.1h-1.1zM1313.6 829.8h1.1v1.1h-1.1zM1243.0 880.4h1.1v1.1h-1.1zM1243.0 883.2h1.1v1.1h-1.1zM1243.0 886.0h1.1v1.1h-1.1zM1245.8 872.0h1.1v1.1h-1.1zM1245.8 877.6h1.1v1.1h-1.1zM1245.8 883.2h1.1v1.1h-1.1zM1245.8 886.0h1.1v1.1h-1.1zM1245.8 888.8h1.1v1.1h-1.1zM1248.6 872.0h1.1v1.1h-1.1zM1248.6 877.6h1.1v1.1h-1.1zM1248.6 880.4h1.1v1.1h-1.1zM1248.6 883.2h1.1v1.1h-1.1zM1248.6 888.8h1.1v1.1h-1.1zM1251.4 874.8h1.1v1.1h-1.1zM1251.4 877.6h1.1v1.1h-1.1zM1251.4 880.4h1.1v1.1h-1.1zM1251.4 883.2h1.1v1.1h-1.1zM1251.4 888.8h1.1v1.1h-1.1zM1254.2 880.4h1.1v1.1h-1.1zM1254.2 883.2h1.1v1.1h-1.1zM1254.2 886.0h1.1v1.1h-1.1zM1254.2 888.8h1.1v1.1h-1.1zM1257.0 872.0h1.1v1.1h-1.1zM1257.0 874.8h1.1v1.1h-1.1zM1257.0 877.6h1.1v1.1h-1.1zM1259.8 872.0h1.1v1.1h-1.1zM1259.8 874.8h1.1v1.1h-1.1zM1259.8 877.6h1.1v1.1h-1.1zM1259.8 886.0h1.1v1.1h-1.1zM1259.8 888.8h1.1v1.1h-1.1zM1262.6 874.8h1.1v1.1h-1.1zM1262.6 877.6h1.1v1.1h-1.1zM1262.6 883.2h1.1v1.1h-1.1zM1262.6 886.0h1.1v1.1h-1.1zM1265.4 872.0h1.1v1.1h-1.1zM1265.4 874.8h1.1v1.1h-1.1zM1265.4 877.6h1.1v1.1h-1.1zM1265.4 880.4h1.1v1.1h-1.1zM1265.4 883.2h1.1v1.1h-1.1zM1265.4 886.0h1.1v1.1h-1.1zM1268.2 872.0h1.1v1.1h-1.1zM1268.2 874.8h1.1v1.1h-1.1zM1268.2 886.0h1.1v1.1h-1.1zM1271.0 883.2h1.1v1.1h-1.1zM1273.8 872.0h1.1v1.1h-1.1zM1273.8 874.8h1.1v1.1h-1.1zM1273.8 877.6h1.1v1.1h-1.1zM1273.8 880.4h1.1v1.1h-1.1zM1273.8 886.0h1.1v1.1h-1.1zM1273.8 888.8h1.1v1.1h-1.1zM1276.6 880.4h1.1v1.1h-1.1zM1276.6 883.2h1.1v1.1h-1.1zM1276.6 886.0h1.1v1.1h-1.1zM1162.0 874.8h1.1v1.1h-1.1zM1162.0 877.6h1.1v1.1h-1.1zM1162.0 886.0h1.1v1.1h-1.1zM1162.0 888.8h1.1v1.1h-1.1zM1164.8 872.0h1.1v1.1h-1.1zM1164.8 874.8h1.1v1.1h-1.1zM1164.8 877.6h1.1v1.1h-1.1zM1164.8 880.4h1.1v1.1h-1.1zM1164.8 883.2h1.1v1.1h-1.1zM1164.8 888.8h1.1v1.1h-1.1zM1167.6 872.0h1.1v1.1h-1.1zM1167.6 883.2h1.1v1.1h-1.1zM1170.4 877.6h1.1v1.1h-1.1zM1170.4 880.4h1.1v1.1h-1.1zM1170.4 883.2h1.1v1.1h-1.1zM1170.4 888.8h1.1v1.1h-1.1zM1173.2 872.0h1.1v1.1h-1.1zM1173.2 874.8h1.1v1.1h-1.1zM1173.2 877.6h1.1v1.1h-1.1zM1173.2 880.4h1.1v1.1h-1.1zM1173.2 886.0h1.1v1.1h-1.1zM1173.2 888.8h1.1v1.1h-1.1zM1176.0 877.6h1.1v1.1h-1.1zM1176.0 888.8h1.1v1.1h-1.1zM1178.8 874.8h1.1v1.1h-1.1zM1178.8 877.6h1.1v1.1h-1.1zM1178.8 880.4h1.1v1.1h-1.1zM1178.8 883.2h1.1v1.1h-1.1zM1178.8 886.0h1.1v1.1h-1.1zM1178.8 888.8h1.1v1.1h-1.1zM1181.6 872.0h1.1v1.1h-1.1zM1181.6 874.8h1.1v1.1h-1.1zM1181.6 877.6h1.1v1.1h-1.1zM1181.6 880.4h1.1v1.1h-1.1zM1181.6 883.2h1.1v1.1h-1.1zM1179.6 875.0h1.7v1.7h-1.7zM1184.1 783.0h1.7v1.0h-1.7zM1303.5 800.6h1.1v1.8h-1.1zM1301.4 826.8h0.9v1.0h-0.9zM1229.6 872.0h1.4v1.2h-1.4zM1229.3 883.5h1.7v1.0h-1.7zM1207.0 783.9h1.6v1.5h-1.6zM1306.0 865.1h1.1v1.4h-1.1zM1282.5 920.4h1.4v1.2h-1.4zM1247.3 816.7h1.3v1.5h-1.3zM1229.4 914.0h1.7v1.0h-1.7zM1195.5 833.9h1.4v1.3h-1.4zM1261.5 917.3h1.6v1.5h-1.6zM1261.9 914.7h1.2v1.2h-1.2zM1295.0 783.2h1.5v1.7h-1.5zM1271.3 894.1h1.5v1.1h-1.5zM1221.7 802.8h1.6v1.1h-1.6zM1251.6 859.3h1.6v1.5h-1.6zM1190.9 918.0h1.6v1.3h-1.6zM1252.2 809.9h1.6v1.3h-1.6zM1268.8 897.9h1.1v0.9h-1.1zM1231.5 821.1h1.1v1.1h-1.1zM1203.6 838.7h1.6v1.1h-1.6zM1180.7 800.2h1.7v1.5h-1.7zM1267.3 804.0h0.9v1.5h-0.9zM1169.9 885.6h1.2v1.7h-1.2zM1213.1 886.9h1.6v1.5h-1.6zM1261.7 866.9h1.7v1.4h-1.7zM1268.5 850.4h1.7v1.8h-1.7zM1230.2 878.3h1.0v1.3h-1.0zM1194.0 888.6h1.3v1.1h-1.3zM1193.0 844.4h1.4v1.6h-1.4zM1218.2 819.8h1.0v1.1h-1.0zM1244.2 793.5h1.8v1.0h-1.8zM1299.3 825.8h1.7v1.0h-1.7zM1262.7 790.5h1.2v1.0h-1.2zM1206.2 874.0h1.5v1.4h-1.5zM1308.5 907.0h1.5v1.0h-1.5zM1217.0 798.6h1.6v1.7h-1.6zM1271.2 795.7h1.3v1.7h-1.3zM1235.9 873.6h1.6v1.6h-1.6zM1288.5 862.5h1.7v1.3h-1.7zM1185.7 807.2h1.6v1.7h-1.6zM1209.7 780.1h1.4v1.2h-1.4zM1227.7 811.0h1.3v1.8h-1.3zM1166.2 804.6h1.2v1.4h-1.2zM1273.6 798.8h1.4v1.2h-1.4zM1282.9 872.9h1.0v1.7h-1.0zM1185.9 844.5h1.4v1.1h-1.4zM1242.3 791.5h1.5v1.3h-1.5zM1224.3 896.7h1.8v1.1h-1.8zM1234.2 901.5h1.8v1.2h-1.8zM1196.8 829.0h1.3v1.0h-1.3zM1306.0 900.9h0.9v1.0h-0.9zM1217.9 915.9h1.6v1.2h-1.6zM1220.5 887.6h0.9v1.3h-0.9zM1317.1 867.5h1.5v1.8h-1.5zM1195.1 853.5h1.7v1.4h-1.7zM1290.9 794.7h1.1v1.7h-1.1zM1285.8 801.1h1.5v1.5h-1.5zM1230.5 832.4h1.4v1.0h-1.4zM1244.7 796.1h1.2v1.3h-1.2zM1274.6 785.2h1.4v1.0h-1.4zM1287.6 916.8h1.3v0.9h-1.3zM1236.2 889.3h1.6v1.3h-1.6zM1239.4 805.0h1.0v1.2h-1.0zM1184.4 865.2h1.3v1.2h-1.3zM1247.9 812.7h1.3v1.0h-1.3zM1277.3 866.6h1.4v1.2h-1.4zM1284.2 828.8h0.9v1.2h-0.9zM1310.5 888.5h1.6v1.7h-1.6zM1175.8 822.6h1.3v1.3h-1.3zM1288.3 871.0h1.1v1.6h-1.1zM1264.6 831.6h1.6v1.3h-1.6zM1303.3 851.9h0.9v1.4h-0.9zM1202.7 803.0h1.7v1.2h-1.7zM1179.7 825.3h1.3v1.2h-1.3zM1229.4 813.9h1.8v1.6h-1.8zM1261.5 820.6h1.3v1.2h-1.3zM1207.0 812.0h1.5v1.6h-1.5zM1303.5 897.5h1.4v1.4h-1.4zM1288.6 863.2h1.3v1.3h-1.3zM1180.6 877.0h1.0v1.2h-1.0zM1170.8 838.6h1.6v1.5h-1.6zM1283.2 809.0h0.9v1.5h-0.9zM1185.2 914.4h1.5v0.9h-1.5zM1312.4 890.8h1.1v1.5h-1.1zM1226.6 802.4h1.3v1.3h-1.3zM1284.5 849.3h1.6v1.4h-1.6zM1181.1 884.2h1.1v1.1h-1.1zM1318.7 832.8h1.4v1.2h-1.4zM1206.7 816.0h1.2v1.1h-1.2zM1237.5 900.9h1.4v1.3h-1.4zM1244.2 917.0h1.2v1.4h-1.2zM1220.0 807.9h1.4v1.7h-1.4zM1180.4 821.9h1.1v1.6h-1.1zM1274.8 837.0h1.7v1.0h-1.7zM1300.3 810.7h1.1v1.8h-1.1zM1173.8 916.8h1.0v1.4h-1.0zM1170.9 850.7h1.2v1.2h-1.2zM1274.5 854.4h1.4v1.0h-1.4zM1301.7 843.3h1.6v1.7h-1.6zM1227.5 845.8h1.2v1.5h-1.2zM1178.5 871.9h1.1v1.0h-1.1zM1204.7 809.6h1.7v1.8h-1.7zM1294.2 830.2h1.0v1.0h-1.0zM1274.7 807.7h1.2v1.1h-1.2zM1310.5 839.5h1.8v0.9h-1.8zM1200.2 912.5h1.3v1.4h-1.3zM1302.1 875.6h1.4v1.4h-1.4zM1210.0 810.8h1.7v1.0h-1.7zM1306.2 810.3h1.4v1.1h-1.4zM1213.1 882.6h1.3v1.3h-1.3zM1218.6 900.7h1.3v1.6h-1.3zM1312.3 914.3h1.7v1.3h-1.7zM1302.2 813.1h1.1v1.4h-1.1zM1293.6 834.6h1.7v1.2h-1.7zM1222.8 781.8h1.7v1.7h-1.7zM1209.5 912.4h1.5v1.4h-1.5zM1198.2 885.7h1.3v1.4h-1.3zM1312.9 820.3h1.4v1.0h-1.4zM1229.6 896.3h1.0v1.6h-1.0zM1277.6 906.4h1.3v1.4h-1.3zM1239.3 802.3h1.0v1.0h-1.0zM1219.2 792.4h1.6v1.2h-1.6zM1204.7 810.6h1.1v1.2h-1.1zM1181.7 852.9h1.2v1.6h-1.2zM1293.5 889.9h1.5v0.9h-1.5zM1173.7 906.8h1.1v1.0h-1.1zM1256.4 875.1h0.9v1.4h-0.9zM1236.5 889.5h1.3v1.3h-1.3zM1241.5 840.2h1.0v1.1h-1.0zM1317.4 811.0h1.5v1.3h-1.5zM1292.4 794.9h1.7v0.9h-1.7zM1308.3 799.2h1.2v1.3h-1.2zM1240.4 884.3h1.4v1.6h-1.4zM1202.1 827.0h1.8v1.6h-1.8zM1319.5 902.4h1.4v1.6h-1.4zM1276.1 906.0h1.6v1.4h-1.6zM1198.2 839.0h1.6v1.1h-1.6zM1292.3 822.7h1.8v1.2h-1.8zM1320.7 862.5h1.5v1.7h-1.5zM1298.6 810.7h1.4v1.1h-1.4zM1246.1 846.6h1.0v1.7h-1.0zM1272.5 904.7h1.1v1.7h-1.1zM1244.2 793.3h1.3v1.3h-1.3zM1219.7 901.7h0.9v1.4h-0.9zM1254.2 814.9h1.6v1.5h-1.6zM1203.3 847.2h1.4v1.5h-1.4zM1231.6 811.5h1.0v1.5h-1.0zM1197.0 781.0h1.5v1.6h-1.5zM1176.0 895.8h1.4v1.8h-1.4zM1164.1 837.2h1.4v1.5h-1.4zM1321.1 882.7h0.9v1.8h-0.9zM1183.1 922.2h1.4v1.6h-1.4zM1163.9 791.7h1.2v1.3h-1.2zM1242.6 885.2h1.7v1.1h-1.7zM1272.9 900.8h1.6v1.3h-1.6zM1254.7 880.2h1.1v1.2h-1.1zM1201.1 831.8h1.4v0.9h-1.4zM1205.5 861.9h1.7v1.5h-1.7zM1273.7 906.8h1.2v1.8h-1.2zM1288.7 806.2h1.3v1.0h-1.3zM1300.5 862.6h1.7v1.6h-1.7zM1206.9 797.4h1.5v0.9h-1.5zM1172.0 851.5h1.0v1.4h-1.0zM1290.9 923.0h1.0v1.1h-1.0zM1190.7 841.4h1.5v1.5h-1.5zM1222.7 815.2h1.7v1.0h-1.7zM1280.0 829.1h1.1v1.0h-1.1zM1275.4 832.8h1.8v1.2h-1.8zM1319.8 815.9h1.6v1.0h-1.6zM1164.8 858.0h1.6v1.2h-1.6zM1196.6 787.2h1.0v1.6h-1.0zM1265.1 883.2h1.4v1.4h-1.4zM1292.1 887.8h0.9v1.7h-0.9zM1195.0 907.8h0.9v1.2h-0.9zM1195.6 885.8h1.1v1.3h-1.1zM1283.3 832.3h1.0v1.3h-1.0zM1192.6 885.2h1.1v1.4h-1.1zM1170.1 834.0h1.6v1.1h-1.6zM1315.6 865.6h0.9v1.7h-0.9zM1220.1 858.1h1.4v1.4h-1.4zM1209.5 801.2h1.5v1.7h-1.5zM1212.1 854.0h1.3v0.9h-1.3zM1320.3 893.5h1.7v1.4h-1.7zM1214.7 805.9h1.8v1.7h-1.8zM1227.4 898.5h1.5v1.6h-1.5zM1162.3 901.2h1.5v1.6h-1.5zM1296.6 818.2h1.7v1.1h-1.7zM1295.1 793.7h1.7v1.7h-1.7zM1200.4 835.0h1.1v1.4h-1.1zM1188.1 804.2h1.8v1.7h-1.8zM1163.4 918.8h1.6v1.4h-1.6zM1304.4 899.8h1.1v1.0h-1.1zM1313.8 924.0h1.0v1.4h-1.0zM1312.1 837.6h1.7v1.7h-1.7zM1293.6 866.2h1.5v1.7h-1.5zM1309.9 910.9h1.7v1.6h-1.7zM1216.5 851.6h1.7v1.1h-1.7zM1302.4 921.3h0.9v1.2h-0.9zM1179.9 857.7h1.3v1.4h-1.3zM1267.2 898.3h1.7v1.2h-1.7zM1276.7 805.7h1.3v1.3h-1.3zM1172.3 815.3h1.2v1.1h-1.2zM1226.6 796.5h1.6v1.6h-1.6zM1263.2 904.1h1.4v1.2h-1.4zM1295.0 904.1h1.2v1.2h-1.2zM1310.6 789.2h1.5v1.2h-1.5zM1171.9 804.5h1.8v1.6h-1.8zM1177.8 869.3h1.6v1.7h-1.6zM1310.8 906.9h1.7v1.5h-1.7zM1305.7 815.7h1.1v1.0h-1.1zM1224.0 890.6h1.7v1.8h-1.7zM1181.8 870.7h1.1v1.4h-1.1zM1165.9 921.5h1.0v1.3h-1.0zM1198.1 893.5h1.5v1.2h-1.5zM1168.7 832.8h1.3v1.4h-1.3zM1194.8 787.1h1.3v1.7h-1.3zM1168.2 795.7h1.4v1.1h-1.4zM1204.6 881.9h1.3v1.3h-1.3zM1241.8 815.4h0.9v1.2h-0.9zM1235.1 917.6h1.8v1.2h-1.8zM1238.5 923.6h1.4v1.1h-1.4zM1173.8 914.0h1.6v1.2h-1.6zM1229.5 890.7h1.2v1.0h-1.2zM1312.8 877.0h1.2v1.6h-1.2zM1175.6 877.9h1.7v1.4h-1.7zM1306.4 847.3h1.1v1.6h-1.1zM1254.3 875.7h1.5v0.9h-1.5zM1193.5 890.4h1.7v1.0h-1.7zM1317.9 790.3h1.5v1.3h-1.5zM1200.8 875.4h1.7v1.0h-1.7zM1211.7 895.0h0.9v1.6h-0.9zM1289.0 913.0h1.4v1.1h-1.4zM1232.9 789.8h1.6v1.0h-1.6zM1247.1 905.7h1.3v1.2h-1.3zM1171.0 850.1h1.6v1.6h-1.6zM1304.5 781.1h1.3v1.6h-1.3zM1167.3 869.7h1.7v1.2h-1.7zM1291.0 847.6h1.4v1.8h-1.4zM1244.8 825.9h1.6v1.7h-1.6zM1276.3 869.3h1.5v1.7h-1.5zM1258.4 884.5h1.0v1.6h-1.0zM1202.9 865.9h1.3v0.9h-1.3zM1227.9 800.7h1.0v1.2h-1.0zM1308.8 884.0h1.2v1.3h-1.2zM1292.3 780.0h1.0v1.3h-1.0zM1202.3 782.0h1.5v1.5h-1.5zM1268.9 791.0h1.2v1.2h-1.2zM1168.4 865.9h1.0v1.5h-1.0zM1227.7 829.3h1.2v1.2h-1.2zM1253.4 878.7h1.6v1.7h-1.6zM1237.2 783.9h1.7v1.0h-1.7zM1183.8 841.0h1.6v1.7h-1.6zM1170.7 839.1h1.5v1.4h-1.5zM1305.6 791.3h1.2v1.4h-1.2zM1224.1 807.9h1.4v1.3h-1.4zM1270.4 822.7h1.3v1.0h-1.3zM1195.9 807.2h1.7v1.1h-1.7zM1301.4 854.5h1.6v1.7h-1.6zM1248.0 796.3h1.5v1.2h-1.5zM1239.1 794.9h1.7v1.3h-1.7zM1320.0 790.8h1.4v1.1h-1.4zM1194.4 852.8h1.2v1.0h-1.2zM1258.6 890.7h1.0v1.5h-1.0zM1216.3 879.4h1.2v1.5h-1.2zM1271.1 895.6h1.8v1.1h-1.8zM1244.3 854.0h1.1v0.9h-1.1zM1215.6 896.4h1.5v1.6h-1.5zM1199.2 845.6h1.5v1.1h-1.5zM1247.2 856.3h1.7v1.7h-1.7zM1165.6 882.3h1.3v1.6h-1.3zM1299.3 795.6h1.4v1.4h-1.4zM1201.4 868.9h1.4v1.8h-1.4zM1264.8 800.1h1.1v1.6h-1.1zM1233.5 895.5h1.0v1.2h-1.0zM1176.4 846.4h1.7v1.4h-1.7zM1232.8 818.6h1.7v1.0h-1.7zM1169.2 807.0h1.5v1.1h-1.5zM1297.5 810.8h1.4v1.3h-1.4zM1166.1 850.9h1.5v1.7h-1.5zM1203.6 889.8h1.1v1.2h-1.1zM1195.3 822.5h1.1v1.8h-1.1zM1189.7 828.4h1.5v1.0h-1.5zM1256.7 821.3h1.5v1.6h-1.5zM1221.2 796.4h1.4v1.8h-1.4zM1314.9 916.1h0.9v1.3h-0.9zM1222.5 810.8h1.5v1.1h-1.5zM1167.0 855.2h1.3v1.6h-1.3zM1289.0 890.7h1.1v1.5h-1.1zM1164.3 822.6h1.2v1.7h-1.2zM1239.8 867.0h1.0v1.5h-1.0zM1282.7 874.0h1.0v1.0h-1.0zM1257.7 842.1h1.7v1.3h-1.7zM1240.8 894.1h1.7v1.2h-1.7zM1177.9 919.1h1.2v1.3h-1.2zM1188.5 839.3h1.4v1.3h-1.4zM1220.3 831.3h1.2v1.1h-1.2zM1321.4 902.3h1.5v1.0h-1.5zM1280.3 785.9h0.9v1.3h-0.9zM1173.1 826.6h1.7v1.8h-1.7zM1280.1 896.1h1.8v1.2h-1.8zM1215.1 899.2h0.9v1.3h-0.9zM1165.9 867.7h1.0v1.5h-1.0zM1320.5 898.7h1.3v1.7h-1.3zM1256.9 841.4h1.5v1.2h-1.5zM1267.7 801.2h1.6v1.8h-1.6zM1306.1 826.4h1.4v1.4h-1.4zM1259.2 851.3h1.3v1.5h-1.3zM1176.4 843.2h1.4v1.1h-1.4zM1225.8 828.5h1.4v1.6h-1.4zM1195.6 903.4h1.8v1.7h-1.8zM1290.1 856.4h1.2v0.9h-1.2zM1168.6 836.7h1.7v1.3h-1.7zM1267.6 813.1h1.5v1.1h-1.5zM1275.6 809.7h1.5v0.9h-1.5zM1178.8 790.9h1.2v1.8h-1.2zM1252.9 855.9h1.8v1.6h-1.8zM1293.3 799.7h1.3v1.5h-1.3zM1187.4 795.7h1.2v1.4h-1.2zM1292.8 825.7h1.5v1.8h-1.5zM1294.1 866.0h1.2v1.8h-1.2zM1282.6 833.3h1.0v1.0h-1.0zM1271.9 854.4h1.5v1.0h-1.5zM1202.1 837.1h1.0v1.0h-1.0zM1192.4 808.0h1.4v1.8h-1.4zM1162.8 853.3h1.4v1.1h-1.4zM1243.9 790.6h1.3v1.5h-1.3zM1174.2 904.5h1.3v1.0h-1.3z"/><rect x="1239" y="813.5" width="11" height="2.500"/><rect x="1240" y="817.0" width="3.400" height="14"/><rect x="1245.4" y="817.0" width="3.400" height="14"/><rect x="1213.6" y="869" width="11" height="2.500"/><rect x="1214.6" y="872.5" width="3.400" height="14"/><rect x="1220.0" y="872.5" width="3.400" height="14"/><rect x="1308.5" y="869" width="11" height="2.500"/><rect x="1309.5" y="872.5" width="3.400" height="14"/><rect x="1314.9" y="872.5" width="3.400" height="14"/><rect x="1164" y="909" width="7" height="6" fill="none" stroke="#35c80e"/><rect x="1258" y="909" width="7" height="6" fill="none" stroke="#35c80e"/></g></svg>
<div style="left:1346px;top:766px;width:1px;height:169px;background:#e8e8e8"></div>
<div style="left:278px;top:158px;width:885px;height:767px;background:linear-gradient(#9fb9da 0px,#b3c9e6 22px,#c3d6ee 32px,#bdd2ec 100%);border:1px solid #3c4654;border-right-color:#35c7e6;border-bottom-color:#35c7e6;border-radius:6px 6px 0 0;box-shadow:inset 1px 1px 0 #e6f0fa"></div>
<svg style="left:286px;top:171px" width="14" height="11" viewBox="0 0 14 11"><path d="M1 9 L4 2 L6 7 L8 2 L10 7 L12 2" fill="none" stroke="#1c58b8" stroke-width="2.2"/><path d="M1 9 L4 2" stroke="#30b8d8" stroke-width="2.2"/></svg>
<span class="t" style="left:304px;top:171.88px;font-size:11.4px;line-height:11.4px;transform:scale(1,1.1);color:#1c1c1c;">CPL Step2 - Format Setting</span>
<div style="left:1125px;top:168px;width:28px;height:18px;border:1px solid #4a2a2a;border-radius:3px;background:linear-gradient(#e9a99b 0%,#dd8a78 48%,#c8442c 52%,#d4694f 100%);box-shadow:inset 0 0 0 1px rgba(255,255,255,.35)"></div>
<svg style="left:1125px;top:168px" width="28" height="18" viewBox="0 0 28 18"><path d="M10 5 L17 12.5 M17 5 L10 12.5" stroke="#6a3a32" stroke-width="4.2"/><path d="M10 5 L17 12.5 M17 5 L10 12.5" stroke="#fff" stroke-width="2.4"/></svg>
<div style="left:285px;top:190px;width:868px;height:727px;background:#dedede;border:1px solid #8f9aa8;border-top-color:#f4f4f4"></div>
<div style="left:286px;top:192px;width:866px;height:642px;border:1px solid #a5a5a5;border-top:0"></div>
<div style="left:286px;top:192px;width:866px;height:1px;background:#a0a0a0"></div>
<div style="left:291px;top:203px;width:855px;height:161px;border:1px solid #b4b4b4;background:#fff"></div>
<div style="left:1132px;top:204px;width:14px;height:159px;background:#e2e2e5;border-left:1px solid #c4c4c8"></div>
<div style="left:1132px;top:247px;width:14px;height:97px;background:linear-gradient(90deg,#7e8086 0%,#a9abb2 25%,#c9cad1 60%,#d6d7de 100%);border-radius:0 0 6px 6px"></div>
<svg style="left:1132px;top:204px" width="14" height="159" viewBox="0 0 14 159"><path d="M3.8 13.5 L7.0 6.5 L10.2 13.5 Z" fill="#3a3a3a"/><path d="M3.8 146 L7.0 153 L10.2 146 Z" fill="#3a3a3a"/><defs><linearGradient id="sg1132204" x1="0" x2="1" y1="0" y2="0"><stop offset="0" stop-color="#b9cde2"/><stop offset="0.5" stop-color="#dfe9f3"/><stop offset="1" stop-color="#c9d8e8"/></linearGradient></defs><path d="M0.5 19 Q12.5 19.5 13 30 L13 38 Q12.5 48.5 0.5 49 Z" fill="url(#sg1132204)" stroke="#5d7086" stroke-width="1.1"/></svg>
<span class="t" style="left:298.0px;top:213.83px;font-size:11px;line-height:11px;transform:scale(1,1.2);color:#000;">ANT2901</span>
<span class="t" style="left:363.1px;top:213.83px;font-size:11px;line-height:11px;transform:scale(1,1.2);color:#000;">57.92</span>
<span class="t" style="left:428.2px;top:213.83px;font-size:11px;line-height:11px;transform:scale(1,1.2);color:#000;">42.945</span>
<span class="t" style="left:493.29999999999995px;top:213.83px;font-size:11px;line-height:11px;transform:scale(1,1.2);color:#000;">90</span>
<span class="t" style="left:558.4px;top:213.83px;font-size:11px;line-height:11px;transform:scale(1,1.2);color:#000;">3878806</span>
<span class="t" style="left:298.0px;top:232.93px;font-size:11px;line-height:11px;transform:scale(1,1.2);color:#000;">ANT2902</span>
<span class="t" style="left:363.1px;top:232.93px;font-size:11px;line-height:11px;transform:scale(1,1.2);color:#000;">6.095</span>
<span class="t" style="left:428.2px;top:232.93px;font-size:11px;line-height:11px;transform:scale(1,1.2);color:#000;">40.975</span>
<span class="t" style="left:493.29999999999995px;top:232.93px;font-size:11px;line-height:11px;transform:scale(1,1.2);color:#000;">270</span>
<span class="t" style="left:558.4px;top:232.93px;font-size:11px;line-height:11px;transform:scale(1,1.2);color:#000;">3878806</span>
<span class="t" style="left:298.0px;top:252.03px;font-size:11px;line-height:11px;transform:scale(1,1.2);color:#000;">ANT2903</span>
<span class="t" style="left:363.1px;top:252.03px;font-size:11px;line-height:11px;transform:scale(1,1.2);color:#000;">3.145</span>
<span class="t" style="left:428.2px;top:252.03px;font-size:11px;line-height:11px;transform:scale(1,1.2);color:#000;">43.395</span>
<span class="t" style="left:493.29999999999995px;top:252.03px;font-size:11px;line-height:11px;transform:scale(1,1.2);color:#000;">180</span>
<span class="t" style="left:558.4px;top:252.03px;font-size:11px;line-height:11px;transform:scale(1,1.2);color:#000;">3878806</span>
<span class="t" style="left:298.0px;top:271.13px;font-size:11px;line-height:11px;transform:scale(1,1.2);color:#000;">ANT2904</span>
<span class="t" style="left:363.1px;top:271.13px;font-size:11px;line-height:11px;transform:scale(1,1.2);color:#000;">59.72</span>
<span class="t" style="left:428.2px;top:271.13px;font-size:11px;line-height:11px;transform:scale(1,1.2);color:#000;">42.895</span>
<span class="t" style="left:493.29999999999995px;top:271.13px;font-size:11px;line-height:11px;transform:scale(1,1.2);color:#000;">90</span>
<span class="t" style="left:558.4px;top:271.13px;font-size:11px;line-height:11px;transform:scale(1,1.2);color:#000;">3878806</span>
<span class="t" style="left:298.0px;top:290.23px;font-size:11px;line-height:11px;transform:scale(1,1.2);color:#000;">ANT2905</span>
<span class="t" style="left:363.1px;top:290.23px;font-size:11px;line-height:11px;transform:scale(1,1.2);color:#000;">56.12</span>
<span class="t" style="left:428.2px;top:290.23px;font-size:11px;line-height:11px;transform:scale(1,1.2);color:#000;">42.945</span>
<span class="t" style="left:493.29999999999995px;top:290.23px;font-size:11px;line-height:11px;transform:scale(1,1.2);color:#000;">90</span>
<span class="t" style="left:558.4px;top:290.23px;font-size:11px;line-height:11px;transform:scale(1,1.2);color:#000;">3878806</span>
<span class="t" style="left:298.0px;top:309.33px;font-size:11px;line-height:11px;transform:scale(1,1.2);color:#000;">C1053</span>
<span class="t" style="left:363.1px;top:309.33px;font-size:11px;line-height:11px;transform:scale(1,1.2);color:#000;">34.22</span>
<span class="t" style="left:428.2px;top:309.33px;font-size:11px;line-height:11px;transform:scale(1,1.2);color:#000;">14.32</span>
<span class="t" style="left:493.29999999999995px;top:309.33px;font-size:11px;line-height:11px;transform:scale(1,1.2);color:#000;">0</span>
<span class="t" style="left:558.4px;top:309.33px;font-size:11px;line-height:11px;transform:scale(1,1.2);color:#000;">8350848</span>
<span class="t" style="left:298.0px;top:328.43px;font-size:11px;line-height:11px;transform:scale(1,1.2);color:#000;">C1055</span>
<span class="t" style="left:363.1px;top:328.43px;font-size:11px;line-height:11px;transform:scale(1,1.2);color:#000;">36.22</span>
<span class="t" style="left:428.2px;top:328.43px;font-size:11px;line-height:11px;transform:scale(1,1.2);color:#000;">14.295</span>
<span class="t" style="left:493.29999999999995px;top:328.43px;font-size:11px;line-height:11px;transform:scale(1,1.2);color:#000;">0</span>
<span class="t" style="left:558.4px;top:328.43px;font-size:11px;line-height:11px;transform:scale(1,1.2);color:#000;">8350844</span>
<span class="t" style="left:298.0px;top:347.53px;font-size:11px;line-height:11px;transform:scale(1,1.2);color:#000;">C1057</span>
<span class="t" style="left:363.1px;top:347.53px;font-size:11px;line-height:11px;transform:scale(1,1.2);color:#000;">33.22</span>
<span class="t" style="left:428.2px;top:347.53px;font-size:11px;line-height:11px;transform:scale(1,1.2);color:#000;">14.32</span>
<span class="t" style="left:493.29999999999995px;top:347.53px;font-size:11px;line-height:11px;transform:scale(1,1.2);color:#000;">180</span>
<span class="t" style="left:558.4px;top:347.53px;font-size:11px;line-height:11px;transform:scale(1,1.2);color:#000;">8350848</span>
<div style="left:291px;top:205px;width:324px;height:28px;border:6px solid #f40000"></div>
<div style="left:291px;top:368px;width:856px;height:147px;border:1px solid #1a1a1a;border-bottom-width:2px;border-right-color:#555"></div>
<div style="left:300px;top:384px;width:305px;height:122px;border:1px solid #1a1a1a;border-bottom-width:2px"></div>
<div style="left:415px;top:382px;width:76px;height:5px;background:#dedede"></div>
<span class="t" style="left:417px;top:376.33px;font-size:11px;line-height:11px;transform:scale(1,1.2);color:#111;">Format Setting</span>
<div style="left:613px;top:385px;width:251px;height:120px;border:1px solid #1a1a1a;border-bottom-width:2px"></div>
<div style="left:687px;top:383px;width:101px;height:5px;background:#dedede"></div>
<span class="t" style="left:689px;top:377.33px;font-size:11px;line-height:11px;transform:scale(1,1.2);color:#111;">Define Applied Line</span>
<div style="left:871px;top:384px;width:267px;height:94px;border:1px solid #1a1a1a;border-bottom-width:2px"></div>
<div style="left:968px;top:382px;width:74px;height:5px;background:#dedede"></div>
<span class="t" style="left:970px;top:376.33px;font-size:11px;line-height:11px;transform:scale(1,1.2);color:#111;">Specific Char.</span>
<span class="t" style="left:90px;top:400.83px;font-size:11px;line-height:11px;transform:scale(1,1.2);color:#111;width:300px;text-align:right;">Format Type :</span>
<div class="cbn" style="left:397px;top:398px;width:204px;height:20px;"></div>
<div style="left:586px;top:398px;width:15px;height:20px;border:1px solid #6f7f97;border-radius:0 4px 4px 0;background:linear-gradient(#d9e2ee 0%,#b8c6da 50%,#a3b4cc 51%,#c3cfdf 100%)"></div>
<div class="arr" style="left:590px;top:405.0px"></div>
<span class="t" style="left:402px;top:401.33px;font-size:11px;line-height:11px;transform:scale(1,1.2);color:#000;">User Defined</span>
<span class="t" style="left:90px;top:427.83px;font-size:11px;line-height:11px;transform:scale(1,1.2);color:#111;width:300px;text-align:right;">Char. Separator :</span>
<div class="fld" style="left:397px;top:425px;width:190px;height:20px;"></div>
<div class="cbb" style="left:586px;top:424px;width:15px;height:22px;"></div>
<div class="arr" style="left:590px;top:432.0px"></div>
<span class="t" style="left:400px;top:428.33px;font-size:11px;line-height:11px;transform:scale(1,1.2);color:#000;">Tab</span>
<span class="t" style="left:90px;top:453.83px;font-size:11px;line-height:11px;transform:scale(1,1.2);color:#111;width:300px;text-align:right;">Setting Unit :</span>
<div class="cbn" style="left:398px;top:452px;width:90px;height:20px;"></div>
<div style="left:473px;top:452px;width:15px;height:20px;border:1px solid #6f7f97;border-radius:0 4px 4px 0;background:linear-gradient(#d9e2ee 0%,#b8c6da 50%,#a3b4cc 51%,#c3cfdf 100%)"></div>
<div class="arr" style="left:477px;top:459.0px"></div>
<span class="t" style="left:403px;top:455.33px;font-size:11px;line-height:11px;transform:scale(1,1.2);color:#000;">mm</span>
<span class="t" style="left:509px;top:454.83px;font-size:11px;line-height:11px;transform:scale(1,1.2);color:#111;">CW Angle :</span>
<div class="chk" style="left:565.5px;top:455.5px;width:11.5px;height:13.5px;"></div>
<svg style="left:580px;top:450px" width="22" height="26" viewBox="580 450 22 26"><path d="M594.3 463.2 A5.2 5.4 0 1 0 593.6 469.4" fill="none" stroke="#ea1010" stroke-width="2.6"/><path d="M588 464.5 H594.5" stroke="#ea1010" stroke-width="2"/><path d="M586.7 452.5 V473.3 M582.5 466.8 H599.6" stroke="#1a1a1a" stroke-width="1.1"/></svg>
<span class="t" style="left:590.6px;top:453.80px;font-size:5.4px;line-height:5.4px;transform:scale(1,1.05);color:#222;font-weight:bold;">CW</span>
<span class="t" style="left:90px;top:481.33px;font-size:11px;line-height:11px;transform:scale(1,1.2);color:#111;width:300px;text-align:right;">Point Option :</span>
<span class="t" style="left:422px;top:481.83px;font-size:11px;line-height:11px;transform:scale(1,1.2);color:#111;">X, Y</span>
<div class="fld" style="left:446px;top:481px;width:41px;height:18px;"></div>
<span class="t" style="left:450px;top:482.33px;font-size:11px;line-height:11px;transform:scale(1,1.2);color:#000;">0</span>
<span class="t" style="left:521px;top:481.83px;font-size:11px;line-height:11px;transform:scale(1,1.2);color:#111;">Angle</span>
<div class="fld" style="left:554px;top:481px;width:41px;height:18px;"></div>
<span class="t" style="left:558px;top:482.33px;font-size:11px;line-height:11px;transform:scale(1,1.2);color:#000;">0</span>
<span class="t" style="left:467px;top:401.33px;font-size:11px;line-height:11px;transform:scale(1,1.2);color:#111;width:300px;text-align:right;">First Char. of Start Line :</span>
<div class="fld" style="left:771px;top:400px;width:74px;height:19px;"></div>
<div class="cbb" style="left:844px;top:399px;width:15px;height:21px;"></div>
<div class="arr" style="left:848px;top:406.5px"></div>
<span class="t" style="left:775px;top:402.83px;font-size:11px;line-height:11px;transform:scale(1,1.2);color:#000;">Empty</span>
<span class="t" style="left:467px;top:428.33px;font-size:11px;line-height:11px;transform:scale(1,1.2);color:#111;width:300px;text-align:right;">Ignored Line from Start :</span>
<div class="fld" style="left:771px;top:427px;width:88px;height:19px;"></div>
<span class="t" style="left:775px;top:429.33px;font-size:11px;line-height:11px;transform:scale(1,1.2);color:#000;">0</span>
<span class="t" style="left:467px;top:454.33px;font-size:11px;line-height:11px;transform:scale(1,1.2);color:#111;width:300px;text-align:right;">First Char. of Ignored Lines :</span>
<div class="fld" style="left:771px;top:453px;width:74px;height:19px;"></div>
<div class="cbb" style="left:844px;top:452px;width:15px;height:21px;"></div>
<div class="arr" style="left:848px;top:459.5px"></div>
<span class="t" style="left:775px;top:455.83px;font-size:11px;line-height:11px;transform:scale(1,1.2);color:#000;">Empty</span>
<span class="t" style="left:467px;top:480.83px;font-size:11px;line-height:11px;transform:scale(1,1.2);color:#111;width:300px;text-align:right;">First Char. of Last Line :</span>
<div class="fld" style="left:771px;top:479px;width:74px;height:19px;"></div>
<div class="cbb" style="left:844px;top:478px;width:15px;height:21px;"></div>
<div class="arr" style="left:848px;top:485.5px"></div>
<span class="t" style="left:775px;top:481.83px;font-size:11px;line-height:11px;transform:scale(1,1.2);color:#000;">Empty</span>
<span class="t" style="left:680px;top:401.33px;font-size:11px;line-height:11px;transform:scale(1,1.2);color:#111;width:300px;text-align:right;">Top Side :</span>
<div class="fld" style="left:985px;top:399px;width:131px;height:18px;"></div>
<div class="chk" style="left:1121px;top:401px;width:12px;height:14px;"></div>
<svg style="left:1121px;top:400px" width="13" height="15" viewBox="0 0 13 15"><path d="M3 7 L5.5 11.5 L10 2.5" fill="none" stroke="#222" stroke-width="1.8"/></svg>
<span class="t" style="left:680px;top:427.83px;font-size:11px;line-height:11px;transform:scale(1,1.2);color:#111;width:300px;text-align:right;">Bottom Side :</span>
<div class="fld" style="left:985px;top:425px;width:131px;height:18px;"></div>
<span class="t" style="left:988px;top:427.83px;font-size:11px;line-height:11px;transform:scale(1,1.2);color:#000;">Y</span>
<div class="chk" style="left:1121px;top:427px;width:12px;height:14px;"></div>
<svg style="left:1121px;top:426px" width="13" height="15" viewBox="0 0 13 15"><path d="M3 7 L5.5 11.5 L10 2.5" fill="none" stroke="#222" stroke-width="1.8"/></svg>
<span class="t" style="left:680px;top:454.33px;font-size:11px;line-height:11px;transform:scale(1,1.2);color:#111;width:300px;text-align:right;">Skip Part :</span>
<div class="fld" style="left:985px;top:452px;width:131px;height:17px;"></div>
<span class="t" style="left:929px;top:486.83px;font-size:11px;line-height:11px;transform:scale(1,1.2);color:#111;">Allow Duplication :</span>
<div class="chk" style="left:1024px;top:486px;width:13px;height:15px;"></div>
<span class="t" style="left:1043px;top:486.83px;font-size:11px;line-height:11px;transform:scale(1,1.2);color:#111;">Uname</span>
<div style="left:291px;top:520px;width:856px;height:275px;border:1px solid #8a8a8a;border-left:2px solid #5c5c5c;border-top-color:#6a6a6a;border-right-color:#b0b0b0;border-bottom:2px solid #f2f2f2;box-shadow:0 1px 0 #9a9a9a"></div>
<div class="fld" style="left:296px;top:526px;width:692px;height:24px;"></div>
<div class="cbb" style="left:987px;top:525px;width:16px;height:26px;"></div>
<div class="arr" style="left:992px;top:535px"></div>
<div class="cbn" style="left:1006px;top:526px;width:89px;height:24px;"></div>
<div style="left:1080px;top:526px;width:15px;height:24px;border:1px solid #6f7f97;border-radius:0 4px 4px 0;background:linear-gradient(#d9e2ee 0%,#b8c6da 50%,#a3b4cc 51%,#c3cfdf 100%)"></div>
<div class="arr" style="left:1084px;top:535px"></div>
<span class="t" style="left:1011px;top:531.83px;font-size:11px;line-height:11px;transform:scale(1,1.2);color:#000;">All</span>
<div class="btn" style="left:1099px;top:526px;width:43px;height:25px;"></div>
<span class="t" style="left:1099px;top:531.82px;font-size:11.5px;line-height:11.5px;transform:scale(1,1.2);color:#000;width:43px;text-align:center;">Find</span>
<div style="left:295px;top:554px;width:849px;height:24px;background:#4590da"></div>
<span class="t" style="left:265.5px;top:559.16px;font-size:10.5px;line-height:10.5px;transform:scale(1,1.22);color:#fff;font-weight:bold;width:120px;text-align:center;">No.</span>
<span class="t" style="left:363px;top:559.16px;font-size:10.5px;line-height:10.5px;transform:scale(1,1.22);color:#fff;font-weight:bold;width:120px;text-align:center;">Uname</span>
<span class="t" style="left:497px;top:559.16px;font-size:10.5px;line-height:10.5px;transform:scale(1,1.22);color:#fff;font-weight:bold;width:120px;text-align:center;">Part</span>
<span class="t" style="left:629px;top:559.16px;font-size:10.5px;line-height:10.5px;transform:scale(1,1.22);color:#fff;font-weight:bold;width:120px;text-align:center;">Custom Part</span>
<span class="t" style="left:728px;top:559.16px;font-size:10.5px;line-height:10.5px;transform:scale(1,1.22);color:#fff;font-weight:bold;width:120px;text-align:center;">X</span>
<span class="t" style="left:811px;top:559.16px;font-size:10.5px;line-height:10.5px;transform:scale(1,1.22);color:#fff;font-weight:bold;width:120px;text-align:center;">Y</span>
<span class="t" style="left:904px;top:559.16px;font-size:10.5px;line-height:10.5px;transform:scale(1,1.22);color:#fff;font-weight:bold;width:120px;text-align:center;">Rotation</span>
<span class="t" style="left:1007px;top:559.16px;font-size:10.5px;line-height:10.5px;transform:scale(1,1.22);color:#fff;font-weight:bold;width:120px;text-align:center;">Side</span>
<div style="left:295px;top:578px;width:849px;height:26px;background:#4590da"></div>
<div style="left:296px;top:579px;width:848px;height:1px;background:#dfe9f5"></div>
<div style="left:296px;top:579px;width:1px;height:25px;background:#dfe9f5"></div>
<span class="t" style="left:305px;top:584.33px;font-size:11px;line-height:11px;transform:scale(1,1.2);color:#fff;width:60px;text-align:center;">C/S</span>
<div style="left:373px;top:583px;width:103px;height:19px;background:#fff;border:1px solid #8a98ac"></div>
<div class="cbb" style="left:475px;top:582px;width:15px;height:21px;"></div>
<div class="arr" style="left:479.5px;top:590px"></div>
<span class="t" style="left:378px;top:584.83px;font-size:11px;line-height:11px;transform:scale(1,1.2);color:#000;">1</span>
<div style="left:493px;top:583px;width:130px;height:19px;background:#fff;border:1px solid #8a98ac"></div>
<div class="cbb" style="left:622px;top:582px;width:15px;height:21px;"></div>
<div class="arr" style="left:626.5px;top:590px"></div>
<span class="t" style="left:498px;top:584.83px;font-size:11px;line-height:11px;transform:scale(1,1.2);color:#000;">5</span>
<div style="left:641px;top:583px;width:100px;height:19px;background:#fff;border:1px solid #8a98ac"></div>
<div class="cbb" style="left:740px;top:582px;width:14px;height:21px;"></div>
<div class="arr" style="left:744.0px;top:590px"></div>
<span class="t" style="left:646px;top:584.83px;font-size:11px;line-height:11px;transform:scale(1,1.2);color:#000;">0</span>
<div style="left:759px;top:583px;width:66px;height:19px;background:#fff;border:1px solid #8a98ac"></div>
<div class="cbb" style="left:824px;top:582px;width:14px;height:21px;"></div>
<div class="arr" style="left:828.0px;top:590px"></div>
<span class="t" style="left:764px;top:584.83px;font-size:11px;line-height:11px;transform:scale(1,1.2);color:#000;">2</span>
<div style="left:842px;top:583px;width:65px;height:19px;background:#fff;border:1px solid #8a98ac"></div>
<div class="cbb" style="left:906px;top:582px;width:15px;height:21px;"></div>
<div class="arr" style="left:910.5px;top:590px"></div>
<span class="t" style="left:847px;top:584.83px;font-size:11px;line-height:11px;transform:scale(1,1.2);color:#000;">3</span>
<div style="left:924px;top:583px;width:85px;height:19px;background:#fff;border:1px solid #8a98ac"></div>
<div class="cbb" style="left:1008px;top:582px;width:15px;height:21px;"></div>
<div class="arr" style="left:1012.5px;top:590px"></div>
<span class="t" style="left:929px;top:584.83px;font-size:11px;line-height:11px;transform:scale(1,1.2);color:#000;">4</span>
<div style="left:1027px;top:583px;width:84px;height:19px;background:#fff;border:1px solid #8a98ac"></div>
<div class="cbb" style="left:1110px;top:582px;width:16px;height:21px;"></div>
<div class="arr" style="left:1115.0px;top:590px"></div>
<span class="t" style="left:1032px;top:584.83px;font-size:11px;line-height:11px;transform:scale(1,1.2);color:#000;">0</span>
<div style="left:1127px;top:580px;width:17px;height:24px;background:linear-gradient(135deg,#f4f4f6,#d6d6da);border:1px solid #c8c8cc"></div>
<span class="t" style="left:297.5px;top:607.13px;font-size:11px;line-height:11px;transform:scale(1,1.2);color:#000;">1(1)</span>
<span class="t" style="left:377px;top:607.13px;font-size:11px;line-height:11px;transform:scale(1,1.2);color:#000;">ANT2901</span>
<span class="t" style="left:497.5px;top:607.13px;font-size:11px;line-height:11px;transform:scale(1,1.2);color:#000;">3878806</span>
<span class="t" style="left:761.5px;top:607.13px;font-size:11px;line-height:11px;transform:scale(1,1.2);color:#000;">57.92</span>
<span class="t" style="left:845px;top:607.13px;font-size:11px;line-height:11px;transform:scale(1,1.2);color:#000;">42.945</span>
<span class="t" style="left:927px;top:607.13px;font-size:11px;line-height:11px;transform:scale(1,1.2);color:#000;">90</span>
<span class="t" style="left:297.5px;top:628.23px;font-size:11px;line-height:11px;transform:scale(1,1.2);color:#000;">2(2)</span>
<span class="t" style="left:377px;top:628.23px;font-size:11px;line-height:11px;transform:scale(1,1.2);color:#000;">ANT2902</span>
<span class="t" style="left:497.5px;top:628.23px;font-size:11px;line-height:11px;transform:scale(1,1.2);color:#000;">3878806</span>
<span class="t" style="left:761.5px;top:628.23px;font-size:11px;line-height:11px;transform:scale(1,1.2);color:#000;">6.095</span>
<span class="t" style="left:845px;top:628.23px;font-size:11px;line-height:11px;transform:scale(1,1.2);color:#000;">40.975</span>
<span class="t" style="left:927px;top:628.23px;font-size:11px;line-height:11px;transform:scale(1,1.2);color:#000;">270</span>
<span class="t" style="left:297.5px;top:649.33px;font-size:11px;line-height:11px;transform:scale(1,1.2);color:#000;">3(3)</span>
<span class="t" style="left:377px;top:649.33px;font-size:11px;line-height:11px;transform:scale(1,1.2);color:#000;">ANT2903</span>
<span class="t" style="left:497.5px;top:649.33px;font-size:11px;line-height:11px;transform:scale(1,1.2);color:#000;">3878806</span>
<span class="t" style="left:761.5px;top:649.33px;font-size:11px;line-height:11px;transform:scale(1,1.2);color:#000;">3.145</span>
<span class="t" style="left:845px;top:649.33px;font-size:11px;line-height:11px;transform:scale(1,1.2);color:#000;">43.395</span>
<span class="t" style="left:927px;top:649.33px;font-size:11px;line-height:11px;transform:scale(1,1.2);color:#000;">180</span>
<span class="t" style="left:297.5px;top:670.43px;font-size:11px;line-height:11px;transform:scale(1,1.2);color:#000;">4(4)</span>
<span class="t" style="left:377px;top:670.43px;font-size:11px;line-height:11px;transform:scale(1,1.2);color:#000;">ANT2904</span>
<span class="t" style="left:497.5px;top:670.43px;font-size:11px;line-height:11px;transform:scale(1,1.2);color:#000;">3878806</span>
<span class="t" style="left:761.5px;top:670.43px;font-size:11px;line-height:11px;transform:scale(1,1.2);color:#000;">59.72</span>
<span class="t" style="left:845px;top:670.43px;font-size:11px;line-height:11px;transform:scale(1,1.2);color:#000;">42.895</span>
<span class="t" style="left:927px;top:670.43px;font-size:11px;line-height:11px;transform:scale(1,1.2);color:#000;">90</span>
<span class="t" style="left:297.5px;top:691.53px;font-size:11px;line-height:11px;transform:scale(1,1.2);color:#000;">5(5)</span>
<span class="t" style="left:377px;top:691.53px;font-size:11px;line-height:11px;transform:scale(1,1.2);color:#000;">ANT2905</span>
<span class="t" style="left:497.5px;top:691.53px;font-size:11px;line-height:11px;transform:scale(1,1.2);color:#000;">3878806</span>
<span class="t" style="left:761.5px;top:691.53px;font-size:11px;line-height:11px;transform:scale(1,1.2);color:#000;">56.12</span>
<span class="t" style="left:845px;top:691.53px;font-size:11px;line-height:11px;transform:scale(1,1.2);color:#000;">42.945</span>
<span class="t" style="left:927px;top:691.53px;font-size:11px;line-height:11px;transform:scale(1,1.2);color:#000;">90</span>
<span class="t" style="left:297.5px;top:712.63px;font-size:11px;line-height:11px;transform:scale(1,1.2);color:#000;">6(6)</span>
<span class="t" style="left:377px;top:712.63px;font-size:11px;line-height:11px;transform:scale(1,1.2);color:#000;">C1053</span>
<span class="t" style="left:497.5px;top:712.63px;font-size:11px;line-height:11px;transform:scale(1,1.2);color:#000;">8350848</span>
<span class="t" style="left:761.5px;top:712.63px;font-size:11px;line-height:11px;transform:scale(1,1.2);color:#000;">34.22</span>
<span class="t" style="left:845px;top:712.63px;font-size:11px;line-height:11px;transform:scale(1,1.2);color:#000;">14.32</span>
<span class="t" style="left:927px;top:712.63px;font-size:11px;line-height:11px;transform:scale(1,1.2);color:#000;">0</span>
<span class="t" style="left:297.5px;top:733.73px;font-size:11px;line-height:11px;transform:scale(1,1.2);color:#000;">7(7)</span>
<span class="t" style="left:377px;top:733.73px;font-size:11px;line-height:11px;transform:scale(1,1.2);color:#000;">C1055</span>
<span class="t" style="left:497.5px;top:733.73px;font-size:11px;line-height:11px;transform:scale(1,1.2);color:#000;">8350844</span>
<span class="t" style="left:761.5px;top:733.73px;font-size:11px;line-height:11px;transform:scale(1,1.2);color:#000;">36.22</span>
<span class="t" style="left:845px;top:733.73px;font-size:11px;line-height:11px;transform:scale(1,1.2);color:#000;">14.295</span>
<span class="t" style="left:927px;top:733.73px;font-size:11px;line-height:11px;transform:scale(1,1.2);color:#000;">0</span>
<span class="t" style="left:297.5px;top:754.83px;font-size:11px;line-height:11px;transform:scale(1,1.2);color:#000;">8(8)</span>
<span class="t" style="left:377px;top:754.83px;font-size:11px;line-height:11px;transform:scale(1,1.2);color:#000;">C1057</span>
<span class="t" style="left:497.5px;top:754.83px;font-size:11px;line-height:11px;transform:scale(1,1.2);color:#000;">8350848</span>
<span class="t" style="left:761.5px;top:754.83px;font-size:11px;line-height:11px;transform:scale(1,1.2);color:#000;">33.22</span>
<span class="t" style="left:845px;top:754.83px;font-size:11px;line-height:11px;transform:scale(1,1.2);color:#000;">14.32</span>
<span class="t" style="left:927px;top:754.83px;font-size:11px;line-height:11px;transform:scale(1,1.2);color:#000;">180</span>
<span class="t" style="left:297.5px;top:775.93px;font-size:11px;line-height:11px;transform:scale(1,1.2);color:#000;">9(9)</span>
<span class="t" style="left:377px;top:775.93px;font-size:11px;line-height:11px;transform:scale(1,1.2);color:#000;">C1601</span>
<span class="t" style="left:497.5px;top:775.93px;font-size:11px;line-height:11px;transform:scale(1,1.2);color:#000;">8350844</span>
<span class="t" style="left:761.5px;top:775.93px;font-size:11px;line-height:11px;transform:scale(1,1.2);color:#000;">50.27</span>
<span class="t" style="left:845px;top:775.93px;font-size:11px;line-height:11px;transform:scale(1,1.2);color:#000;">22.72</span>
<span class="t" style="left:927px;top:775.93px;font-size:11px;line-height:11px;transform:scale(1,1.2);color:#000;">270</span>
<div style="left:1128px;top:604px;width:14px;height:189px;background:#e2e2e5;border-left:1px solid #c4c4c8"></div>
<div style="left:1128px;top:646px;width:14px;height:125px;background:linear-gradient(90deg,#7e8086 0%,#a9abb2 25%,#c9cad1 60%,#d6d7de 100%);border-radius:0 0 6px 6px"></div>
<svg style="left:1128px;top:604px" width="14" height="189" viewBox="0 0 14 189"><path d="M3.8 13.5 L7.0 6.5 L10.2 13.5 Z" fill="#3a3a3a"/><path d="M3.8 176 L7.0 183 L10.2 176 Z" fill="#3a3a3a"/><defs><linearGradient id="sg1128604" x1="0" x2="1" y1="0" y2="0"><stop offset="0" stop-color="#b9cde2"/><stop offset="0.5" stop-color="#dfe9f3"/><stop offset="1" stop-color="#c9d8e8"/></linearGradient></defs><path d="M0.5 18 Q12.5 18.5 13 29 L13 37 Q12.5 47.5 0.5 48 Z" fill="url(#sg1128604)" stroke="#5d7086" stroke-width="1.1"/></svg>
<div style="left:362px;top:578px;width:652px;height:28px;border:5px solid #f40000"></div>
<div style="left:293px;top:801px;width:853px;height:20px;background:#fff;border:1px solid #a8a8ac;border-top-color:#8e8e92"></div>
<span class="t" style="left:299px;top:806.31px;font-size:11.3px;line-height:11.3px;transform:scale(1,1.17);color:#000;">Total 360 Components are imported correctly.</span>
<div style="left:1132px;top:802px;width:13px;height:18px;background:#e1e1e4;border:1px solid #b8b8be"></div>
<svg style="left:1132px;top:802px" width="13" height="18" viewBox="0 0 13 18"><path d="M4 5.5 L6.5 2.5 L9 5.5 Z M4 12.5 L6.5 15.5 L9 12.5 Z" fill="#555"/><rect x="3.5" y="7" width="6" height="4" rx="1.5" fill="#b8bcc6" stroke="#80848e" stroke-width=".8"/></svg>
<div style="left:285px;top:836px;width:868px;height:1px;background:#a9a9a9"></div>
<div style="left:285px;top:837px;width:868px;height:1px;background:#f0f0f0"></div>
<div style="left:285px;top:879px;width:868px;height:1px;background:#a9a9a9"></div>
<div style="left:285px;top:880px;width:868px;height:1px;background:#f0f0f0"></div>
<div class="btn" style="left:474px;top:849px;width:78px;height:20px;"></div>
<span class="t" style="left:474px;top:852.43px;font-size:11px;line-height:11px;transform:scale(1,1.2);color:#111;width:78px;text-align:center;">View File</span>
<div class="btn" style="left:558px;top:849px;width:120px;height:20px;"></div>
<span class="t" style="left:558px;top:852.43px;font-size:11px;line-height:11px;transform:scale(1,1.2);color:#111;width:120px;text-align:center;">Apply to Table</span>
<div class="btn" style="left:685px;top:849px;width:96px;height:20px;"></div>
<span class="t" style="left:685px;top:852.43px;font-size:11px;line-height:11px;transform:scale(1,1.2);color:#111;width:96px;text-align:center;">Save Setting</span>
<div class="btn" style="left:788px;top:849px;width:91px;height:20px;"></div>
<span class="t" style="left:788px;top:852.43px;font-size:11px;line-height:11px;transform:scale(1,1.2);color:#111;width:91px;text-align:center;">Load Setting</span>
<div class="btn" style="left:886px;top:849px;width:78px;height:20px;"></div>
<span class="t" style="left:886px;top:852.43px;font-size:11px;line-height:11px;transform:scale(1,1.2);color:#111;width:78px;text-align:center;">Save As</span>
<div class="chk" style="left:480px;top:893px;width:13px;height:14px;"></div>
<span class="t" style="left:497.5px;top:892.33px;font-size:11px;line-height:11px;transform:scale(1,1.2);color:#111;">Ignore Item Error</span>
<div class="btn" style="left:593px;top:890px;width:116px;height:20px;"></div>
<span class="t" style="left:593px;top:893.43px;font-size:11px;line-height:11px;transform:scale(1,1.2);color:#111;width:116px;text-align:center;">Newly Import</span>
<div class="btn" style="left:724px;top:890px;width:109px;height:20px;"></div>
<span class="t" style="left:721px;top:893.43px;font-size:11px;line-height:11px;transform:scale(1,1.2);color:#111;width:109px;text-align:center;">Appending Import</span>
<div class="btn" style="left:842px;top:890px;width:116px;height:20px;"></div>
<span class="t" style="left:842px;top:893.43px;font-size:11px;line-height:11px;transform:scale(1,1.2);color:#111;width:116px;text-align:center;">Cancel</span>
<div style="left:717px;top:880px;width:124px;height:42px;border:6px solid #f40000"></div>
</body></html>
